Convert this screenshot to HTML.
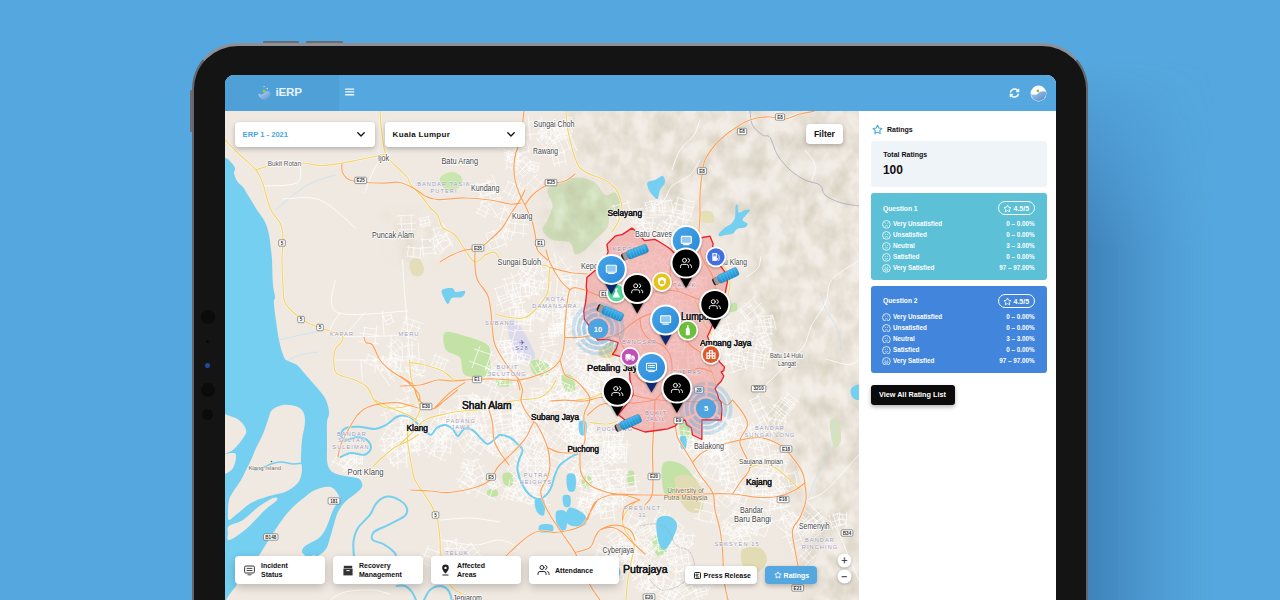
<!DOCTYPE html>
<html lang="en">
<head>
<meta charset="utf-8">
<title>iERP</title>
<style>
*{box-sizing:border-box;margin:0;padding:0}
html,body{width:1280px;height:600px;overflow:hidden}
body{background:#55a8df;font-family:"Liberation Sans",sans-serif;position:relative}
.abs{position:absolute}
#shadow{position:absolute;left:1040px;top:60px;width:240px;height:560px;
 background:linear-gradient(90deg,rgba(52,108,165,.62) 0,rgba(52,108,165,.62) 50px,rgba(52,108,165,.34) 95px,rgba(52,108,165,.1) 140px,rgba(52,108,165,0) 175px);
 -webkit-mask-image:linear-gradient(180deg,transparent 0,rgba(0,0,0,.35) 60px,#000 190px);mask-image:linear-gradient(180deg,transparent 0,rgba(0,0,0,.35) 60px,#000 190px)}
#tablet{position:absolute;left:192px;top:43px;width:896px;height:640px;border-radius:46px;background:#141414;border:2px solid #66676c;border-top:3px solid #8f9095}
.hwb{position:absolute;background:#6c6d72;border-radius:1px}
#screen{position:absolute;left:225px;top:75px;width:831px;height:525px;border-radius:9px 9px 0 0;overflow:hidden;background:#fff}
#hdr{position:absolute;left:0;top:0;width:831px;height:36px;background:#55a8df}
#logo{position:absolute;left:0;top:0;width:114px;height:36px;background:#50a0d8}
#map{position:absolute;left:0;top:36px;width:634px;height:489px;background:#efe9e1;overflow:hidden}
#panel{position:absolute;left:634px;top:36px;width:197px;height:489px;background:#fff}
.b{font-weight:700}
.card{position:absolute;background:#fff;border-radius:4px;box-shadow:0 2px 5px rgba(0,0,0,.22)}
.t{position:absolute;white-space:nowrap;font-weight:700;color:#111;line-height:1}
</style>
</head>
<body>
<div id="shadow"></div>
<div class="hwb" style="left:190px;top:89.500px;width:4px;height:42.500px"></div>
<div class="hwb" style="left:263px;top:40.800px;width:36px;height:4px"></div>
<div class="hwb" style="left:306px;top:40.800px;width:36.600px;height:4px"></div>
<div id="tablet"></div>
<!-- sensors -->
<div class="abs" style="left:200.700px;top:309.700px;width:14px;height:14px;border-radius:50%;background:#0b0b0b"></div>
<div class="abs" style="left:206.200px;top:339.500px;width:3px;height:3px;border-radius:50%;background:#090909"></div>
<div class="abs" style="left:205.200px;top:363.200px;width:5px;height:5px;border-radius:50%;background:#1d4c9a"></div>
<div class="abs" style="left:200.700px;top:383px;width:14px;height:14px;border-radius:50%;background:#0b0b0b"></div>
<div class="abs" style="left:202.200px;top:408.800px;width:11px;height:11px;border-radius:50%;background:#0b0b0b"></div>

<div id="screen">
 <div id="hdr">
  <div id="logo"></div>
  <svg class="abs" style="left:31px;top:9px" width="18" height="18" viewBox="0 0 18 18">
   <defs><linearGradient id="lg1" x1="0" y1="0" x2="1" y2="1"><stop offset="0" stop-color="#b9dcf3"/><stop offset="1" stop-color="#5d8fd0"/></linearGradient></defs>
   <path d="M2.2 9.6 C4.5 11.2 7.2 10.8 8.4 8.6 C9.6 7 12.6 6.6 14.4 8.3 C15 12.2 12.5 15.6 8.6 15.7 C5 15.7 2.6 13 2.2 9.6Z" fill="url(#lg1)"/>
   <circle cx="8" cy="7" r="1.5" fill="#9acb3c"/><circle cx="8.1" cy="2.6" r=".7" fill="#cfe6f7"/><circle cx="11.2" cy="4.6" r=".8" fill="#cfe6f7"/>
  </svg>
  <div class="t" style="left:50.5px;top:11.3px;font-size:11.6px;color:#e6f2fb;letter-spacing:-.2px">iERP</div>
  <svg class="abs" style="left:120px;top:13px" width="10" height="8" viewBox="0 0 10 8"><path d="M.2 1.1h9M.2 3.9h9M.2 6.7h9" stroke="#f4f9fd" stroke-width="1.4"/></svg>
  <svg class="abs" style="left:784px;top:12.5px" width="11" height="10" viewBox="0 0 512 512"><path fill="#f7fbfe" d="M370.7 133.3C339.5 104 298.9 88 255.800 88c-77.500.1-144.300 53.200-162.800 126.900-1.300 5.400-6.100 9.200-11.700 9.200H24.100c-7.500 0-13.200-6.800-11.800-14.200C33.900 94.900 134.800 8 256 8c66.400 0 126.800 26.100 171.300 68.700L463 41C478.100 25.900 504 36.600 504 57.900V192c0 13.300-10.700 24-24 24H345.900c-21.400 0-32.100-25.900-17-41l41.800-41.700zM32 296h134.100c21.400 0 32.100 25.900 17 41l-41.800 41.800c31.300 29.300 71.800 45.300 114.900 45.300 77.400-.1 144.300-53.100 162.800-126.800 1.300-5.400 6.100-9.200 11.700-9.200h57.300c7.500 0 13.200 6.800 11.800 14.200C478.100 417.100 377.200 504 256 504c-66.400 0-126.800-26.100-171.300-68.700L49 471c-15.100 15.100-41 4.400-41-16.900V320c0-13.300 10.700-24 24-24z"/></svg>
  <svg class="abs" style="left:804.500px;top:9.500px" width="17" height="17" viewBox="0 0 17 17">
   <defs><linearGradient id="lg2" x1="0" y1="0" x2="1" y2="1"><stop offset="0" stop-color="#a8d2ee"/><stop offset="1" stop-color="#4f7fc4"/></linearGradient><clipPath id="avc"><circle cx="8.500" cy="8.500" r="7.600"/></clipPath></defs>
   <circle cx="8.500" cy="8.500" r="7.900" fill="#fdfefe"/>
   <path clip-path="url(#avc)" d="M0 8.800 C3 10.300 6.500 10.200 8.300 8.200 C10 6.400 13.500 5.600 17 7.200 V17 H0Z" fill="url(#lg2)"/>
   <circle cx="7.900" cy="5.900" r="1.300" fill="#86c440"/>
  </svg>
 </div>
 <div id="map">
<svg style="position:absolute;left:0;top:0" width="634" height="489" viewBox="225 111 634 489">
<rect x="225" y="111" width="634" height="489" fill="#efe9e1"/>
<path d="M547.5 190C548.8 186.2 555 184.6 560 182.5C565 180.4 571.7 177.5 577.5 177.5C583.3 177.5 590.4 179.6 595 182.5C599.6 185.4 601.7 193.3 605 195C608.3 196.7 612.5 190.8 615 192.5C617.5 194.2 620.8 201.2 620 205C619.2 208.8 612.1 211.2 610 215C607.9 218.8 610 223.3 607.5 227.5C605 231.7 598.8 236.2 595 240C591.2 243.8 588.3 247.7 585 250C581.7 252.3 577.5 255.2 575 254C572.5 252.8 573.8 244.8 570 242.5C566.2 240.2 557.1 242.1 552.5 240C547.9 237.9 543.3 233.3 542.5 230C541.7 226.7 545.8 224.2 547.5 220C549.2 215.8 552.5 210 552.5 205C552.5 200 546.2 193.8 547.5 190Z" fill="#d0dfbb" />
<defs>
<filter id="hsh" x="0" y="0" width="100%" height="100%" color-interpolation-filters="sRGB"><feTurbulence type="fractalNoise" baseFrequency="0.06 0.045" numOctaves="3" seed="11"/><feColorMatrix type="matrix" values="0 0 0 0 .68  0 0 0 0 .65  0 0 0 0 .54  1 0 0 0 -.38"/></filter>
<filter id="hhl" x="0" y="0" width="100%" height="100%" color-interpolation-filters="sRGB"><feTurbulence type="fractalNoise" baseFrequency="0.06 0.045" numOctaves="3" seed="11"/><feColorMatrix type="matrix" values="0 0 0 0 1  0 0 0 0 1  0 0 0 0 1  -1.400 0 0 0 .62"/></filter>
<filter id="hbl"><feGaussianBlur stdDeviation="9"/></filter>
<mask id="hmask"><g filter="url(#hbl)"><path d="M566 100L870 100L870 610L806 610L794 520L772 430L742 385L738 305L748 262L735 232L700 226L660 222L640 208L622 180L596 172L578 160Z" fill="#fff"/><path d="M548 190L578 178L618 196L608 228L576 254L544 232Z" fill="#fff"/><path d="M385 215L440 225L450 255L400 262Z" fill="#999"/></g></mask>
</defs>
<g mask="url(#hmask)" opacity=".7"><rect x="225" y="111" width="634" height="489" filter="url(#hsh)"/><rect x="225" y="111" width="634" height="489" filter="url(#hhl)"/></g>
<path d="M445 332.5C448.2 330.2 457.9 333.9 465 336C472.1 338.1 483.3 341 487.5 345C491.7 349 489.8 355 490 360C490.2 365 493.2 372.5 489 375C484.8 377.5 469.8 377.9 465 375C460.2 372.1 463.2 361.7 460 357.5C456.8 353.3 448.5 354.2 446 350C443.5 345.8 441.8 334.8 445 332.5Z" fill="#c3e3a6" />
<path d="M530 362.5C530.8 360 536.7 359.6 540 360C543.3 360.4 548.3 362.5 550 365C551.7 367.5 552.5 373.3 550 375C547.5 376.7 538.3 377.1 535 375C531.7 372.9 529.2 365 530 362.5Z" fill="#c3e3a6" />
<path d="M497.5 379C499.5 377.8 507.9 377.8 510 379C512.1 380.2 512 384.8 510 386C508 387.2 500.1 387.2 498 386C495.9 384.8 495.5 380.2 497.5 379Z" fill="#c3e3a6" />
<path d="M562 375C563.2 372.7 569.8 373.5 572 376C574.2 378.5 576.2 387.7 575 390C573.8 392.3 567.2 392.5 565 390C562.8 387.5 560.8 377.3 562 375Z" fill="#c3e3a6" />
<path d="M662.5 465C664.6 459.6 672.5 460.8 677.5 462.5C682.5 464.2 687.9 468.8 692.5 475C697.1 481.2 707.1 495.8 705 500C702.9 504.2 686.7 500.8 680 500C673.3 499.2 667.9 500.8 665 495C662.1 489.2 660.4 470.4 662.5 465Z" fill="#c3e3a6" />
<path d="M680 422C681.3 420.7 686 421.3 688 424C690 426.7 692.7 435.3 692 438C691.3 440.7 686 441 684 440C682 439 680.7 435 680 432C679.3 429 678.7 423.3 680 422Z" fill="#bfe1a2" />
<path d="M440 178C441 175 448.3 172 452 172C455.7 172 461 175.3 462 178C463 180.7 460.7 186 458 188C455.3 190 449 191.7 446 190C443 188.3 439 181 440 178Z" fill="#c9e6ad" />
<path d="M582 478C583 476 588.3 474.7 590 476C591.7 477.3 593 484 592 486C591 488 585.7 489.3 584 488C582.3 486.7 581 480 582 478Z" fill="#c3e3a6" />
<path d="M503 474C504.3 472.3 510.5 472 512 474C513.5 476 513.3 484.3 512 486C510.7 487.7 505.5 486 504 484C502.5 482 501.7 475.7 503 474Z" fill="#c3e3a6" />
<path d="M488 490C489.5 489 495.5 489 497 490C498.5 491 498.5 495 497 496C495.5 497 489.5 497 488 496C486.5 495 486.5 491 488 490Z" fill="#c3e3a6" />
<path d="M652 540C652.7 536.5 659.3 533.7 662 535C664.7 536.3 668.7 544.5 668 548C667.3 551.5 660.7 557.3 658 556C655.3 554.7 651.3 543.5 652 540Z" fill="#c3e3a6" />
<path d="M628 472C629 470 633 470 634 472C635 474 635 482 634 484C633 486 629 486 628 484C627 482 627 474 628 472Z" fill="#c3e3a6" />
<path d="M728 305C729 303.5 734.5 302.2 736 303C737.5 303.8 738 308.5 737 310C736 311.5 731.5 312.8 730 312C728.5 311.2 727 306.5 728 305Z" fill="#c3e3a6" />
<path d="M675 478C676.7 474 685.5 474 690 476C694.5 478 700 484.3 702 490C704 495.7 704 506.3 702 510C700 513.7 693.7 513.7 690 512C686.3 510.3 682.5 505.7 680 500C677.5 494.3 673.3 482 675 478Z" fill="#e2dcb4" />
<path d="M410 262C411 259.3 415.7 257 418 258C420.3 259 423.7 265 424 268C424.3 271 422 275 420 276C418 277 413.7 276.3 412 274C410.3 271.7 409 264.7 410 262Z" fill="#e3ddba" />
<path d="M600 348C602 345.7 609 341.7 612 342C615 342.3 618.3 347.3 618 350C617.7 352.7 613 357 610 358C607 359 601.7 357.7 600 356C598.3 354.3 598 350.3 600 348Z" fill="#ddd3a0" />
<path d="M700 212C701.7 210.3 709.7 210.3 712 212C714.3 213.7 715.7 220.3 714 222C712.3 223.7 704.3 223.7 702 222C699.7 220.3 698.3 213.7 700 212Z" fill="#e6e0b8" />
<path d="M742 550C744.7 546.7 755.8 546.3 760 548C764.2 549.7 767.3 556 767 560C766.7 564 761.8 570.7 758 572C754.2 573.3 746.7 571.7 744 568C741.3 564.3 739.3 553.3 742 550Z" fill="#e2dcb4" />
<path d="M830 422C830.7 417.5 836.2 417 838 420C839.8 423 841.7 435.5 841 440C840.3 444.5 835.8 450 834 447C832.2 444 829.3 426.5 830 422Z" fill="#d5e2bd" />
<path d="M507.5 325C507.9 319.6 512.9 317.5 517.5 322.5C522.1 327.5 533.8 348.8 535 355C536.2 361.2 528.3 360 525 360C521.7 360 517.9 360.8 515 355C512.1 349.2 507.1 330.4 507.5 325Z" fill="#dcd9ea" />
<path d="M411 409Q409 412 407 416M408 408Q405 411 404 415M405 406Q402 410 401 413M402 403Q399 409 397 413M412 410Q406 406 401 404M407 415Q404 412 399 411M421 435Q424 444 427 450M412 437Q415 446 419 456M426 436Q417 439 410 443M428 447Q422 449 416 452M386 427Q393 431 399 434M384 433Q390 436 395 439M381 437Q387 442 392 444M388 427Q384 433 381 439M394 429Q390 435 385 443M398 432Q393 438 391 445M395 406Q399 416 402 425M384 411Q386 419 390 428M402 408Q390 411 380 416M402 420Q395 423 388 425M422 416Q421 428 417 440M415 417Q413 426 411 436M409 417Q408 425 405 434M404 413Q400 424 399 435M424 422Q412 419 399 417M417 434Q409 433 400 430M418 425Q422 427 429 429M413 430Q420 432 430 436M411 437Q418 440 426 442M417 424Q416 431 412 437M423 428Q421 433 419 439M430 429Q428 435 425 442M407 462Q399 462 390 463M405 451Q398 451 391 452M407 468Q406 457 406 445M398 469Q398 456 397 445M391 464Q390 457 390 450M421 446Q417 449 411 453M420 444Q415 448 410 451M417 441Q412 445 408 447M414 439Q410 441 407 444M420 449Q415 445 413 439M414 452Q410 448 407 444M452 437Q451 446 450 455M444 435Q443 445 443 456M436 432Q435 445 434 457M456 440Q444 440 432 438M452 453Q443 451 433 451M401 407Q412 407 422 407M401 419Q412 418 421 419M406 406Q405 413 406 420M417 404Q418 414 417 422M419 435Q419 444 419 451M414 433Q415 442 414 452M409 433Q410 442 409 453M405 435Q404 442 405 450M420 436Q412 437 404 436M420 443Q412 442 403 442M421 450Q411 451 402 450M418 439Q409 439 400 440M418 428Q408 429 400 429M417 442Q417 433 416 426M409 441Q409 434 408 428M401 441Q400 435 400 428M409 455Q401 461 392 466M405 451Q398 455 390 460M401 445Q393 449 387 455M400 440Q391 445 382 451M406 453Q404 448 400 443M401 461Q395 454 390 445M395 467Q388 457 382 448M447 437Q447 443 445 452M442 438Q443 444 441 450M437 438Q437 444 436 449M447 441Q442 441 436 440M445 448Q440 447 436 447M431 440Q442 444 451 449M425 451Q435 456 446 461M437 439Q433 448 428 458M447 446Q442 453 440 461M410 404Q405 406 401 408M410 397Q402 400 397 402M410 406Q408 400 406 395M402 408Q402 405 399 400M444 441Q436 448 430 454M439 435Q432 442 425 448M435 429Q428 436 419 444M440 442Q436 439 432 434M435 454Q428 445 420 438M396 449Q389 450 381 451M396 444Q388 445 379 446M394 438Q386 439 379 440M393 449Q392 444 392 439M385 453Q385 445 383 438M420 432Q415 439 411 445M416 427Q409 434 405 443M411 424Q406 433 400 441M406 421Q401 429 396 437M420 434Q411 429 402 423M409 442Q404 439 400 436M443 425Q446 430 449 433M436 428Q441 435 445 439M444 426Q442 429 437 432M448 431Q445 434 442 436M405 402Q408 408 411 413M401 405Q404 409 406 414M396 407Q400 411 402 418M408 403Q402 406 395 410M411 410Q405 412 399 416M444 418Q450 428 455 435M437 422Q442 431 449 439M431 426Q437 434 443 444M449 419Q439 425 431 431M452 431Q447 436 440 439M402 436Q406 443 410 447M397 440Q402 447 405 452M391 444Q395 449 399 455M402 439Q397 441 393 445M411 445Q404 450 396 455M411 427Q413 435 417 443M403 431Q405 438 409 446M413 429Q408 432 402 433M417 434Q409 436 403 440M419 439Q412 442 405 445M395 398Q403 402 411 406M394 402Q400 406 408 409M390 405Q399 409 408 414M391 410Q397 414 403 417M398 401Q395 405 393 410M407 405Q404 409 401 415M413 436Q403 437 395 439M409 426Q402 428 396 428M411 437Q409 431 409 426M404 440Q404 433 402 424M397 440Q395 433 395 426M359 460Q352 465 348 470M355 456Q350 462 344 466M352 453Q348 456 342 462M357 462Q353 458 349 454M351 467Q348 463 344 459M351 456Q348 465 343 472M344 455Q340 460 338 466M340 449Q336 458 331 466M351 460Q343 457 336 452M347 468Q339 465 332 461M360 463Q354 468 348 475M356 459Q349 465 344 472M353 457Q347 462 342 469M347 454Q344 459 339 463M357 464Q353 460 348 455M355 470Q347 465 342 458M351 473Q345 469 339 463M362 453Q363 459 362 465M360 455Q361 458 360 464M357 454Q356 458 357 465M354 454Q354 460 354 464M364 456Q358 455 352 456M363 459Q359 459 354 459M363 463Q358 463 354 463M363 474Q360 478 358 483M359 472Q356 476 354 480M354 470Q351 473 350 478M363 475Q359 471 354 470M360 478Q355 477 353 475M359 482Q354 481 350 478M488 436Q493 440 496 442M486 438Q491 441 495 445M485 442Q487 444 492 447M481 444Q485 446 491 450M489 437Q486 441 483 445M495 440Q492 444 488 449M451 409Q451 417 448 424M440 408Q440 415 438 421M450 411Q445 411 440 409M450 422Q443 422 436 420M472 394Q475 395 480 397M468 396Q474 399 481 401M468 400Q473 401 479 403M466 402Q471 405 479 407M473 392Q470 398 468 405M477 394Q475 399 472 406M480 397Q480 402 477 406M516 401Q511 404 508 407M514 397Q508 400 505 404M512 391Q505 396 500 401M514 401Q513 397 509 395M510 407Q506 402 503 398M479 419Q481 425 482 432M471 418Q474 428 475 436M464 421Q465 429 467 437M480 418Q471 421 462 422M479 425Q474 426 467 428M480 433Q475 435 469 436M487 434Q494 436 501 436M489 439Q495 440 498 439M489 441Q494 440 499 442M489 445Q494 445 498 446M491 434Q490 439 490 446M497 436Q496 440 497 445M491 438Q500 443 507 447M483 447Q492 454 503 458M495 438Q492 444 487 451M506 443Q501 451 497 458M483 400Q479 406 474 409M480 398Q476 401 472 406M478 396Q474 400 470 404M475 395Q472 397 468 402M482 401Q478 398 475 394M478 404Q474 401 472 398M476 408Q471 403 468 400M510 430Q509 435 511 439M503 431Q504 436 505 441M512 431Q506 432 501 432M512 434Q507 434 502 435M513 438Q507 439 502 440M461 422Q461 430 461 436M455 420Q455 429 455 438M451 418Q449 429 450 439M446 418Q445 429 445 440M463 423Q454 424 443 423M458 434Q453 434 447 434M502 452Q496 452 492 453M505 444Q497 444 488 445M501 454Q500 449 500 443M493 456Q493 450 492 442M489 441Q483 449 479 456M485 434Q477 443 471 454M478 429Q471 439 464 449M486 442Q481 439 476 435M482 455Q473 449 465 443M478 443Q470 447 464 452M474 430Q465 438 454 443M479 445Q474 437 470 431M471 449Q467 442 463 436M465 453Q461 447 457 440M475 416Q469 416 463 417M474 410Q468 411 462 411M475 403Q467 404 459 405M474 416Q473 409 472 404M464 416Q464 412 463 406M530 434Q524 435 516 436M531 430Q521 431 514 432M531 424Q522 425 513 427M528 420Q522 420 514 422M527 432Q526 427 526 422M518 436Q517 429 516 421M465 412Q464 421 464 429M460 409Q458 420 458 430M454 410Q452 419 452 429M448 411Q446 418 446 427M467 415Q456 413 446 413M463 426Q456 424 448 424M472 407Q465 408 458 408M474 395Q464 395 454 397M470 408Q469 401 469 396M460 410Q460 403 459 395M485 425Q487 430 486 435M481 424Q483 431 482 436M477 424Q478 431 479 438M475 426Q474 431 476 436M485 425Q480 425 474 426M486 430Q479 431 474 431M484 435Q481 435 477 435M504 447Q495 449 488 452M500 440Q494 442 486 445M502 451Q500 443 497 437M496 450Q495 446 493 442M492 454Q489 449 487 441M461 429Q453 430 446 433M463 424Q453 427 441 428M458 419Q450 420 444 422M461 412Q451 415 438 417M460 428Q460 420 457 415M453 429Q451 423 450 416M445 431Q444 425 443 418M516 424Q507 424 497 425M517 419Q508 419 496 419M517 414Q507 413 496 414M515 408Q506 408 498 408M513 427Q512 416 513 406M501 423Q501 416 501 410M524 415Q526 421 530 426M517 414Q521 423 527 432M514 419Q517 425 521 431M509 419Q514 427 517 436M525 416Q518 420 511 424M528 426Q521 429 517 431M492 391Q497 392 502 395M487 399Q494 403 501 404M492 387Q489 395 486 403M499 390Q495 397 493 405M503 395Q502 400 500 404M450 425Q446 432 439 442M443 420Q437 430 431 438M436 416Q431 425 425 433M449 428Q441 424 434 419M441 439Q435 434 427 430M490 398Q489 407 489 417M484 396Q484 406 483 419M477 395Q477 406 477 420M471 399Q470 408 471 415M491 399Q481 400 470 399M491 408Q481 408 470 407M491 416Q480 416 469 416M470 433Q478 435 484 438M468 440Q475 442 482 445M473 432Q471 437 470 442M479 432Q475 439 474 446M482 436Q481 440 479 444M511 412Q517 412 525 412M512 416Q517 415 524 416M512 421Q519 420 523 421M512 425Q516 426 523 426M513 411Q512 417 513 426M523 411Q523 419 522 426M451 429Q446 434 444 438M446 425Q442 431 439 435M444 420Q438 426 432 434M451 431Q445 427 440 422M447 439Q440 434 433 428M497 407Q500 414 502 421M488 409Q492 418 494 425M481 410Q484 419 488 429M497 407Q490 410 482 413M502 414Q491 416 482 421M502 421Q494 424 487 427M519 446Q513 449 507 451M519 438Q511 442 502 446M516 432Q507 435 499 439M520 447Q517 439 513 431M514 450Q511 441 507 433M508 453Q505 445 500 436M475 421Q480 425 485 428M472 428Q477 430 480 433M477 420Q474 424 470 430M481 424Q478 427 475 432M486 424Q482 430 477 436M494 408Q489 411 486 415M491 404Q487 408 482 411M489 396Q483 401 475 408M493 409Q489 405 485 399M487 415Q483 410 478 404M498 407Q500 413 500 422M491 411Q493 415 492 420M501 411Q495 412 489 413M500 417Q495 418 491 419M508 418Q509 426 511 434M501 418Q503 429 504 438M493 419Q496 428 497 440M507 420Q501 421 496 422M512 426Q503 429 493 430M509 434Q503 435 498 436M461 398Q466 401 471 402M459 403Q464 404 469 407M455 407Q462 411 469 412M461 399Q460 403 458 408M470 400Q468 407 465 412M524 426Q519 428 516 431M521 420Q516 424 512 426M524 427Q522 424 520 420M521 430Q518 426 516 421M516 432Q514 427 512 425M536 400Q542 404 550 409M532 404Q540 409 548 415M528 409Q538 415 546 421M528 415Q535 419 540 423M537 404Q534 409 530 414M550 406Q544 415 538 425M582 429Q576 433 569 435M580 422Q573 424 565 428M581 431Q579 427 577 422M576 435Q574 429 571 422M571 434Q570 430 567 426M512 402Q522 403 529 407M509 412Q517 416 527 418M517 401Q514 408 513 415M526 405Q524 410 523 416M549 435Q544 438 540 443M544 431Q540 435 536 438M550 437Q547 434 542 429M545 440Q543 436 540 434M543 443Q540 440 536 436M575 441Q570 441 564 441M576 434Q568 434 562 435M575 430Q568 430 563 430M574 441Q573 436 573 429M565 440Q566 436 565 431M562 457Q558 467 555 474M552 454Q549 461 546 469M565 463Q555 458 546 455M559 471Q551 467 544 465M521 407Q523 413 524 418M514 409Q516 414 517 420M523 409Q518 411 513 412M525 415Q520 417 515 418M584 424Q578 426 573 426M584 417Q576 417 571 420M583 426Q581 420 581 416M579 428Q577 421 576 416M574 429Q572 423 571 417M547 437Q543 447 539 458M541 435Q538 444 533 455M534 436Q532 443 529 450M531 429Q526 441 522 452M547 443Q537 439 526 435M541 453Q533 449 524 446M541 427Q543 433 545 438M537 428Q539 434 542 440M533 427Q536 434 539 443M529 429Q533 438 535 445M540 427Q536 428 530 431M542 433Q538 434 532 436M546 437Q539 440 533 442M516 439Q516 444 517 448M509 439Q511 445 511 451M517 440Q513 441 508 442M519 446Q513 447 508 448M557 403Q549 406 540 409M555 398Q546 401 539 404M554 394Q545 397 536 400M549 389Q542 391 537 393M556 406Q552 396 549 387M548 404Q546 399 545 393M542 411Q540 401 536 392M527 403Q527 408 524 412M524 401Q522 407 520 412M520 400Q517 405 516 411M517 400Q516 405 514 408M525 404Q520 403 517 402M523 410Q519 409 515 407M521 398Q529 403 538 408M516 407Q526 411 533 417M525 397Q521 405 517 412M531 400Q526 409 522 415M535 406Q532 410 529 416M575 415Q576 420 579 424M569 416Q571 421 574 427M565 419Q567 423 569 429M576 413Q568 416 563 419M576 420Q572 423 568 424M579 425Q574 428 570 429M534 453Q541 459 550 465M528 456Q539 464 549 472M526 462Q534 470 543 476M523 467Q531 473 539 480M537 456Q532 463 526 470M547 463Q540 470 536 477M577 412Q573 419 571 424M574 412Q572 417 569 421M571 409Q568 415 565 421M568 407Q566 412 562 419M577 415Q572 412 567 409M575 418Q570 416 565 412M573 423Q567 419 562 416M527 428Q534 432 540 439M522 433Q529 440 536 445M519 440Q524 444 530 449M531 429Q525 436 520 443M539 435Q533 443 527 449M585 435Q580 442 574 450M579 430Q574 440 568 447M574 428Q569 435 563 442M569 423Q563 431 557 439M584 439Q575 432 565 425M574 447Q568 443 561 438M563 416Q571 420 577 426M556 419Q566 426 577 434M554 425Q562 432 572 438M551 431Q560 436 568 443M562 419Q558 425 554 431M570 420Q564 428 558 438M576 428Q571 435 568 440M567 410Q558 410 549 411M566 402Q557 403 549 403M565 394Q556 394 549 395M564 409Q563 401 563 395M552 413Q550 403 550 392M573 426Q580 430 588 431M571 432Q580 436 586 438M570 438Q576 440 583 443M576 425Q573 432 570 441M582 427Q580 434 576 443M588 429Q585 437 582 445M525 448Q527 452 531 458M520 448Q526 455 529 462M518 452Q521 457 525 462M513 453Q517 459 521 466M524 448Q520 451 516 454M530 452Q523 456 517 461M530 458Q526 461 522 463M543 396Q546 398 551 398M540 398Q546 398 552 401M540 402Q546 403 551 405M540 405Q545 406 550 407M543 397Q542 401 541 404M547 396Q546 401 544 407M551 398Q550 402 549 407M565 404Q559 408 553 410M565 400Q557 405 550 407M561 396Q555 398 549 402M562 390Q552 395 544 399M564 407Q561 398 557 391M555 411Q551 403 548 395M562 443Q555 451 547 460M557 440Q551 449 543 455M554 434Q546 443 537 453M548 432Q542 439 534 447M557 446Q552 441 547 437M549 455Q543 451 539 446M572 421Q579 423 585 426M571 428Q576 431 580 432M575 422Q574 426 573 429M583 423Q580 428 578 434M524 436Q520 439 516 441M522 433Q517 434 514 438M520 430Q516 432 512 435M518 427Q513 430 510 433M523 437Q520 433 516 427M517 439Q514 436 512 432M564 448Q572 449 579 450M564 451Q571 452 579 453M566 455Q570 456 576 456M564 458Q571 459 578 460M567 446Q566 453 565 460M572 450Q571 455 571 458M577 449Q577 454 575 460M542 401Q537 402 532 401M545 397Q537 397 529 397M543 393Q538 394 531 393M544 388Q536 389 529 388M541 401Q541 395 541 389M533 401Q532 395 532 389M544 412Q548 415 551 419M539 415Q543 419 548 424M536 419Q540 423 545 427M546 411Q541 418 536 422M549 419Q546 422 544 425M570 426Q565 427 561 430M569 423Q565 424 560 427M567 419Q563 421 558 422M570 426Q568 424 566 419M566 428Q565 425 563 421M562 429Q560 426 559 423M608 367Q603 368 597 370M607 363Q600 365 596 366M606 358Q600 359 594 361M606 367Q606 363 604 359M598 369Q597 365 596 361M560 304Q565 307 569 309M556 310Q562 312 567 315M561 303Q560 308 557 311M565 305Q564 310 561 314M569 308Q567 312 565 315M584 365Q579 371 571 376M580 363Q574 368 570 372M578 359Q573 365 566 369M575 355Q570 360 562 366M581 368Q577 363 572 357M576 374Q571 368 565 362M545 373Q556 374 566 375M546 383Q555 384 563 385M551 369Q549 378 549 388M561 373Q560 379 560 386M581 331Q573 336 563 338M577 328Q570 329 564 333M575 323Q568 326 562 328M573 318Q566 321 561 323M577 334Q573 327 571 319M568 336Q565 330 563 323M581 369Q590 374 601 380M578 383Q585 387 592 390M586 366Q582 376 575 387M593 370Q588 379 583 390M599 378Q595 384 592 391M558 380Q564 383 570 385M551 389Q560 393 570 396M559 381Q558 386 555 390M565 383Q562 388 561 393M570 384Q568 389 565 396M566 296Q568 303 569 311M562 298Q564 304 564 310M557 299Q557 306 559 311M568 297Q563 298 556 299M568 303Q562 304 557 305M571 308Q564 310 556 310M545 358Q550 366 555 373M542 361Q546 368 550 375M536 362Q542 371 546 380M531 364Q537 374 543 383M545 361Q541 364 535 367M552 365Q543 371 536 375M553 372Q548 376 541 379M592 330Q596 332 600 336M587 333Q593 338 598 341M586 337Q591 340 595 343M594 329Q590 334 586 339M599 334Q596 339 593 343M563 324Q564 327 565 333M560 323Q562 329 562 334M556 323Q557 329 559 336M554 325Q555 329 556 335M565 324Q558 324 552 326M564 328Q559 328 554 330M566 332Q560 334 553 334M606 365Q608 369 610 375M602 368Q604 373 606 376M598 368Q599 373 602 379M606 367Q603 368 600 370M610 369Q605 372 599 374M610 373Q607 376 601 377M568 392Q572 395 578 399M566 396Q572 399 575 402M564 400Q568 402 573 406M570 393Q566 397 565 402M573 396Q571 400 569 403M576 398Q575 402 572 405M589 378Q595 379 600 383M584 385Q589 388 597 392M591 377Q588 383 586 388M599 381Q596 386 594 392M569 347Q573 351 576 357M564 352Q567 357 570 361M573 347Q567 349 563 354M576 351Q570 354 566 358M577 355Q573 359 570 360M591 338Q585 342 581 349M584 332Q580 337 575 343M590 342Q584 337 580 334M585 348Q581 344 575 339M560 377Q555 381 553 387M556 371Q551 377 545 384M552 366Q545 373 540 381M561 379Q555 375 548 369M554 387Q548 381 542 377M587 325Q578 326 571 328M587 314Q577 315 568 318M587 327Q586 319 585 313M580 330Q578 322 577 313M572 328Q571 322 570 317M602 392Q595 393 590 395M602 387Q596 389 588 391M598 382Q593 385 589 385M602 394Q600 387 598 381M596 394Q594 389 593 384M592 397Q590 389 589 384M589 304Q588 310 587 318M583 303Q582 310 581 317M578 299Q576 308 575 319M571 300Q571 309 569 317M587 303Q580 303 574 301M588 311Q579 308 571 308M585 318Q578 317 571 316M567 313Q568 318 571 325M561 316Q563 321 564 325M571 314Q564 315 558 318M574 321Q567 324 560 326M540 348Q550 353 559 355M539 360Q545 361 552 365M546 346Q542 354 539 364M556 350Q552 358 549 367M568 392Q563 395 560 399M564 388Q560 391 557 394M568 396Q565 392 560 387M563 399Q561 396 556 391M596 311Q592 324 587 334M589 309Q585 319 580 330M580 309Q576 317 574 325M596 319Q586 314 577 311M593 330Q582 326 572 321M588 362Q586 368 584 373M584 359Q582 364 579 372M579 359Q578 364 575 368M587 364Q584 362 579 361M585 371Q580 369 575 366M569 320Q574 327 579 335M561 327Q567 334 571 340M570 321Q565 325 561 328M577 325Q570 330 563 335M578 333Q575 336 570 339M578 325Q568 330 558 332M575 319Q565 323 556 326M570 314Q564 316 557 319M574 326Q571 319 569 314M569 331Q565 322 562 313M562 334Q559 324 555 316M593 349Q583 351 576 351M592 346Q583 347 576 348M589 341Q583 341 578 343M588 337Q583 338 577 339M590 350Q588 345 588 337M585 349Q585 344 583 339M578 350Q578 346 577 340M591 324Q587 327 582 331M589 321Q585 324 580 329M587 320Q584 324 579 327M584 318Q581 322 578 323M591 325Q587 321 584 317M587 327Q584 325 582 321M583 330Q580 328 578 324M557 326Q559 331 559 336M553 325Q554 333 555 339M548 327Q549 332 550 339M558 327Q553 328 548 329M558 332Q554 333 550 333M559 336Q555 336 550 337M599 342Q604 353 611 364M592 346Q598 358 603 368M587 353Q591 361 595 368M603 347Q596 351 587 355M609 359Q601 362 593 367M596 360Q603 364 612 368M591 366Q601 371 610 376M589 374Q597 379 606 382M599 359Q593 368 590 377M604 364Q602 372 597 379M612 365Q608 375 603 384M560 367Q554 375 549 382M553 364Q548 370 544 376M547 361Q542 366 539 371M561 372Q552 366 544 360M552 379Q546 376 540 370M575 352Q583 354 589 354M574 359Q581 360 588 360M571 365Q581 366 591 367M577 353Q577 359 576 365M587 351Q586 359 585 370M558 344Q548 346 540 347M555 341Q547 342 541 343M556 335Q547 336 539 338M554 332Q546 332 540 334M553 345Q552 338 551 332M544 345Q543 340 542 334M611 370Q608 375 603 380M605 367Q601 371 599 374M610 372Q606 369 604 367M609 376Q605 372 600 368M605 377Q601 376 599 373M584 403Q574 406 566 409M583 396Q574 398 563 402M582 389Q571 393 560 395M580 404Q579 397 576 391M570 407Q568 401 566 394M605 310Q602 323 600 334M597 312Q596 320 593 329M589 308Q586 318 585 329M606 315Q597 313 587 310M601 322Q595 319 588 319M601 330Q593 329 584 326M565 361Q559 367 556 374M556 357Q552 363 549 367M565 366Q560 361 553 357M562 374Q555 367 547 363M598 390Q596 396 592 404M591 382Q586 394 582 403M584 380Q579 390 576 399M600 393Q588 389 579 383M595 404Q584 399 574 394M577 374Q583 375 588 377M577 377Q583 377 587 379M575 380Q582 383 587 383M576 384Q580 385 584 386M578 375Q578 380 576 383M582 376Q581 379 580 384M587 376Q585 380 585 386M585 368Q592 374 597 378M581 372Q586 377 594 382M579 377Q585 381 589 386M589 369Q585 374 581 379M595 375Q591 378 587 384M584 395Q579 401 575 410M580 389Q575 399 568 411M573 386Q569 397 562 407M566 387Q563 393 559 401M582 395Q575 392 567 387M580 402Q571 398 563 393M575 410Q568 406 559 402M562 331Q555 332 550 334M560 327Q555 329 549 330M558 324Q553 326 550 326M560 331Q560 328 558 324M556 334Q555 329 553 324M552 333Q550 329 550 327M525 259Q533 261 539 264M523 262Q530 267 539 268M520 267Q529 270 538 274M521 271Q528 273 535 277M526 259Q523 266 522 271M532 263Q530 268 529 273M538 264Q536 269 534 276M534 310Q539 312 545 312M532 318Q538 318 544 320M536 308Q534 314 533 321M544 308Q543 315 541 323M517 306Q510 308 500 312M516 298Q505 301 496 306M510 293Q503 296 497 298M514 306Q512 299 510 294M504 312Q500 303 498 296M538 293Q531 296 524 296M536 283Q528 284 521 286M537 296Q535 288 534 281M527 298Q526 292 524 284M572 266Q563 272 555 277M564 258Q558 263 551 267M570 272Q565 265 559 256M562 277Q557 270 552 263M518 271Q522 279 525 289M511 273Q515 282 518 293M504 278Q507 285 509 293M522 273Q512 278 502 280M526 285Q515 289 506 292M529 282Q530 290 529 300M521 280Q520 292 520 301M513 280Q512 291 512 300M530 284Q520 284 512 283M531 297Q520 296 510 296M541 301Q545 303 550 306M536 307Q542 309 550 313M542 299Q539 304 537 310M548 301Q546 308 542 312M552 302Q549 308 546 315M577 278Q576 288 575 297M571 277Q570 287 569 297M564 278Q563 287 563 295M558 275Q557 287 556 296M578 281Q568 279 556 279M573 293Q566 294 559 292M549 277Q539 285 531 294M538 270Q531 277 525 282M547 281Q542 275 537 270M544 289Q535 281 528 273M536 293Q529 286 525 281M526 278Q534 281 544 282M524 285Q534 287 542 289M523 291Q531 293 540 295M528 279Q527 285 525 291M535 278Q533 286 531 296M541 281Q540 289 537 295M551 282Q550 286 550 291M544 280Q543 284 542 291M551 283Q547 282 544 282M550 289Q546 289 542 288M573 285Q569 285 564 287M573 279Q567 279 561 282M574 274Q567 276 558 277M572 285Q570 279 569 274M564 286Q563 281 562 277M518 304Q519 310 520 319M509 306Q511 313 511 319M521 307Q514 307 507 309M521 315Q515 316 510 317M521 299Q523 305 523 314M515 301Q516 308 517 313M525 302Q519 303 513 304M525 310Q520 310 515 311M525 273Q528 276 532 279M522 275Q527 279 530 283M520 279Q523 281 527 285M518 281Q522 283 525 288M526 274Q523 278 519 281M531 279Q529 283 524 286M554 253Q557 263 558 275M547 256Q548 264 550 274M540 256Q541 265 543 276M553 259Q549 259 542 261M558 269Q549 269 540 271M539 307Q545 310 551 314M536 310Q544 315 549 318M536 316Q539 319 544 321M541 308Q538 313 536 317M546 309Q543 316 539 321M550 311Q546 317 543 323M573 311Q564 312 553 313M569 305Q562 305 556 306M569 298Q561 297 555 299M568 311Q567 306 567 299M557 312Q557 305 556 299M515 314Q524 315 534 315M517 319Q524 319 532 319M516 324Q524 324 533 325M514 330Q523 331 534 331M519 315Q519 323 518 329M531 312Q530 323 530 332M574 323Q561 323 549 324M569 315Q561 314 553 316M569 306Q560 306 552 307M570 322Q569 315 569 307M562 328Q560 316 560 303M553 325Q553 316 552 307M533 313Q532 319 530 324M530 313Q528 319 527 323M526 313Q526 316 524 321M523 311Q522 316 520 321M532 315Q528 314 522 312M530 321Q526 321 522 320M526 323Q519 323 514 324M526 318Q520 318 514 318M526 312Q521 313 514 312M524 326Q524 319 524 310M515 326Q516 318 515 310M517 294Q507 298 497 301M513 283Q504 285 494 289M516 298Q514 289 511 281M508 298Q506 292 504 286M500 302Q497 295 495 288M525 302Q519 303 512 306M524 298Q516 301 510 303M521 296Q515 298 512 299M520 292Q515 294 510 295M521 303Q520 298 518 293M515 304Q513 300 512 296M524 263Q528 267 532 269M519 268Q523 271 528 275M526 262Q522 266 519 270M528 265Q525 268 523 272M532 267Q529 272 525 276M705 345Q707 356 708 367M699 346Q701 357 701 367M694 347Q695 356 696 368M687 347Q689 358 689 368M706 350Q696 351 687 352M707 361Q698 362 689 363M722 353Q718 357 713 360M722 346Q713 351 706 357M717 342Q711 345 704 351M721 352Q719 348 716 344M719 358Q714 351 710 344M712 360Q708 355 705 350M685 254Q690 260 693 267M681 258Q686 264 688 269M676 260Q679 266 685 273M686 257Q682 260 677 263M688 261Q684 263 681 266M690 266Q687 268 684 270M608 316Q615 318 623 321M609 321Q615 324 619 325M607 326Q611 327 617 330M612 316Q609 322 608 328M619 321Q617 325 616 328M673 325Q666 328 661 330M672 318Q665 320 657 324M670 312Q663 315 654 318M674 328Q670 319 667 310M667 328Q665 321 662 314M661 331Q659 323 655 316M667 344Q676 344 684 345M667 351Q676 352 684 351M667 358Q676 357 684 358M669 346Q668 351 668 356M675 343Q674 351 675 360M682 344Q682 351 682 358M654 401Q650 404 645 407M651 398Q647 401 643 403M650 392Q644 397 639 400M654 403Q650 399 647 393M651 406Q647 400 643 395M645 406Q643 402 641 400M722 337Q719 341 716 344M720 336Q718 340 714 342M719 332Q715 336 710 341M717 329Q712 335 707 339M723 338Q719 335 714 330M719 340Q717 337 713 335M715 344Q712 340 709 338M611 301Q606 310 603 321M599 296Q595 306 591 317M611 305Q603 301 596 299M610 319Q599 315 587 310M657 404Q656 412 655 417M652 405Q651 411 650 414M648 403Q647 408 646 414M656 406Q652 405 648 404M658 411Q652 410 645 409M656 416Q650 415 645 414M684 300Q681 305 679 313M681 299Q679 306 676 312M676 299Q674 303 673 309M673 296Q671 302 668 309M681 302Q677 302 673 300M680 310Q674 309 669 306M668 265Q666 273 664 281M655 258Q652 271 650 281M671 267Q661 264 651 262M669 281Q658 278 646 275M648 326Q651 333 655 342M644 330Q647 336 648 341M639 331Q641 338 644 344M651 329Q643 331 638 334M652 338Q648 339 643 342M689 274Q696 277 705 279M688 281Q695 284 702 285M687 287Q692 288 699 290M690 276Q689 280 688 285M697 276Q696 282 693 289M702 278Q700 285 699 290M677 311Q681 313 687 318M675 317Q680 318 684 322M680 312Q677 315 676 319M685 315Q683 319 681 322M679 248Q682 254 683 261M673 248Q675 256 678 265M667 250Q671 259 672 266M680 248Q673 249 666 252M682 255Q676 256 668 259M686 261Q677 263 669 266M665 257Q658 266 654 274M660 257Q657 262 651 269M657 251Q651 261 645 269M651 250Q646 256 642 264M662 261Q655 258 649 253M656 270Q649 267 644 262M599 270Q608 275 615 278M592 280Q603 285 611 289M602 267Q597 275 593 284M608 271Q604 279 601 286M615 276Q611 282 608 289M664 312Q661 319 657 324M660 311Q658 316 654 320M657 310Q654 315 651 319M653 307Q651 311 647 317M662 313Q658 310 654 308M661 318Q655 315 650 312M658 323Q653 320 648 317M673 283Q680 286 687 286M672 292Q678 292 684 294M675 280Q674 287 672 294M680 282Q679 289 678 294M686 282Q685 289 683 297M616 256Q620 263 626 269M604 262Q611 270 619 280M618 254Q611 261 603 266M623 262Q615 268 609 273M627 269Q621 273 616 278M624 338Q621 345 620 353M616 336Q614 344 613 351M626 343Q619 341 613 339M623 349Q619 349 613 347M642 309Q640 315 637 319M638 304Q634 313 630 319M633 303Q629 309 626 315M643 312Q636 308 629 304M636 318Q631 316 628 313M640 413Q648 415 658 418M639 423Q647 425 653 427M645 412Q642 419 641 427M653 416Q652 421 650 428M650 388Q648 397 644 404M644 384Q642 393 638 404M637 386Q634 391 633 398M649 390Q642 389 637 386M648 396Q641 393 634 391M647 403Q638 401 631 397M639 392Q643 398 648 406M633 398Q637 403 640 409M643 392Q637 397 630 401M645 397Q640 402 634 405M647 403Q642 405 638 409M676 366Q681 373 684 378M673 369Q676 375 680 380M669 372Q671 378 675 383M679 367Q674 370 668 374M681 372Q677 375 672 378M684 375Q678 379 673 382M629 243Q635 246 643 246M623 253Q635 256 643 258M632 243Q631 250 629 256M641 245Q639 252 639 258M670 353Q665 357 658 358M667 350Q663 353 658 355M666 347Q660 349 656 352M665 343Q659 346 653 349M668 354Q666 349 663 344M663 355Q661 351 659 346M660 359Q656 353 654 347M653 275Q645 275 639 277M651 268Q645 268 639 269M650 277Q649 272 649 266M643 279Q642 272 642 265M678 260Q673 265 668 268M672 255Q668 258 664 262M678 261Q676 257 672 254M674 264Q671 260 668 257M671 269Q666 265 663 260M662 327Q668 331 674 336M654 330Q663 337 673 345M650 336Q660 342 668 350M666 325Q659 333 652 342M675 332Q667 340 661 349M630 284Q622 287 615 290M625 277Q619 279 613 281M628 288Q625 280 622 274M619 291Q617 285 614 278M685 335Q685 346 683 358M678 338Q679 347 677 354M670 336Q668 345 668 354M685 341Q676 340 669 340M683 352Q676 352 670 351M712 310Q706 320 702 331M700 305Q696 314 691 325M712 314Q705 310 697 307M712 323Q701 318 691 313M709 330Q697 325 687 320M643 262Q645 269 648 276M636 262Q639 270 642 280M630 265Q632 273 636 281M645 264Q637 267 629 269M649 272Q639 275 632 278M673 301Q672 305 670 310M668 298Q667 303 664 309M676 302Q669 301 664 298M673 306Q669 303 664 303M671 310Q667 308 663 308M606 274Q612 275 619 277M605 280Q610 282 617 283M610 272Q608 278 606 284M616 276Q614 280 614 283M665 361Q670 367 675 373M657 368Q661 374 667 380M667 362Q661 366 657 370M670 366Q665 371 661 374M676 371Q670 375 664 380M658 327Q648 329 637 331M658 316Q645 318 634 320M654 330Q653 323 651 316M643 334Q641 324 640 315M669 359Q675 360 679 361M668 364Q674 365 679 366M667 368Q672 369 679 370M669 358Q668 363 668 369M674 361Q674 364 673 368M679 359Q679 365 677 372M643 355Q635 354 626 356M642 342Q633 343 626 343M641 360Q640 349 640 337M629 357Q628 348 628 341M635 299Q647 299 660 300M637 308Q647 308 657 308M637 315Q646 314 656 316M641 301Q642 308 641 314M654 298Q653 309 653 318M659 254Q660 263 664 270M649 255Q652 265 656 276M643 259Q646 266 649 276M659 254Q650 257 642 260M665 261Q653 265 642 269M665 270Q656 273 647 276M670 404Q667 408 662 415M664 400Q660 405 657 411M670 407Q664 405 661 402M664 413Q661 410 658 408M681 326Q686 327 691 329M678 333Q684 334 691 336M684 322Q681 329 680 337M689 328Q687 331 687 336M705 374Q697 375 691 376M704 368Q697 369 690 370M706 362Q695 364 687 364M706 356Q695 357 685 358M705 377Q705 365 703 354M697 376Q696 367 695 357M690 378Q688 367 687 356M652 290Q645 298 637 305M648 285Q639 292 632 300M642 281Q636 288 628 294M651 294Q645 288 639 282M643 297Q639 294 636 289M642 304Q634 297 629 290M696 275Q698 281 699 284M692 275Q695 282 697 287M689 277Q692 283 693 288M685 278Q687 285 689 289M694 275Q691 276 686 278M698 280Q693 282 686 285M699 284Q695 286 689 288M706 321Q701 327 697 330M703 313Q695 321 689 326M707 324Q702 320 698 314M702 333Q694 326 688 320M675 300Q683 304 692 308M674 307Q681 309 687 313M671 314Q677 316 684 320M678 299Q675 307 670 315M685 303Q681 310 677 318M690 308Q686 314 684 319M647 256Q647 261 648 265M642 256Q643 261 644 266M637 256Q637 262 639 268M646 256Q642 257 639 257M649 260Q643 260 637 262M647 265Q643 265 640 266M652 311Q651 318 653 323M643 308Q643 317 643 326M656 312Q647 312 640 312M654 321Q647 320 642 321M709 295Q699 298 690 303M703 291Q698 294 691 296M704 285Q695 289 686 292M701 279Q691 284 684 286M707 297Q703 287 699 279M700 301Q695 290 691 281M693 303Q689 294 685 285M643 301Q650 307 656 312M640 309Q644 313 648 317M647 302Q643 307 640 311M650 307Q647 310 644 313M656 308Q650 313 646 319M662 295Q655 296 650 299M661 287Q654 289 646 291M661 297Q659 291 658 286M653 300Q652 294 649 289M691 312Q684 313 676 312M688 306Q684 307 678 306M688 301Q682 300 678 301M688 311Q688 306 687 301M680 313Q679 306 679 300M686 314Q683 320 681 325M681 311Q678 318 676 324M675 310Q674 315 671 320M687 316Q681 314 674 311M683 324Q677 322 671 319M673 281Q667 282 662 281M675 271Q667 272 659 272M673 282Q673 276 673 271M667 282Q667 276 667 271M662 283Q662 277 661 271M607 363Q616 367 626 371M602 374Q613 378 623 382M612 364Q610 372 607 378M622 368Q619 375 617 381M695 274Q701 281 704 290M690 276Q694 285 699 294M686 281Q691 288 693 294M680 282Q685 289 689 298M696 276Q688 279 680 284M701 281Q691 286 683 291M702 290Q695 293 689 296M613 325Q619 329 628 331M609 330Q618 333 626 338M608 338Q614 341 621 343M615 322Q612 332 607 341M620 329Q617 334 615 340M627 331Q623 337 621 344M697 276Q694 279 689 283M695 272Q691 276 686 280M693 269Q687 274 683 278M696 277Q694 273 691 271M692 279Q691 276 688 274M690 282Q688 279 684 276M665 236Q664 243 666 249M660 236Q659 242 661 249M656 237Q657 243 656 248M667 238Q660 238 654 238M665 243Q661 242 656 243M665 247Q660 248 657 248M681 282Q682 286 681 293M672 279Q672 287 672 296M683 282Q676 281 670 282M684 287Q676 288 669 288M682 293Q676 293 671 293M682 347Q674 349 669 351M680 343Q674 344 668 347M680 337Q673 341 665 343M679 333Q670 336 662 339M681 348Q678 342 676 334M671 350Q670 345 667 338M632 255Q625 263 619 270M628 251Q621 259 614 267M623 249Q617 256 611 263M618 246Q613 252 607 259M627 258Q621 254 618 250M622 267Q616 262 609 257M628 317Q632 323 635 327M624 322Q625 326 628 329M631 319Q627 322 623 323M635 324Q631 327 625 330M657 275Q651 281 645 289M651 275Q647 279 644 283M650 269Q644 276 638 283M647 267Q640 274 635 280M655 278Q649 274 643 268M649 281Q646 277 642 275M649 288Q641 282 635 276M698 313Q701 318 705 323M694 314Q697 320 702 326M689 317Q693 322 697 329M699 314Q695 317 692 319M704 321Q700 324 695 327M694 392Q697 402 699 413M687 396Q690 404 691 412M678 396Q681 405 683 416M696 396Q688 398 679 400M701 407Q690 409 680 412M637 277Q629 282 620 287M630 273Q626 277 620 280M629 267Q621 271 614 276M632 279Q629 275 626 270M625 286Q621 280 617 273M649 382Q655 390 660 399M639 390Q645 399 650 405M653 381Q644 387 636 393M660 386Q648 394 639 401M660 397Q654 402 648 405M636 262Q630 271 627 281M630 261Q626 270 623 278M625 257Q621 266 617 277M619 259Q616 264 614 271M635 266Q626 261 618 258M632 272Q623 269 615 265M628 278Q620 275 614 272M628 255Q635 258 641 262M625 264Q630 268 635 270M632 253Q628 260 624 267M636 257Q632 262 629 269M641 258Q637 265 633 272M673 253Q666 261 660 270M666 248Q661 257 654 265M658 246Q653 252 649 258M671 255Q664 250 659 245M667 262Q659 257 652 251M662 268Q654 262 648 258M713 349Q706 359 701 367M707 345Q701 353 695 363M701 342Q696 350 690 358M712 355Q703 349 696 344M705 363Q698 359 690 352M633 387Q642 393 654 398M633 393Q641 398 649 401M632 400Q638 402 645 406M629 405Q636 408 643 412M637 387Q633 397 628 405M644 392Q640 399 636 408M652 394Q647 404 642 413M604 332Q598 332 591 335M604 321Q595 324 586 326M605 334Q602 328 601 320M598 337Q597 328 594 321M593 336Q590 330 589 324M633 243Q633 249 632 255M629 242Q629 248 628 255M626 242Q626 248 625 255M621 240Q621 249 620 256M632 243Q627 243 623 243M631 249Q626 249 622 249M633 254Q626 254 620 253M634 396Q637 403 642 410M627 400Q632 406 636 415M640 397Q633 402 626 406M640 406Q638 408 633 411M673 295Q670 305 667 318M665 297Q662 303 661 312M657 292Q654 303 652 313M674 298Q664 295 655 294M673 308Q663 306 652 302M668 314Q660 313 653 311M642 378Q643 387 643 398M634 379Q635 388 635 399M626 378Q627 389 628 401M642 381Q634 382 627 382M644 388Q634 389 626 390M645 396Q636 397 626 397M693 293Q698 294 704 295M692 299Q697 301 703 301M695 291Q694 295 693 301M703 291Q701 298 700 304M677 325Q671 326 667 327M676 321Q671 323 666 324M675 318Q670 319 665 321M676 315Q671 317 663 318M675 324Q674 321 673 316M669 328Q669 322 666 317M721 310Q714 321 709 332M709 306Q704 317 699 326M717 316Q711 312 707 310M712 326Q707 324 701 321M624 384Q627 392 629 402M616 386Q619 395 621 405M608 389Q611 398 613 407M627 386Q616 389 605 392M629 399Q621 402 611 404M713 370Q710 375 706 380M708 366Q704 370 700 377M713 373Q708 371 705 368M710 380Q703 376 699 373M617 373Q611 378 604 381M610 362Q604 366 597 371M617 372Q614 367 610 362M612 380Q607 373 601 363M606 385Q601 375 594 367M687 273Q691 277 693 282M679 276Q683 282 686 288M689 271Q683 276 677 279M693 275Q686 280 679 283M695 281Q688 283 683 288M623 251Q634 252 643 254M623 256Q632 257 641 259M620 261Q632 264 642 265M623 267Q630 267 638 270M627 251Q626 261 625 268M639 253Q637 262 636 270M618 353Q622 354 626 357M617 357Q620 358 625 360M615 361Q619 362 623 365M620 353Q618 357 616 363M625 355Q623 360 621 366M614 325Q613 331 611 337M609 326Q607 331 607 334M605 322Q602 330 602 336M613 327Q608 327 604 326M614 335Q607 335 601 333M634 340Q629 346 626 353M629 338Q626 344 622 350M624 335Q620 341 617 347M632 341Q627 338 624 336M632 347Q626 343 619 340M628 351Q623 347 618 345M610 338Q609 343 607 348M606 337Q605 343 603 347M602 337Q601 342 599 345M612 341Q605 339 600 337M607 346Q604 346 600 344M653 323Q651 328 645 332M649 321Q647 324 643 328M646 317Q642 320 639 325M653 324Q649 320 646 318M649 327Q646 324 644 322M647 331Q644 327 640 324M662 408Q667 412 671 418M659 412Q662 416 666 421M653 413Q658 420 664 427M665 408Q659 413 654 417M666 414Q663 416 659 419M669 418Q666 421 663 424M680 294Q674 297 668 298M679 289Q674 290 667 292M679 283Q672 285 663 287M679 297Q677 290 675 281M671 299Q669 291 667 283M607 326Q612 326 617 327M606 332Q612 333 616 333M608 323Q608 330 606 334M612 326Q613 329 611 333M617 326Q616 330 615 334M644 312Q655 318 663 321M645 320Q651 322 657 325M640 322Q650 326 658 331M636 327Q647 332 657 337M646 314Q643 322 640 328M653 318Q651 323 647 331M659 322Q657 328 654 333M697 276Q701 278 708 278M697 283Q701 283 706 284M699 273Q697 279 697 285M702 275Q701 279 701 284M707 275Q705 280 706 286M647 354Q640 359 634 363M643 342Q632 347 624 355M647 355Q642 350 638 343M643 362Q638 353 631 344M634 363Q631 358 627 353M686 326Q690 328 695 329M684 329Q690 332 695 333M682 332Q689 334 694 337M681 336Q688 339 693 341M687 326Q684 332 683 337M694 331Q692 334 691 338M674 380Q675 388 675 397M666 380Q667 388 668 398M659 379Q661 389 661 400M675 382Q666 384 658 384M675 394Q668 395 661 395M625 306Q619 311 611 317M621 302Q614 308 608 313M616 299Q611 302 606 307M617 292Q608 299 600 306M620 307Q616 302 613 298M613 314Q608 308 605 303M633 300Q640 302 649 306M629 310Q637 313 647 316M637 297Q635 307 631 315M648 300Q644 311 642 320M639 350Q649 357 657 362M635 356Q644 362 653 368M632 362Q641 368 649 373M645 352Q640 359 635 367M653 357Q648 364 643 372M645 406Q639 412 631 417M641 402Q635 408 628 412M637 398Q631 403 625 408M634 393Q629 398 621 403M642 407Q636 401 632 395M634 417Q627 409 621 400M677 323Q674 330 671 335M670 317Q666 324 662 331M679 326Q671 322 666 319M676 335Q669 331 660 326M612 381Q619 391 626 398M608 385Q616 393 622 402M605 390Q609 398 616 404M600 394Q606 402 612 408M615 385Q609 391 602 395M622 395Q616 400 611 404M749 367Q739 370 730 373M748 357Q737 360 725 364M742 350Q735 353 727 355M747 371Q744 359 740 347M734 373Q731 364 728 353M757 316Q766 316 773 316M758 322Q765 322 772 323M755 327Q765 326 774 327M756 333Q766 333 773 334M759 318Q759 325 759 331M771 315Q771 326 771 335M732 333Q728 338 723 342M729 329Q723 333 718 340M725 325Q720 331 715 336M730 335Q726 332 722 327M725 340Q720 336 717 332M734 335Q725 338 715 341M732 330Q724 332 714 336M732 323Q720 326 710 330M730 317Q720 320 709 324M730 335Q729 327 726 320M719 342Q715 331 713 320M746 335Q749 339 753 346M744 338Q746 341 749 346M740 339Q744 344 746 349M737 341Q739 346 743 350M746 336Q743 339 738 341M750 340Q745 343 739 346M751 344Q748 347 742 350M765 310Q757 316 750 323M761 303Q752 312 744 318M755 296Q747 305 737 312M763 310Q759 305 754 300M758 318Q752 310 745 303M752 322Q746 315 740 308M771 344Q767 345 761 348M769 339Q763 342 759 343M769 335Q762 337 756 340M766 332Q761 333 757 336M772 345Q769 337 765 330M766 344Q764 340 761 335M762 348Q759 341 756 335M749 348Q757 349 764 350M744 352Q757 354 768 356M743 359Q754 362 767 362M744 365Q754 366 765 368M749 345Q748 357 745 368M757 345Q754 357 753 370M766 349Q764 358 763 369M747 324Q747 328 747 332M742 323Q742 328 743 334M739 324Q738 329 739 333M747 323Q743 324 738 324M747 329Q743 330 739 329M747 333Q744 332 739 333M748 330Q753 333 757 334M747 334Q750 336 754 337M745 336Q749 337 754 340M743 339Q748 342 754 344M749 331Q747 336 745 340M755 333Q754 338 751 343M736 325Q742 328 746 333M733 329Q738 332 744 337M730 333Q735 337 741 341M739 326Q736 331 732 336M745 330Q740 334 737 340M734 355Q740 355 744 357M732 358Q739 359 744 361M733 361Q737 363 741 364M731 364Q737 365 742 367M735 354Q733 359 732 364M739 357Q738 360 737 365M745 356Q743 363 741 368M712 326Q722 329 733 331M714 336Q722 338 728 339M708 342Q720 345 731 347M714 329Q713 334 712 341M722 329Q721 336 719 344M730 330Q728 338 727 347M730 346Q729 351 729 357M726 347Q725 352 726 356M722 346Q722 352 721 358M732 348Q726 348 720 348M731 355Q725 355 720 355M748 302Q754 310 759 318M739 309Q745 316 750 324M752 305Q746 308 740 313M758 314Q753 317 747 322M761 338Q767 347 774 354M755 346Q760 352 766 359M765 342Q760 345 757 349M771 349Q768 352 763 356M718 328Q725 333 731 337M717 334Q721 338 727 341M711 338Q718 343 725 347M722 329Q717 335 714 341M729 336Q726 339 723 345M722 345Q733 346 745 348M723 354Q733 354 742 356M724 361Q731 362 740 362M728 343Q727 353 726 365M740 347Q739 354 738 363M771 346Q770 354 767 362M764 345Q762 351 760 360M757 342Q754 351 753 359M772 349Q764 346 754 344M771 360Q761 357 750 355M772 314Q775 322 776 330M768 318Q770 324 771 328M764 317Q764 324 767 331M760 318Q762 325 764 332M773 318Q768 319 760 321M773 326Q768 328 764 329M605 509Q593 515 582 519M602 501Q590 507 579 511M596 494Q588 497 577 503M603 514Q599 503 593 492M594 515Q590 507 586 498M587 518Q583 509 579 502M604 437Q596 443 587 449M599 434Q593 438 585 443M597 428Q589 433 581 439M594 424Q587 429 578 435M600 441Q595 433 590 426M592 447Q586 439 581 431M608 489Q615 493 622 496M604 492Q613 496 621 501M604 497Q610 501 617 504M599 500Q609 505 617 510M612 488Q607 497 603 505M619 495Q617 502 613 507M598 438Q592 444 584 448M592 434Q587 437 582 441M590 430Q583 433 579 437M597 440Q592 434 588 428M591 443Q586 439 584 433M587 448Q582 441 577 435M622 446Q614 448 607 447M623 440Q613 442 605 442M624 434Q614 434 603 436M619 430Q613 430 606 431M620 444Q620 438 619 431M610 449Q608 438 608 428M586 487Q593 489 602 492M583 492Q593 494 602 498M583 498Q592 500 599 502M579 502Q588 505 599 509M587 485Q585 495 581 505M593 492Q592 498 590 503M602 490Q599 499 595 510M612 489Q602 491 595 493M610 484Q602 486 594 488M610 479Q602 481 591 484M606 474Q599 476 593 477M610 489Q607 483 606 475M603 492Q601 483 599 475M596 492Q595 486 593 478M624 476Q621 480 617 482M619 470Q615 474 612 477M625 479Q619 475 616 469M620 482Q616 477 612 474M602 487Q596 490 591 492M599 484Q596 485 591 488M600 481Q593 484 588 487M598 478Q591 479 587 483M600 489Q597 485 595 478M593 490Q591 487 590 483M570 434Q580 434 589 437M570 439Q578 440 587 441M570 444Q579 444 586 446M569 448Q578 449 586 450M573 436Q572 442 571 447M579 437Q579 443 577 448M586 436Q584 442 584 450M613 437Q618 444 627 449M606 444Q614 451 621 457M618 436Q611 444 605 450M622 440Q616 447 610 453M624 447Q621 451 617 455M624 430Q621 443 618 456M615 431Q612 440 611 451M607 431Q606 439 603 448M624 437Q615 436 605 433M621 450Q611 448 603 446M579 491Q589 494 597 494M576 498Q588 499 598 501M579 506Q587 507 593 508M582 489Q580 499 579 509M588 494Q587 499 586 505M595 490Q593 500 592 511M601 424Q598 432 596 439M594 423Q592 428 590 435M602 429Q596 428 591 425M601 436Q595 434 588 431M605 471Q601 473 597 475M603 464Q597 467 593 469M605 473Q603 469 600 463M599 475Q596 471 594 468M622 486Q626 491 629 497M616 488Q621 494 625 502M609 491Q614 498 620 507M624 487Q618 491 611 495M628 496Q623 500 618 502M589 461Q583 470 576 479M582 456Q577 464 569 475M574 453Q569 460 564 467M589 465Q581 459 572 452M586 473Q576 465 565 458M581 479Q570 473 561 465M639 491Q631 493 624 493M637 486Q631 487 624 488M640 481Q630 483 620 484M637 475Q629 476 621 478M637 493Q636 483 634 475M626 492Q624 486 624 479M627 462Q621 462 612 462M627 454Q619 454 612 455M629 447Q620 446 610 447M625 463Q624 455 624 447M614 462Q613 456 614 448M603 460Q603 469 604 477M592 459Q593 470 593 480M607 461Q598 462 589 462M608 469Q599 469 588 470M608 475Q598 476 589 476M607 478Q613 486 616 494M603 481Q608 488 611 496M599 484Q603 490 607 498M593 486Q598 493 602 501M607 480Q601 482 595 486M612 486Q605 489 598 494M614 492Q608 495 602 499M609 442Q606 451 605 460M604 440Q603 450 600 460M597 441Q596 448 594 456M592 439Q591 448 589 456M607 445Q600 444 594 443M605 456Q599 454 591 453M590 465Q593 475 597 483M581 467Q587 477 590 487M574 471Q578 479 582 489M591 467Q583 471 574 475M598 478Q589 482 578 487M579 498Q587 501 596 506M573 509Q581 513 590 518M583 497Q579 504 575 512M595 503Q591 510 587 519M621 470Q621 478 622 485M608 470Q609 480 610 488M626 469Q615 471 603 471M623 477Q615 478 607 479M622 485Q616 485 610 486M607 489Q615 489 622 489M607 496Q614 496 622 497M604 504Q615 504 625 504M607 489Q607 497 607 503M614 486Q614 495 614 506M623 486Q623 497 622 507M627 440Q627 452 626 463M622 443Q622 452 621 459M615 442Q615 450 614 459M609 440Q609 451 608 460M631 445Q619 444 606 444M626 458Q618 457 609 457M625 451Q623 455 619 460M621 445Q618 452 612 459M615 443Q612 450 608 454M624 452Q619 448 614 445M621 460Q614 457 608 451M627 470Q624 476 620 484M620 468Q617 474 614 480M629 474Q623 471 616 468M624 477Q621 475 617 473M625 484Q617 481 611 477M570 467Q581 470 592 473M568 476Q579 477 589 481M569 483Q577 486 585 487M574 466Q571 475 569 486M580 472Q578 478 577 483M588 473Q586 479 585 486M616 453Q612 458 609 464M609 451Q608 455 604 459M617 455Q612 452 608 450M616 460Q611 457 604 453M612 464Q607 461 603 458M608 463Q602 465 597 469M607 457Q599 461 593 465M603 453Q598 455 591 460M607 462Q605 458 602 454M603 465Q600 460 598 456M598 470Q595 463 591 457M602 430Q604 442 605 454M590 435Q591 444 592 453M605 434Q597 435 587 436M608 441Q598 444 586 444M610 450Q599 452 586 453M615 517Q608 518 600 519M614 510Q608 512 600 512M616 503Q606 504 596 506M615 521Q613 510 612 500M607 518Q606 512 605 506M601 519Q600 513 599 506M619 458Q614 462 611 466M614 454Q610 456 608 460M619 459Q616 456 614 453M617 464Q612 459 608 455M612 466Q610 463 607 460M593 497Q601 501 609 505M589 506Q595 509 603 514M597 492Q591 501 587 511M603 497Q599 505 595 514M608 502Q606 508 602 515M668 532Q660 537 652 541M664 528Q656 532 651 536M660 523Q654 525 649 529M665 533Q663 529 660 525M661 539Q657 532 653 525M656 541Q653 536 649 529M674 558Q669 568 663 579M663 554Q658 564 654 573M674 562Q667 559 659 555M673 570Q664 566 653 561M669 578Q660 573 650 568M670 513Q667 520 663 528M666 510Q663 518 658 526M661 508Q656 515 654 523M668 516Q664 515 659 512M668 525Q661 522 653 518M656 581Q648 583 642 584M656 570Q647 571 638 573M657 583Q656 575 654 568M649 584Q648 577 647 571M643 588Q641 578 639 569M689 564Q683 570 675 574M684 557Q677 561 670 566M688 567Q685 562 681 557M684 571Q679 565 675 559M680 575Q675 568 670 561M649 569Q640 574 632 581M643 565Q637 570 631 575M641 562Q634 567 628 571M638 557Q630 562 624 568M644 570Q640 565 637 560M638 573Q636 569 632 565M636 580Q630 573 625 565M644 567Q638 575 633 581M636 563Q633 568 628 573M643 573Q639 569 632 564M637 579Q632 575 628 571M681 546Q675 548 671 549M681 542Q675 545 669 546M681 539Q674 542 667 543M679 535Q672 536 666 539M680 546Q678 542 677 537M673 550Q671 544 669 538M665 539Q656 548 646 556M659 536Q651 543 644 549M656 530Q648 536 638 545M653 524Q642 534 633 542M661 540Q655 534 650 528M653 545Q648 539 644 535M649 554Q642 545 635 537M644 559Q649 563 652 568M640 559Q644 567 651 573M638 565Q641 569 645 573M635 566Q638 572 642 576M645 561Q642 564 637 568M652 566Q646 570 640 576M645 540Q644 549 642 556M635 535Q632 546 630 556M649 541Q639 539 630 538M647 549Q638 548 629 545M642 555Q637 554 631 553M669 544Q671 549 671 554M663 543Q663 549 665 556M670 545Q668 545 664 547M672 552Q668 552 664 553M641 519Q636 524 634 531M633 512Q630 519 625 527M643 522Q635 518 628 514M639 532Q631 527 622 522M626 539Q620 543 612 548M623 533Q615 538 608 543M619 529Q612 533 606 537M623 542Q620 536 615 529M615 546Q612 540 608 535M670 518Q670 525 669 529M665 515Q664 523 663 530M661 515Q660 523 659 530M672 520Q665 518 658 518M671 528Q664 528 657 526M676 548Q667 549 658 551M677 542Q666 543 655 545M678 535Q665 538 653 539M675 530Q664 530 653 533M676 548Q674 539 673 530M668 552Q666 540 664 528M659 551Q658 541 656 532M651 562Q655 567 659 574M647 565Q650 572 655 576M644 569Q648 574 650 578M653 564Q650 567 644 570M657 571Q652 573 650 576M678 561Q674 562 668 564M678 556Q672 558 666 560M676 553Q670 555 665 556M677 563Q674 558 673 552M670 565Q668 560 667 553M650 564Q644 571 640 577M646 560Q640 566 635 574M639 558Q635 563 632 568M649 568Q643 563 636 559M644 574Q637 570 632 566M664 590Q659 594 653 597M663 584Q655 589 648 593M658 580Q654 585 647 588M659 573Q649 578 640 585M662 590Q658 584 654 577M655 598Q649 589 644 580M684 527Q681 532 677 535M679 523Q675 527 673 531M676 519Q673 525 668 529M683 527Q679 523 676 521M682 532Q676 527 671 523M679 537Q673 531 667 527M654 528Q649 532 642 536M651 523Q644 528 638 532M648 518Q641 523 634 527M652 531Q648 524 644 519M644 535Q640 530 638 525M657 546Q654 550 651 554M653 543Q650 546 647 551M658 549Q654 545 650 542M654 553Q650 552 647 548M640 553Q631 555 619 556M639 548Q630 549 619 551M639 542Q627 543 617 545M636 536Q628 537 619 539M636 554Q634 546 633 537M624 553Q622 548 622 541M668 517Q669 523 671 528M664 517Q665 523 667 529M659 517Q660 525 662 532M670 518Q665 520 658 521M670 526Q665 527 662 528M646 543Q653 546 660 552M643 549Q649 553 655 557M641 554Q646 558 651 561M649 545Q646 550 642 556M657 548Q653 554 648 562M643 579Q646 582 650 585M638 582Q643 587 649 590M635 587Q642 589 646 594M642 580Q639 583 636 588M647 580Q643 585 639 592M651 584Q646 590 644 595M648 529Q640 533 632 537M641 521Q635 525 629 528M645 532Q641 527 639 521M637 539Q633 531 629 523M638 540Q636 549 637 561M626 541Q627 550 625 558M641 545Q631 545 622 544M639 556Q631 555 623 555M630 554Q625 563 620 574M624 552Q619 561 615 570M619 548Q614 558 608 568M611 547Q608 556 604 562M629 559Q619 554 609 548M622 569Q614 565 605 560M689 554Q683 556 676 557M688 546Q681 547 673 549M688 556Q687 551 686 545M682 558Q681 551 680 546M677 558Q675 553 675 547M678 538Q672 543 666 548M677 533Q669 539 661 546M673 530Q667 534 660 541M668 526Q662 531 657 535M679 539Q673 532 668 525M673 543Q668 537 663 531M665 546Q663 541 658 537M688 555Q689 563 691 572M681 555Q684 565 684 575M675 559Q677 566 677 573M688 557Q682 558 675 559M692 563Q682 564 674 566M691 570Q684 571 677 572M664 575Q663 582 663 589M657 573Q656 581 656 591M649 573Q648 580 648 590M662 575Q657 574 651 574M665 582Q657 581 648 581M667 590Q657 590 645 589M693 533Q693 539 691 546M684 532Q684 539 682 545M696 536Q688 536 680 534M694 544Q687 542 680 542M694 543Q689 547 684 551M690 540Q686 542 682 546M688 535Q682 538 678 542M693 545Q690 540 686 535M690 549Q686 543 681 537M684 550Q681 545 679 542M728 480Q738 484 745 487M725 487Q734 491 743 493M724 495Q731 499 739 500M729 481Q728 487 724 494M737 483Q734 491 731 498M744 486Q741 493 739 500M750 520Q754 521 760 524M749 524Q754 527 758 528M747 527Q752 529 758 531M744 531Q751 533 758 536M750 521Q749 526 746 532M755 522Q753 528 751 534M760 523Q759 529 756 535M752 539Q745 543 739 547M748 533Q742 536 735 542M745 526Q737 531 730 536M751 539Q748 533 743 527M746 544Q740 536 737 530M741 549Q736 541 731 533M731 435Q728 444 723 450M725 429Q720 438 715 450M718 426Q714 435 708 446M730 436Q723 431 716 429M727 444Q719 439 712 436M726 451Q717 447 707 441M771 494Q777 495 784 496M771 498Q777 500 782 500M771 502Q777 503 781 504M769 506Q776 506 781 508M772 492Q771 501 769 508M778 495Q776 501 775 507M783 498Q782 503 781 507M751 536Q744 537 735 536M750 528Q743 528 736 528M747 536Q746 532 747 528M739 538Q739 532 739 526M789 518Q778 520 767 523M785 507Q774 509 766 511M784 523Q782 514 780 504M772 523Q770 516 769 508M782 473Q772 482 764 489M777 469Q770 476 761 484M771 467Q766 472 759 477M768 462Q762 468 755 474M780 477Q773 470 766 461M774 482Q767 476 760 467M767 486Q761 480 755 473M736 460Q727 467 718 472M729 454Q722 458 715 465M725 447Q717 452 710 458M735 464Q728 455 722 446M728 468Q722 459 716 452M721 472Q717 464 710 457M737 526Q736 532 733 537M732 524Q730 529 728 535M729 521Q726 528 724 535M725 521Q724 526 721 532M736 526Q731 524 726 521M734 531Q730 529 723 527M732 536Q726 534 721 532M735 492Q741 493 747 496M731 500Q739 502 745 505M736 489Q734 496 731 503M742 491Q739 499 737 506M748 494Q746 500 744 507M739 416Q743 425 745 432M730 418Q734 427 736 436M742 417Q734 418 728 421M742 424Q737 425 732 427M746 429Q739 431 732 434M734 472Q726 474 719 475M731 467Q726 468 720 469M733 460Q725 462 716 464M731 473Q729 467 728 461M723 474Q721 468 721 463M786 460Q785 469 783 479M781 461Q780 467 778 476M775 460Q774 468 772 475M770 459Q768 466 767 474M788 464Q777 462 767 460M785 476Q776 474 766 472M746 423Q745 431 742 441M739 419Q736 430 733 441M730 417Q728 429 725 438M746 426Q738 424 728 422M742 438Q733 436 726 434M775 481Q779 486 785 491M772 482Q777 488 783 494M770 486Q774 491 778 496M765 488Q772 494 776 500M776 482Q771 486 768 490M779 488Q776 490 773 493M783 491Q779 494 775 497M718 473Q724 473 731 473M719 479Q725 480 730 480M721 472Q722 477 721 480M728 470Q728 476 728 482M717 450Q713 453 711 456M715 445Q711 449 705 453M718 452Q716 448 712 445M713 457Q710 453 706 449M766 437Q765 444 762 452M758 436Q758 444 755 450M752 434Q751 442 748 449M769 439Q759 436 748 435M764 451Q755 449 748 447M767 442Q770 450 771 459M760 444Q763 453 764 461M753 444Q755 453 758 463M769 445Q762 448 753 448M773 455Q764 457 753 460M785 461Q780 462 773 462M784 457Q779 457 774 458M786 454Q778 455 772 454M785 450Q779 451 772 451M782 460Q782 455 782 451M775 461Q775 455 775 451M747 541Q738 544 729 547M744 534Q736 537 728 541M742 528Q734 530 725 534M744 543Q741 536 739 529M733 545Q731 539 729 534M763 489Q762 493 763 498M756 490Q756 495 756 498M765 489Q759 490 754 489M763 494Q760 493 756 494M763 498Q759 499 756 498M756 455Q766 457 772 457M755 461Q763 461 772 464M755 467Q763 469 770 469M758 455Q758 460 756 466M764 456Q763 462 762 467M771 456Q769 464 768 470M769 525Q767 532 764 537M759 521Q756 528 754 534M768 527Q762 524 757 523M765 537Q760 534 753 532M708 462Q717 466 725 470M703 474Q710 479 719 482M710 460Q705 469 702 477M717 467Q715 473 712 478M724 469Q722 475 718 482M770 473Q771 480 770 488M762 472Q763 480 762 488M773 476Q766 476 759 476M774 484Q767 483 758 484M732 453Q726 456 720 459M728 449Q724 451 719 454M728 444Q722 447 715 451M729 454Q727 450 725 446M723 459Q720 454 717 448M734 513Q739 520 745 527M723 520Q729 529 736 536M737 511Q729 517 721 524M743 517Q733 524 725 531M750 523Q740 532 730 539M732 467Q734 475 736 485M727 470Q728 478 731 485M723 471Q724 478 727 486M719 475Q720 479 722 485M731 471Q726 472 721 474M736 476Q728 478 719 480M736 481Q729 484 721 485M727 487Q733 492 737 497M720 490Q727 497 733 504M716 497Q722 503 726 507M728 486Q723 492 716 498M733 491Q726 496 721 502M738 496Q733 503 726 508M698 501Q709 503 720 506M694 509Q707 511 720 515M694 518Q704 522 716 523M702 501Q700 511 698 519M716 504Q714 513 711 523M762 494Q765 493 770 495M760 499Q766 499 770 501M763 493Q762 496 761 500M766 493Q765 497 764 501M771 494Q771 498 769 502M752 528Q748 532 745 535M749 524Q745 529 741 532M745 523Q741 525 739 529M753 529Q748 526 744 521M749 532Q745 529 742 525M746 535Q743 532 739 529M794 471Q797 477 797 485M786 472Q788 479 790 488M778 474Q779 481 781 490M794 473Q785 474 779 476M799 484Q790 486 779 488M731 445Q723 448 716 453M727 440Q721 443 714 446M723 433Q718 436 711 440M728 446Q724 440 722 435M719 452Q715 446 712 439M723 432Q723 438 722 447M717 431Q717 438 716 447M712 430Q712 439 711 448M725 433Q717 433 709 433M724 439Q716 438 709 438M721 445Q717 445 712 445M787 483Q784 490 779 494M784 483Q782 488 777 491M781 480Q777 485 774 489M778 479Q774 482 772 486M785 486Q781 482 778 480M781 491Q776 488 773 485M791 505Q780 508 770 509M789 498Q780 499 770 502M788 490Q777 492 768 493M787 508Q786 499 784 490M775 511Q774 500 771 490M735 507Q740 509 743 510M731 510Q738 513 745 514M732 513Q738 515 743 516M730 516Q737 519 743 520M735 508Q734 513 733 517M743 508Q740 515 739 521M769 495Q761 494 751 495M768 489Q760 489 751 489M769 483Q759 483 750 483M769 476Q759 476 750 476M766 497Q766 486 766 474M753 495Q753 485 753 476M747 460Q751 470 754 479M735 465Q737 474 741 483M750 462Q742 465 733 468M756 474Q746 477 736 481M696 468Q702 472 708 476M692 475Q699 479 704 482M699 470Q696 474 695 476M707 471Q704 477 699 483M721 464Q713 464 704 464M724 455Q713 454 701 455M724 447Q713 447 701 447M721 464Q721 455 721 447M712 464Q712 456 712 447M704 466Q704 455 704 445M771 524Q763 527 756 529M771 517Q762 519 752 523M766 510Q759 512 752 514M771 525Q769 517 766 510M764 528Q761 520 758 511M756 528Q755 521 752 515M747 487Q742 493 735 498M741 481Q736 488 729 492M746 491Q742 487 736 481M740 498Q736 492 729 487M725 441Q730 451 738 459M715 448Q721 458 729 467M731 443Q724 449 715 455M738 453Q731 458 723 464M752 511Q755 515 760 518M748 517Q752 519 755 523M754 511Q750 515 747 518M758 513Q754 518 749 522M761 517Q756 520 753 525M685 208Q684 220 681 232M673 207Q672 217 669 228M685 214Q677 214 670 212M685 226Q676 225 666 223M653 217Q653 222 652 229M644 216Q643 223 643 229M657 217Q649 218 640 217M656 223Q648 224 641 222M653 229Q648 228 643 228M643 212Q641 218 642 226M637 214Q636 219 636 223M645 214Q640 215 634 213M644 219Q639 220 635 219M645 223Q638 224 633 223M627 200Q629 208 632 216M621 203Q624 211 625 217M613 204Q615 211 618 220M631 202Q621 204 611 207M632 213Q624 215 616 217M655 232Q646 235 639 237M651 228Q645 229 639 232M650 222Q643 224 637 227M652 232Q650 227 649 222M647 234Q645 230 643 225M643 237Q641 232 638 225M672 223Q667 231 664 236M667 222Q665 226 661 233M662 221Q658 226 657 229M671 225Q666 223 662 220M670 231Q663 227 658 224M667 234Q662 231 656 228M663 210Q657 210 650 212M660 204Q656 205 651 205M660 213Q660 207 658 202M653 213Q653 208 652 205M671 215Q661 215 649 215M666 208Q661 208 653 208M670 201Q660 201 649 201M665 213Q665 208 665 202M655 214Q654 208 655 202M677 197Q685 201 695 202M674 203Q685 206 694 208M673 209Q683 212 692 214M669 215Q680 219 693 221M678 198Q676 207 673 216M685 202Q684 209 681 216M694 203Q692 212 690 219M677 220Q672 225 666 230M672 215Q667 221 662 224M676 224Q672 219 668 215M670 229Q666 224 663 221M647 220Q637 221 630 223M647 214Q637 216 627 217M644 208Q637 209 628 211M643 222Q642 214 641 208M634 223Q632 217 631 210M656 209Q651 210 645 212M655 206Q650 207 645 209M655 203Q650 204 644 206M654 201Q648 203 643 203M654 211Q652 206 651 201M647 211Q647 207 645 203M689 218Q683 227 678 236M679 216Q676 222 671 229M688 223Q682 220 677 216M684 228Q678 225 675 223M682 233Q676 231 671 227M674 210Q667 212 662 212M673 200Q666 201 659 203M673 213Q673 206 670 198M664 216Q662 207 661 199M533 175Q537 180 542 184M527 182Q530 185 536 190M538 174Q531 180 526 186M544 179Q538 185 532 192M524 135Q518 147 514 158M514 136Q512 144 508 151M507 129Q503 139 498 150M525 140Q514 136 503 130M519 147Q510 143 503 140M514 153Q507 151 501 148M570 132Q564 136 555 140M568 129Q562 133 554 136M564 126Q560 129 554 131M563 121Q558 123 550 128M567 135Q563 128 560 122M559 139Q555 132 553 126M551 126Q550 134 551 140M546 126Q546 134 546 140M541 126Q541 132 541 140M551 130Q546 129 541 130M550 137Q546 137 541 137M520 160Q515 162 509 163M520 156Q513 157 507 160M519 153Q513 156 506 157M518 148Q511 151 504 153M519 162Q517 155 515 148M511 163Q510 157 507 152M513 149Q517 152 522 156M508 151Q515 156 520 161M505 155Q512 159 517 165M515 150Q512 154 507 159M519 156Q517 158 514 162M571 135Q565 136 560 139M569 131Q564 132 558 136M569 127Q561 130 556 132M568 123Q560 127 553 129M569 134Q566 129 565 125M561 138Q560 132 557 127M529 161Q536 162 540 164M529 165Q534 166 539 167M528 168Q534 169 538 170M528 170Q532 170 537 173M531 161Q531 167 529 171M535 163Q534 167 533 172M539 165Q539 167 537 172M563 128Q558 137 551 147M559 124Q551 134 546 144M554 121Q547 131 541 141M546 120Q542 128 537 135M558 131Q554 128 547 124M556 143Q547 138 538 132M567 130Q573 140 577 151M564 134Q567 144 571 151M557 137Q562 146 565 154M553 139Q558 148 560 156M572 135Q561 140 552 144M574 146Q566 150 560 153M573 131Q563 134 555 137M572 117Q561 121 548 125M572 132Q570 125 568 119M564 135Q562 127 559 122M556 138Q554 131 551 123M526 140Q529 146 529 153M521 142Q522 148 524 153M516 144Q517 148 519 153M525 142Q522 142 518 144M527 147Q522 148 518 149M530 151Q523 153 517 154M541 116Q543 127 543 137M528 116Q529 129 531 140M542 120Q534 122 528 122M548 132Q536 134 525 135M519 153Q518 161 517 170M509 151Q507 160 506 170M522 155Q515 155 506 154M522 162Q512 162 504 160M518 168Q512 167 507 167M533 168Q527 173 522 178M531 161Q524 169 516 175M525 156Q518 163 511 169M531 169Q528 165 523 160M523 176Q518 172 515 167M566 161Q559 163 553 164M566 152Q558 153 549 156M566 165Q565 157 563 149M560 167Q557 158 556 149M555 167Q553 159 551 151M547 128Q552 133 557 138M542 129Q549 138 556 144M540 135Q544 140 550 146M536 138Q541 143 547 150M549 129Q543 134 537 141M555 138Q550 143 546 147M526 157Q529 160 533 165M521 160Q526 164 530 170M518 164Q521 168 525 172M527 156Q521 161 517 166M530 161Q525 165 522 169M534 164Q529 168 523 173M488 209Q487 212 484 217M482 205Q479 209 477 214M490 210Q485 206 480 204M489 214Q482 211 477 208M486 218Q481 214 475 212M508 215Q517 215 527 217M504 222Q516 224 529 225M503 231Q515 232 527 234M509 212Q507 223 506 234M517 213Q515 225 514 235M526 213Q523 225 523 237M525 185Q519 193 516 202M521 182Q515 192 512 200M516 181Q511 189 508 197M509 181Q507 187 504 192M525 190Q515 184 507 181M519 199Q512 195 503 191M500 225Q503 236 507 247M493 230Q495 240 499 248M486 233Q487 240 491 249M500 229Q494 232 487 233M505 236Q496 239 487 242M506 244Q498 247 492 249M513 231Q511 236 511 241M509 228Q508 234 506 240M506 227Q504 233 502 240M502 226Q500 231 498 238M511 231Q506 229 503 229M509 239Q506 237 500 236M492 175Q496 185 500 194M487 179Q490 186 494 195M482 183Q485 190 488 196M476 183Q481 191 484 200M491 180Q486 184 481 185M498 190Q491 194 484 196M509 208Q502 212 494 217M503 197Q495 201 486 207M506 209Q504 205 500 199M498 218Q494 210 488 203M501 197Q491 199 480 203M500 191Q489 194 478 197M495 187Q487 189 480 191M493 181Q486 183 479 185M498 196Q496 190 495 183M491 199Q489 192 487 184M483 204Q480 194 478 183M513 209Q511 216 508 224M505 206Q503 212 500 222M515 213Q507 211 500 208M511 222Q505 220 499 218M451 239Q442 241 436 244M449 232Q442 236 434 237M446 226Q438 228 432 230M450 242Q446 233 443 223M439 245Q435 236 433 227M438 232Q444 239 450 244M429 240Q436 246 442 253M440 231Q435 237 429 242M447 234Q440 243 432 250M453 240Q446 248 439 255M416 229Q406 229 398 230M416 223Q407 224 397 224M415 215Q405 215 397 216M412 232Q411 223 411 214M402 230Q401 223 401 217M430 225Q425 226 422 227M431 222Q425 224 419 225M429 219Q424 221 420 221M430 216Q424 218 418 219M430 226Q430 221 428 216M426 225Q425 222 424 219M421 227Q421 222 420 219M453 243Q448 246 441 250M448 234Q441 238 435 241M453 247Q449 240 444 233M444 251Q439 244 437 239M406 247Q416 248 423 249M408 256Q414 257 419 258M409 245Q408 250 407 257M414 247Q414 252 413 257M421 247Q420 254 420 259M433 238Q435 246 435 255M422 238Q422 247 424 257M434 239Q427 239 421 240M438 246Q429 248 419 248M437 253Q429 253 422 254M401 357Q401 363 400 372M396 354Q395 363 395 374M390 352Q389 364 389 376M383 355Q382 363 382 372M399 358Q393 359 386 358M403 371Q393 371 381 370M404 317Q414 321 424 324M403 322Q413 326 421 329M403 329Q409 331 416 334M399 333Q408 337 417 340M407 315Q404 325 400 335M414 319Q411 329 407 338M420 325Q417 332 416 337M396 337Q400 342 405 348M392 339Q397 344 403 351M389 342Q394 348 399 354M387 345Q392 350 397 356M397 340Q393 342 389 347M402 346Q398 350 394 353M418 342Q419 351 419 359M412 341Q412 352 413 361M407 342Q409 351 408 360M402 341Q402 351 403 362M415 345Q409 345 404 346M416 356Q411 356 404 357M412 357Q419 360 425 360M407 361Q417 364 428 366M407 367Q417 370 426 371M405 371Q416 375 425 376M412 356Q411 365 408 373M419 360Q417 366 416 372M425 362Q425 367 423 373M377 325Q376 337 374 347M365 327Q363 334 363 341M377 329Q371 329 363 327M380 336Q370 334 359 333M379 344Q369 343 358 341M413 362Q417 370 422 378M405 367Q408 373 413 382M416 366Q410 368 406 371M423 372Q416 376 407 381M390 352Q396 356 403 357M390 356Q394 357 400 360M388 359Q394 362 398 364M385 363Q391 364 398 368M392 354Q391 359 389 362M400 356Q397 360 395 366M367 354Q372 356 377 360M363 360Q367 364 374 366M369 354Q368 358 364 363M376 358Q372 362 370 366M411 380Q411 385 413 390M407 382Q408 387 410 391M403 384Q403 388 405 391M413 381Q407 383 402 384M413 384Q408 386 403 387M414 389Q410 392 405 392M448 359Q445 365 443 372M444 358Q440 365 439 370M440 356Q438 362 435 369M436 353Q434 360 430 368M449 361Q442 358 434 355M444 364Q439 363 435 361M443 370Q437 368 432 366M392 358Q396 366 403 373M386 359Q393 369 399 378M382 363Q387 373 394 381M376 366Q382 374 390 386M395 361Q387 365 380 371M399 372Q394 376 389 379M382 357Q385 361 385 365M375 357Q376 364 379 369M385 357Q379 359 373 361M385 363Q381 365 377 366M395 321Q390 324 385 325M392 318Q388 320 385 321M392 314Q388 315 382 317M393 322Q392 318 391 315M387 325Q385 321 383 316M796 530Q794 532 790 536M792 525Q788 529 785 533M798 532Q793 528 790 525M794 534Q791 530 788 528M791 537Q788 535 785 532M842 513Q843 518 846 524M837 513Q839 521 841 526M833 513Q835 522 838 529M829 515Q831 524 833 530M840 513Q836 514 832 516M843 518Q838 520 832 522M847 523Q840 525 831 528M793 512Q796 517 798 521M788 511Q793 520 796 527M784 515Q788 520 791 528M781 517Q783 523 787 529M794 512Q788 515 780 519M796 522Q792 523 788 526M847 512Q846 521 846 528M840 512Q839 520 839 527M847 515Q844 514 839 515M848 520Q843 520 838 519M849 525Q842 525 836 524M797 529Q802 540 805 549M786 534Q790 544 794 553M802 530Q792 534 782 538M801 539Q795 542 789 543M805 546Q798 548 791 551M826 524Q822 527 817 532M824 521Q819 525 814 529M822 517Q816 522 811 526M820 513Q813 518 807 523M826 526Q821 520 816 513M817 529Q814 525 811 522M805 549Q810 555 814 559M800 555Q805 559 809 563M808 549Q802 554 799 558M811 551Q806 557 802 561M816 555Q810 559 805 566M831 525Q823 530 814 538M827 521Q819 527 812 533M822 518Q815 523 811 527M822 511Q813 517 804 524M829 528Q823 520 818 512M823 531Q818 525 813 518M815 534Q812 530 808 524M782 508Q794 515 805 521M780 517Q789 523 797 528M776 525Q783 531 792 535M785 512Q782 519 778 524M793 516Q788 523 785 529M800 521Q796 528 792 533M804 509Q812 516 817 521M799 513Q806 519 813 526M793 515Q801 524 810 533M790 521Q798 529 804 536M803 512Q799 517 794 521M809 516Q804 522 798 527M818 520Q809 527 801 536M517 366Q522 373 530 377M512 371Q518 378 526 382M509 376Q515 382 521 386M519 367Q515 372 509 378M523 372Q519 376 515 381M530 373Q525 381 518 388M516 329Q513 338 511 348M504 325Q502 335 499 346M515 332Q508 330 503 329M513 344Q506 342 500 341M521 353Q525 354 531 356M520 356Q524 356 530 359M517 359Q525 361 531 363M518 363Q522 363 528 366M521 352Q520 357 518 364M526 354Q524 359 523 364M531 356Q530 361 528 365M509 348Q514 353 520 356M501 356Q509 362 516 366M510 347Q505 353 502 359M518 349Q512 357 506 365M521 356Q517 361 514 365M492 351Q489 360 485 371M480 346Q476 356 472 368M495 356Q484 352 474 349M490 369Q480 365 469 361M522 354Q523 359 521 363M518 353Q517 357 517 363M512 350Q512 357 511 365M522 355Q517 354 512 354M522 362Q515 362 511 361M515 372Q515 379 515 388M510 374Q510 379 510 387M505 374Q505 379 505 386M500 375Q501 380 500 386M514 376Q507 376 501 376M516 384Q508 384 499 385M504 337Q508 342 513 347M500 343Q503 347 507 350M507 340Q504 343 501 345M511 344Q507 346 504 350M485 368Q496 371 504 376M486 374Q493 376 500 379M484 378Q492 382 498 384M480 382Q489 385 498 390M489 368Q487 375 482 385M495 371Q491 379 488 387M501 375Q498 381 495 388M522 350Q523 356 524 362M516 350Q518 356 518 364M512 353Q513 357 513 363M522 353Q516 354 512 354M524 360Q518 361 513 362M515 370Q507 378 499 383M512 365Q504 372 494 379M507 360Q499 367 491 372M505 354Q495 361 485 369M514 372Q508 364 501 356M506 375Q502 368 497 363M501 382Q495 374 489 366M520 355Q511 358 505 359M517 351Q511 353 505 354M519 345Q509 347 501 350M517 341Q509 344 501 345M516 354Q515 350 513 344M508 358Q505 351 504 345M513 353Q505 354 497 355M511 346Q504 348 498 348M513 340Q503 341 494 342M512 355Q510 346 510 339M506 354Q505 347 504 340M499 353Q498 348 498 343M500 356Q507 363 515 371M496 360Q504 367 511 375M491 365Q498 373 507 380M488 369Q496 375 503 383M504 359Q496 366 490 373M511 368Q506 374 500 380M691 446Q694 450 698 454M687 448Q690 453 695 458M683 451Q686 457 691 461M691 448Q688 451 686 453M697 452Q692 456 688 459M693 430Q692 435 692 441M684 428Q684 435 683 441M697 432Q689 432 680 430M695 440Q688 438 680 439M727 412Q720 418 714 424M720 405Q714 411 708 417M726 414Q721 409 717 406M722 420Q716 413 712 409M717 424Q711 420 707 414M732 450Q723 450 714 452M729 441Q723 441 716 443M728 454Q728 447 727 438M720 457Q718 448 717 437M734 430Q730 433 726 437M733 426Q728 430 722 435M728 423Q724 427 720 430M727 417Q720 424 714 429M736 430Q730 425 725 418M730 435Q724 429 720 423M726 437Q721 432 717 427M681 436Q688 439 697 441M680 444Q687 446 693 448M685 436Q683 441 682 446M690 436Q688 442 686 449M694 439Q693 444 691 449M713 418Q704 424 697 432M703 409Q696 415 690 421M713 424Q706 416 699 407M704 434Q695 424 687 415M701 412Q710 415 720 421M701 419Q708 421 715 426M696 425Q705 430 713 433M706 413Q703 420 699 428M715 419Q713 425 710 430M737 418Q734 427 730 437M729 416Q727 424 723 434M722 414Q720 422 716 431M738 421Q729 419 720 415M737 428Q726 425 716 422M733 435Q724 431 716 429M700 433Q704 435 709 436M700 436Q703 437 708 439M698 441Q702 443 706 444M703 432Q701 438 699 442M708 435Q707 440 705 444M691 427Q697 427 704 427M687 437Q697 437 707 437M691 425Q690 431 690 437M697 425Q698 431 697 438M705 427Q704 431 704 437M713 437Q713 446 712 457M706 440Q706 447 705 453M699 436Q698 445 698 456M713 439Q706 440 699 439M712 446Q706 445 699 446M714 454Q705 453 696 453M694 449Q686 450 679 450M694 444Q686 444 679 445M695 440Q687 440 678 441M694 435Q685 436 678 436M694 450Q693 442 693 434M687 452Q686 443 686 433M680 450Q680 444 679 436M711 435Q710 442 709 448M703 435Q703 441 702 445M712 436Q706 435 702 434M711 442Q707 440 701 440M711 447Q705 446 699 445M724 449Q718 454 714 460M722 442Q716 451 707 460M717 440Q710 447 704 454M713 436Q707 442 700 451M725 451Q716 444 708 436M717 453Q712 450 707 445M712 458Q708 455 703 450M726 426Q726 431 727 437M721 426Q721 432 723 439M717 426Q717 434 719 440M714 426Q715 433 716 441M725 426Q720 426 714 428M728 431Q720 432 713 433M728 438Q721 438 715 439M530 491Q523 496 516 502M527 484Q519 489 510 497M523 477Q514 485 504 492M530 495Q523 485 516 477M519 501Q512 493 508 487M544 488Q539 498 538 506M536 489Q534 494 533 500M532 484Q529 494 525 502M542 490Q536 489 532 487M540 497Q534 496 530 494M539 504Q533 501 526 499M542 449Q545 453 548 456M539 451Q544 455 547 459M536 453Q541 458 545 462M533 456Q537 460 541 464M542 450Q538 453 535 456M546 452Q541 457 537 461M549 457Q546 461 542 464M523 458Q537 459 548 458M524 466Q535 465 548 466M526 474Q537 474 546 474M527 459Q528 467 527 473M536 456Q535 467 536 476M544 459Q544 466 544 473M524 482Q534 489 543 495M522 490Q529 495 537 500M518 498Q525 502 532 506M530 484Q526 492 520 501M538 492Q534 498 530 504M525 481Q523 492 521 502M518 479Q515 490 513 500M510 479Q509 488 506 497M523 484Q518 483 511 482M524 491Q516 490 507 488M522 498Q513 497 507 495M533 473Q536 477 539 484M527 475Q532 481 535 488M523 478Q527 484 531 490M517 479Q523 487 527 496M532 472Q525 477 517 481M535 479Q528 483 522 487M539 486Q533 490 527 493M541 461Q548 469 556 477M537 467Q542 475 549 481M530 470Q537 479 545 487M543 464Q538 469 534 472M550 467Q543 473 536 479M554 474Q549 479 542 484M547 482Q540 483 533 483M547 473Q540 473 532 475M546 483Q545 478 545 472M541 485Q541 477 540 471M534 483Q534 478 534 474M514 463Q518 468 522 471M510 465Q516 470 519 475M507 468Q510 473 516 478M515 463Q511 466 508 470M518 467Q515 470 511 473M523 468Q517 473 512 478M529 486Q540 488 553 488M531 492Q539 491 549 493M532 498Q540 498 547 499M527 503Q539 504 551 505M534 487Q534 495 533 504M547 485Q545 497 545 508M503 488Q510 490 517 494M500 495Q507 497 514 501M507 486Q504 492 501 500M511 489Q508 494 506 501M514 492Q513 497 511 500M521 452Q525 457 531 463M519 456Q522 460 527 465M515 457Q519 463 525 468M513 461Q516 465 521 470M521 454Q519 457 514 460M525 459Q521 461 518 465M530 461Q524 465 519 470M523 481Q527 487 531 492M521 484Q524 489 528 493M517 486Q520 492 524 497M511 486Q517 493 522 502M525 481Q519 485 513 490M528 485Q522 489 515 494M532 490Q526 495 519 500M443 562Q444 569 444 577M441 562Q440 570 441 576M436 562Q435 569 437 577M433 564Q432 571 433 576M444 565Q437 566 432 566M443 573Q438 573 434 574M461 548Q452 549 444 549M458 540Q451 541 446 541M457 551Q456 545 456 538M448 551Q447 545 447 540M426 548Q432 550 440 553M422 554Q430 557 438 561M419 561Q427 565 436 568M429 545Q425 554 421 565M439 549Q436 560 432 568M462 544Q459 551 455 559M452 541Q450 548 446 552M464 548Q456 544 448 540M456 556Q451 553 446 552M463 557Q470 562 477 568M461 562Q467 567 472 571M456 564Q463 570 470 576M455 570Q460 573 464 578M465 559Q460 565 455 571M473 567Q469 572 464 577M481 555Q475 559 469 565M480 550Q471 557 464 563M475 547Q468 552 462 558M471 543Q466 548 459 553M481 556Q475 550 470 542M476 562Q470 555 463 547M470 566Q465 560 458 552M311 510Q313 518 317 524M300 513Q305 521 307 530M313 508Q306 512 298 515M318 515Q309 518 299 523M322 521Q311 527 301 530M293 511Q297 522 301 533M288 517Q291 525 293 531M283 518Q285 526 288 534M276 517Q279 529 284 539M295 517Q286 520 278 523M296 528Q291 530 285 533M297 511Q304 517 310 522M289 518Q297 523 304 530M299 511Q294 517 291 520M306 514Q300 520 295 526M311 519Q305 524 300 531M304 507Q314 511 322 518M302 512Q310 518 318 523M298 518Q305 523 314 529M309 508Q304 515 300 521M319 512Q314 522 309 529M697 590Q692 592 686 596M694 584Q688 587 683 590M695 592Q693 589 691 585M690 595Q688 591 686 587M706 594Q701 595 697 597M707 591Q700 591 695 594M706 587Q700 589 694 590M705 583Q699 584 694 585M707 595Q707 588 705 583M702 598Q701 590 698 582M697 595Q696 590 695 587M665 577Q673 581 682 585M664 584Q670 586 678 590M659 588Q669 592 679 596M659 595Q666 598 674 602M665 580Q662 587 660 593M675 578Q670 589 666 601M681 584Q677 593 673 601M666 588Q672 592 677 594M665 593Q669 596 673 598M661 595Q668 600 673 602M659 598Q666 601 672 605M667 589Q665 595 661 600M671 591Q668 597 665 602M676 593Q673 598 669 605M688 588Q684 595 678 602M682 587Q678 593 675 597M680 581Q675 590 669 597M674 581Q670 587 667 591M686 588Q681 584 676 581M681 594Q678 591 672 588M680 601Q673 596 666 592M705 600Q695 605 684 611M700 595Q692 600 684 604M698 589Q689 594 679 599M693 585Q686 588 679 593M700 604Q696 594 691 585M688 605Q685 600 682 594M707 575Q711 580 716 583M703 577Q709 581 714 587M702 580Q706 583 711 589M700 583Q705 587 709 591M709 575Q704 581 700 585M713 583Q711 585 708 589M693 583Q685 584 675 586M690 577Q684 578 677 579M692 569Q682 571 673 572M691 584Q689 576 689 569M685 587Q683 578 682 568M677 587Q676 578 675 570M762 415Q767 425 774 436M759 422Q764 429 767 436M752 422Q757 430 763 442M747 426Q752 434 757 444M766 420Q758 424 748 430M768 432Q764 435 757 439M757 429Q767 430 777 432M755 440Q764 441 775 444M763 426Q760 435 759 446M772 429Q772 437 770 446M787 415Q781 422 774 430M781 413Q777 418 772 425M777 411Q774 416 769 421M776 405Q769 413 763 420M785 420Q777 413 770 407M777 427Q772 421 765 416M761 436Q756 441 749 444M756 429Q751 433 745 436M761 438Q757 433 754 428M756 440Q753 436 750 431M752 444Q748 440 745 434M758 426Q758 431 758 435M751 424Q751 431 751 437M761 427Q755 427 748 427M760 434Q755 434 748 434M786 417Q785 426 782 436M780 418Q778 426 777 432M776 416Q775 423 772 433M770 416Q768 423 767 429M787 422Q778 420 767 418M783 432Q775 429 767 428M796 404Q789 413 781 420M791 399Q783 406 775 416M782 397Q778 403 773 407M792 408Q787 402 781 398M787 418Q779 411 772 404M761 406Q765 411 768 417M753 409Q757 415 761 423M765 407Q759 410 754 413M768 413Q762 417 758 420M786 392Q792 397 799 402M784 397Q789 400 795 405M780 401Q786 405 792 410M774 404Q783 410 790 416M789 393Q783 400 778 407M797 399Q791 406 786 413M757 395Q761 402 764 410M750 400Q752 405 755 412M760 396Q754 399 749 401M761 402Q757 404 752 406M766 406Q759 409 752 412M501 485Q498 487 493 490M500 481Q495 486 490 488M498 479Q493 481 489 485M495 476Q490 478 487 481M501 486Q498 481 495 476M497 488Q494 483 492 479M493 490Q490 487 487 482M476 481Q472 487 467 494M468 475Q463 483 459 488M477 483Q472 480 467 476M474 489Q467 485 462 481M470 494Q464 489 459 486M481 480Q488 485 498 487M473 489Q485 494 496 500M486 475Q482 486 476 497M495 484Q492 490 489 499M467 469Q472 474 478 478M464 475Q469 477 473 482M456 478Q465 483 473 490M468 468Q463 474 458 482M473 473Q468 478 464 485M477 477Q474 482 469 488M463 459Q470 461 475 461M461 463Q467 465 476 466M460 467Q468 468 475 470M460 471Q467 473 473 474M463 461Q463 466 462 469M469 460Q468 466 466 472M475 459Q472 467 472 475M488 473Q478 477 468 482M485 465Q476 469 465 475M480 459Q471 463 463 466M485 478Q481 469 476 458M474 484Q469 473 464 462M598 544Q607 548 619 551M596 550Q607 553 617 557M595 556Q604 558 614 562M595 562Q604 565 610 568M600 547Q597 554 595 560M608 549Q606 557 603 564M617 548Q614 560 610 570M611 545Q620 551 627 555M606 551Q616 558 624 562M603 557Q612 562 621 568M615 545Q610 553 605 561M620 548Q616 557 610 565M625 555Q623 561 619 565M632 543Q632 552 630 559M620 538Q618 551 617 562M636 544Q625 542 615 541M636 552Q625 551 613 549M634 560Q623 558 614 558M626 553Q630 558 633 565M621 555Q625 561 629 568M617 560Q620 566 624 570M628 555Q624 558 617 562M631 563Q627 566 623 568M635 553Q632 564 631 572M627 549Q625 562 622 573M618 550Q617 559 615 570M634 557Q625 555 618 554M632 569Q625 567 616 566M623 579Q618 581 612 582M623 574Q617 576 610 577M622 569Q616 570 609 572M624 580Q622 574 620 567M618 582Q615 575 614 569M613 581Q613 577 611 572" fill="none" stroke="#fff" stroke-width=".75" stroke-opacity=".92"/>
<path d="M215 157C216.7 81.7 222.7 157.5 225 158C227.3 158.5 227.3 158.3 229 160C230.7 161.7 234.2 165.8 235 168C235.8 170.2 233.7 170.8 234 173C234.3 175.2 235.5 178.7 237 181C238.5 183.3 241.5 185.2 243 187C244.5 188.8 244.7 189.8 246 192C247.3 194.2 249.2 197 251 200C252.8 203 254.7 206.3 257 210C259.3 213.7 263 217.8 265 222C267 226.2 268 230.3 269 235C270 239.7 270.5 245.8 271 250C271.5 254.2 271.7 254.2 272 260C272.3 265.8 272.5 278.8 273 285C273.5 291.2 274.8 293.7 275 297C275.2 300.3 273.3 297.8 274 305C274.7 312.2 277.3 331.3 279 340C280.7 348.7 282.5 353.5 284 357C285.5 360.5 285.8 359.7 288 361C290.2 362.3 294.2 362.8 297 365C299.8 367.2 302.5 371.2 305 374C307.5 376.8 309.7 379.3 312 382C314.3 384.7 316.8 387.3 319 390C321.2 392.7 323.5 395.3 325 398C326.5 400.7 327.3 403.3 328 406C328.7 408.7 329.2 411.2 329 414C328.8 416.8 327.3 417.7 327 423C326.7 428.3 327 439.8 327 446C327 452.2 326.7 456.3 327 460C327.3 463.7 327.8 465.8 329 468C330.2 470.2 331.3 471.7 334 473C336.7 474.3 341.2 475.2 345 476C348.8 476.8 354.3 477.2 357 478C359.7 478.8 360.2 479.5 361 481C361.8 482.5 363 484.8 362 487C361 489.2 357.8 491.5 355 494C352.2 496.5 347.8 499 345 502C342.2 505 339.8 508.3 338 512C336.2 515.7 335.3 519.7 334 524C332.7 528.3 331.3 533.8 330 538C328.7 542.2 328 546 326 549C324 552 320.7 554.2 318 556C315.3 557.8 313 551 310 560C307 569 315.8 601.7 300 610C284.2 618.3 229.2 685.5 215 610C200.8 534.5 213.3 232.3 215 157Z" fill="#75cff0" />
<path d="M272 410C274.5 407.5 279.5 405.7 283 405C286.5 404.3 290 404.9 293 405.6C296 406.3 299.1 407.3 301 409C302.9 410.7 304 413.2 304.6 416C305.2 418.8 305 422 304.6 426C304.2 430 302.6 434.3 302 440C301.4 445.7 301 455.3 301 460C301 464.7 302 465.3 302 468C302 470.7 301.8 473.3 301 476C300.2 478.7 299.7 481.3 297 484C294.3 486.7 289.7 490 285 492C280.3 494 274.7 494.2 269 496C263.3 497.8 256.3 500 251 503C245.7 506 240.7 511.2 237 514C233.3 516.8 230.5 520.3 229 520C227.5 519.7 228 515.3 228 512C228 508.7 228.2 503.3 229 500C229.8 496.7 231 495.3 233 492C235 488.7 238.7 484 241 480C243.3 476 245.3 471.3 247 468C248.7 464.7 249.3 463.7 251 460C252.7 456.3 255 450.3 257 446C259 441.7 261.2 438.3 263 434C264.8 429.7 266.5 424 268 420C269.5 416 269.5 412.5 272 410Z" fill="#efe9e1" />
<path d="M273 498C269.7 499.3 262 504.3 257 508C252 511.7 247.7 517 243 520C238.3 523 231.5 523.8 229 526C226.5 528.2 228 530.7 228 533C228 535.3 226.2 540.5 229 540C231.8 539.5 239 535 245 530C251 525 259.7 515 265 510C270.3 505 275.7 502 277 500C278.3 498 276.3 496.7 273 498Z" fill="#efe9e1" />
<path d="M215 416C218 410 228.5 415.8 233 417C237.5 418.2 239.8 420.8 242 423C244.2 425.2 245.5 428 246 430C246.5 432 246.5 432.3 245 435C243.5 437.7 239.7 443.2 237 446C234.3 448.8 232.7 450.8 229 452C225.3 453.2 217.3 459 215 453C212.7 447 212 422 215 416Z" fill="#efe9e1" />
<path d="M215 458C218 454.2 229.5 453.2 233 453C236.5 452.8 236 454.5 236 457C236 459.5 234.8 465.2 233 468C231.2 470.8 228 472.7 225 474C222 475.3 216.7 478.7 215 476C213.3 473.3 212 461.8 215 458Z" fill="#efe9e1" />
<path d="M305 497C308.5 494.2 309.7 492.7 313 491C316.3 489.3 321.7 487.5 325 487C328.3 486.5 330.7 486.5 333 488C335.3 489.5 338 494 339 496C340 498 340 497.7 339 500C338 502.3 335 505.7 333 510C331 514.3 329.3 521.3 327 526C324.7 530.7 322.7 534.7 319 538C315.3 541.3 307.8 543.7 305 546C302.2 548.3 302 550.2 302 552C302 553.8 305.3 554 305 557C304.7 560 309.2 567 300 570C290.8 573 258.7 575.7 250 575C241.3 574.3 247.2 568.5 248 566C248.8 563.5 253 562 255 560C257 558 257.5 557.7 260 554C262.5 550.3 266.3 543.7 270 538C273.7 532.3 278.3 525 282 520C285.7 515 288.2 511.8 292 508C295.8 504.2 301.5 499.8 305 497Z" fill="#efe9e1" />
<path d="M236 586C239 581.3 234.3 583 250 582C265.7 581 316.7 575.3 330 580C343.3 584.7 346.3 605 330 610C313.7 615 247.7 614 232 610C216.3 606 233 590.7 236 586Z" fill="#efe9e1" />
<path d="M251 468C252 468.3 253.7 470.7 257 470C260.3 469.3 267 465.3 271 464C275 462.7 277.3 462 281 462C284.7 462 289.5 463.8 293 464C296.5 464.2 300.5 463.2 302 463" fill="none" stroke="#75cff0" stroke-width="1.6" stroke-linecap="round" stroke-linejoin="round" />
<path d="M647.5 182.5C648.5 180.8 652.5 181.1 655 180C657.5 178.9 660.8 175.6 662.5 176C664.2 176.4 665.4 180.2 665 182.5C664.6 184.8 661.2 187.2 660 190C658.8 192.8 658.8 198.2 657.5 199C656.2 199.8 653.9 196.5 652.5 195C651.1 193.5 649.8 192.1 649 190C648.2 187.9 646.5 184.2 647.5 182.5Z" fill="#75cff0" />
<path d="M718.8 233.8C719.6 232.3 722.9 229.2 725 227.5C727.1 225.8 729.6 225.4 731.2 223.8C732.9 222.1 734.3 220.4 735 217.5C735.7 214.6 735.1 208.3 735.5 206.2C735.9 204.2 737 204 737.5 205C738 206 737.5 211.7 738.8 212.5C740 213.3 743.1 210.4 745 210C746.9 209.6 749.8 209.2 750 210C750.2 210.8 747.5 213.3 746.2 215C745 216.7 742.3 218.5 742.5 220C742.7 221.5 747.1 222.5 747.5 223.8C747.9 225 746.7 226.7 745 227.5C743.3 228.3 739.6 227.7 737.5 228.8C735.4 229.8 734.6 232.7 732.5 233.8C730.4 234.8 727.1 234.6 725 235C722.9 235.4 721 236.5 720 236.2C719 236 717.9 235.2 718.8 233.8Z" fill="#75cff0" />
<path d="M570 507.5C573.3 506.7 582.5 512.1 585 515C587.5 517.9 587.1 523.2 585 525C582.9 526.8 575.8 526.8 572.5 526C569.2 525.2 565.4 523.1 565 520C564.6 516.9 566.7 508.3 570 507.5Z" fill="#75cff0" />
<path d="M556 512C557.3 509.2 564.3 509.2 566 512C567.7 514.8 567.3 526.2 566 529C564.7 531.8 559.7 531.8 558 529C556.3 526.2 554.7 514.8 556 512Z" fill="#75cff0" />
<path d="M535 500C536.2 498 542.5 497.5 544 500C545.5 502.5 545.2 513 544 515C542.8 517 538.5 514.5 537 512C535.5 509.5 533.8 502 535 500Z" fill="#75cff0" />
<path d="M540 525C542 523.8 550 523.8 552 525C554 526.2 554 530.8 552 532C550 533.2 542 533.2 540 532C538 530.8 538 526.2 540 525Z" fill="#75cff0" />
<path d="M567 475C568.2 472.5 573.7 472.5 575 475C576.3 477.5 576.2 487.5 575 490C573.8 492.5 569.3 492.5 568 490C566.7 487.5 565.8 477.5 567 475Z" fill="#75cff0" />
<path d="M579 422C580 420 584.8 420 586 422C587.2 424 587 432 586 434C585 436 581.2 436 580 434C578.8 432 578 424 579 422Z" fill="#75cff0" />
<path d="M563 496C564 494.3 568.8 494.3 570 496C571.2 497.7 571 504.3 570 506C569 507.7 565.2 507.7 564 506C562.8 504.3 562 497.7 563 496Z" fill="#75cff0" />
<path d="M442 290C443.3 288.3 449.7 287.7 452 288C454.3 288.3 453.8 291.5 456 292C458.2 292.5 464 290.2 465 291C466 291.8 464.2 295.8 462 297C459.8 298.2 454.3 296.8 452 298C449.7 299.2 449.3 304 448 304C446.7 304 445 300.3 444 298C443 295.7 440.7 291.7 442 290Z" fill="#75cff0" />
<path d="M657 520C658.7 516 664.7 515.3 668 516C671.3 516.7 676.3 520 677 524C677.7 528 674.2 535.7 672 540C669.8 544.3 666.3 550 664 550C661.7 550 659.2 545 658 540C656.8 535 655.3 524 657 520Z" fill="#75cff0" />
<path d="M680 437C680.8 435.2 685 435.2 686 437C687 438.8 686.8 446.2 686 448C685.2 449.8 682 449.8 681 448C680 446.2 679.2 438.8 680 437Z" fill="#75cff0" />
<path d="M609 568C610.2 566.3 616.2 564.8 618 566C619.8 567.2 621.2 573.3 620 575C618.8 576.7 612.8 577.2 611 576C609.2 574.8 607.8 569.7 609 568Z" fill="#75cff0" />
<path d="M851 389C852.2 386.8 858.3 383.3 860 385C861.7 386.7 862.2 396.8 861 399C859.8 401.2 854.7 399.7 853 398C851.3 396.3 849.8 391.2 851 389Z" fill="#75cff0" />
<path d="M340.7 457C342.4 456.3 347 453.4 351 453C355 452.6 361.4 455.5 364.7 454.7C368 453.9 370.6 450.4 371 448C371.4 445.6 369.4 441.8 367 440C364.6 438.2 360.2 437 356.7 437C353.2 437 348.7 440.4 346 440C343.3 439.6 340.7 436.7 340.7 434.7C340.7 432.7 342.9 429.3 346 428C349.1 426.7 354.2 426.5 359 426.7C363.8 426.9 370.5 429.3 375 429C379.5 428.7 382.4 427 386 425C389.6 423 393.2 418.5 396.7 417C400.2 415.5 403.9 415.3 407 416C410.1 416.7 412.5 418.8 415 421C417.5 423.2 419.3 426.7 422 429C424.7 431.3 428.6 434.9 431 434.7C433.4 434.5 434.4 429.6 436.7 428C439 426.4 442 424.8 444.7 425C447.4 425.2 450.5 427.2 452.7 429C454.9 430.8 456.1 436 458 436C459.9 436 461.6 430 464 429C466.4 428 469.8 428.6 472.5 430C475.2 431.4 477.5 435.2 480 437.5C482.5 439.8 485 443.8 487.5 444C490 444.2 492.9 440.5 495 439C497.1 437.5 497.5 435.2 500 435C502.5 434.8 507.1 436 510 437.5C512.9 439 515.4 441.9 517.5 444C519.6 446.1 522.2 447.3 522.5 450C522.8 452.7 519.8 456.7 519 460C518.2 463.3 516.9 465.8 517.5 470C518.1 474.2 520.4 480.8 522.5 485C524.6 489.2 527.1 492.7 530 495C532.9 497.3 536.7 499.8 540 499C543.3 498.2 547.5 494 550 490C552.5 486 553.3 479.2 555 475C556.7 470.8 557.1 468.2 560 465C562.9 461.8 569.6 457.8 572.5 456C575.4 454.2 576.7 454.3 577.5 454M354 557.3C353.9 554.6 352.8 546.2 353.5 541.3C354.2 536.4 355.2 532.4 358 528C360.8 523.6 366.9 518.9 370 514.7C373.1 510.5 373.8 505.7 376.7 502.7C379.6 499.7 383.5 496.9 387.3 496.5C391.1 496.1 396.1 498.1 399.3 500C402.6 501.9 405.9 505.3 406.8 508C407.7 510.7 407.9 513.1 404.7 516C401.4 518.9 392.4 522.6 387.3 525.3C382.2 528 376.4 529.5 374 532C371.6 534.5 371.1 538 372.7 540C374.2 542 379.8 542 383.3 544C386.9 546 391.8 549.8 394 552C396.2 554.2 396.2 556.4 396.7 557.3M396.7 586C398.1 586 402.4 585 405 586C407.6 587 410.2 589.7 412 592C413.8 594.3 415.3 598.7 416 600M424 600C425 598.3 427.3 592.3 430 590C432.7 587.7 437 586 440 586C443 586 446 587.7 448 590C450 592.3 451.3 598.3 452 600" fill="none" stroke="#75cff0" stroke-width="2" stroke-linecap="round" stroke-linejoin="round" />
<path d="M335 175C330.4 176.7 317.5 179.2 307.5 185C297.5 190.8 280.4 205.8 275 210M279 340C282.5 339.2 292.3 336.7 300 335C307.7 333.3 320.8 330.8 325 330M287 361C289.2 360 294.8 356.5 300 355C305.2 353.5 315 352.5 318 352M820 290C821 293.3 823 303.3 826 310C829 316.7 835.3 322.3 838 330C840.7 337.7 841.3 351.7 842 356M835 420C833.8 425 831.3 440 828 450C824.7 460 818.3 471.7 815 480C811.7 488.3 809.2 496.7 808 500" fill="none" stroke="#bfe3f3" stroke-width="0.7" stroke-linecap="round" stroke-linejoin="round" />
<path d="M860 259.8C855.3 263.1 837.4 272.7 831.7 279.7C826 286.7 829.3 294.4 826 302C822.7 309.6 815.6 317.4 811.8 325C808 332.6 807.3 342 803 347.7C798.7 353.4 788.8 357.1 786 359M760.8 257C760.3 258.8 760.4 264.7 758 268C755.6 271.3 748.6 275.3 746.7 276.8M786 364.7C784.2 366.6 778.2 372.7 775 376C771.8 379.3 769.8 380.7 766.5 384.5C763.2 388.3 756.9 396.3 755 398.7M826 359C829.8 359.9 843 364.7 848.7 364.7C854.4 364.7 858.1 359.9 860 359M265 186C270.4 185.4 291.7 186.4 297.5 182.5C303.3 178.6 299.6 165.8 300 162.5M282.5 199C288.8 199.2 307.9 195.2 320 200C332.1 204.8 349.2 222.9 355 227.5M365 192.5C366.7 188.3 371.7 173.3 375 167.5C378.3 161.7 383.3 159.2 385 157.5M335 280C335.4 285.4 325.4 307.3 337.5 312.5C349.6 317.7 395.8 311.2 407.5 311M340 312.5C339.2 316.2 322.9 331.2 335 335C347.1 338.8 399.6 335 412.5 335M365 312.5 L347.5 332.5M382.5 311 L384 335M391 335 L391 360M335 360 L407.5 360M361 360 L362.5 380M375 360 L375 372.5M402.5 260C402.8 264.2 403.4 276.7 404 285C404.6 293.3 405 297.5 406 310C407 322.5 409.3 351.7 410 360M700 160C698.3 162.5 694.7 170.7 690 175C685.3 179.3 676.3 181.8 672 186C667.7 190.2 667.7 196 664 200C660.3 204 652.3 208.3 650 210M700 120C699 122.5 697.3 130 694 135C690.7 140 683.7 144.2 680 150C676.3 155.8 673.3 166.7 672 170M805 150C806.7 152.5 813.8 160 815 165C816.2 170 812.5 177.5 812 180M806 500C808.3 502.5 815 510.3 820 515C825 519.7 831 520.5 836 528C841 535.5 846.2 551.3 850 560C853.8 568.7 857.5 576.7 859 580M806 500C809 498.7 817.5 497 824 492C830.5 487 839.2 476.2 845 470C850.8 463.8 856.7 457.5 859 455M441 520C445.8 519.7 460.2 517.7 470 518C479.8 518.3 495 521.3 500 522M441 540C446.7 540.8 465.2 545 475 545C484.8 545 492.5 539.5 500 540C507.5 540.5 516.7 546.7 520 548M330 600C332.5 598.7 338 593.7 345 592C352 590.3 364.5 589.7 372 590C379.5 590.3 387 593.3 390 594" fill="none" stroke="#fff" stroke-width="0.85" stroke-linecap="round" stroke-linejoin="round" stroke-opacity=".95"/>
<path d="M750 110C750.4 112.5 750.4 120.8 752.5 125C754.6 129.2 759.6 132.9 762.5 135C765.4 137.1 767.5 134.2 770 137.5C772.5 140.8 774.2 149.6 777.5 155C780.8 160.4 785.4 165.8 790 170C794.6 174.2 800 177.5 805 180C810 182.5 816.7 182.5 820 185C823.3 187.5 821.7 192.1 825 195C828.3 197.9 834.3 200.7 840 202.5C845.7 204.3 855.8 205.4 859 206" fill="none" stroke="#9aa0bb" stroke-width="0.7" stroke-linecap="round" stroke-linejoin="round" />
<path d="M640 526C642.5 525.7 650.3 523.3 655 524C659.7 524.7 664.5 526.5 668 530C671.5 533.5 672.3 541.3 676 545C679.7 548.7 687 547.8 690 552C693 556.2 695.7 564.5 694 570C692.3 575.5 685.3 581.7 680 585C674.7 588.3 667 590.8 662 590C657 589.2 652 581.7 650 580" fill="none" stroke="#a9a9b8" stroke-width="0.6" stroke-linecap="round" stroke-linejoin="round" stroke-dasharray="2 1.5"/>
<path d="M225 140C227.5 142.5 234.8 150 240 155C245.2 160 252.2 165.4 256 170C259.8 174.6 260.8 178.3 262.5 182.5C264.2 186.7 264.6 190.4 266 195C267.4 199.6 268.5 205 271 210C273.5 215 279 220 281 225C283 230 282.8 234.2 283 240C283.2 245.8 282 252.5 282 260C282 267.5 282.5 277.9 283 285C283.5 292.1 282.6 297.3 285 302.5C287.4 307.7 293.3 312.4 297.5 316C301.7 319.6 304.6 321.5 310 324C315.4 326.5 324.6 329 330 331C335.4 333 340.7 334.1 342.5 336C344.3 337.9 342.2 340.2 341 342.5C339.8 344.8 336.2 346.2 335 350C333.8 353.8 333.6 361 334 365C334.4 369 334 371.5 337.5 374C341 376.5 350 377.8 355 380C360 382.2 364.3 384.2 367.5 387.5C370.7 390.8 371.1 396.7 374 400C376.9 403.3 380.7 406.2 385 407.5C389.3 408.8 395 408.1 400 407.5C405 406.9 412.5 404.6 415 404M256 170C258.8 169.2 265.2 166.2 272.5 165C279.8 163.8 291.7 162.9 300 163C308.3 163.1 315.4 165.5 322.5 165.5C329.6 165.5 333.3 164.6 342.5 163C351.7 161.4 370.4 157.5 377.5 156C384.6 154.5 383.8 154.3 385 154M380 111C380.2 113.3 380.3 118.9 381 125C381.7 131.1 382.9 142.1 384 147.5C385.1 152.9 384.8 153.8 387.5 157.5C390.2 161.2 396.7 166.7 400 170C403.3 173.3 405.7 175 407.5 177.5C409.3 180 408.5 181.7 411 185C413.5 188.3 419.3 193.8 422.5 197.5C425.7 201.2 427.5 204.6 430 207.5C432.5 210.4 435.4 211.7 437.5 215C439.6 218.3 439.6 224.2 442.5 227.5C445.4 230.8 451.2 231.2 455 235C458.8 238.8 461.7 245.5 465 250C468.3 254.5 471.7 261.2 475 262C478.3 262.8 483.3 256.2 485 255M409.5 360C409.8 362.9 410.1 372.5 411 377.5C411.9 382.5 413.7 385.8 415 390C416.3 394.2 418.2 399.2 419 402.5C419.8 405.8 420.7 407.1 420 410C419.3 412.9 416.8 417.1 415 420C413.2 422.9 410.2 424.2 409 427.5C407.8 430.8 407.2 434.2 407.5 440C407.8 445.8 409.8 455.8 411 462.5C412.2 469.2 412.7 474.6 415 480C417.3 485.4 422.1 490.4 425 495C427.9 499.6 430.4 503.3 432.5 507.5C434.6 511.7 436.2 514.6 437.5 520C438.8 525.4 439.4 534.2 440 540C440.6 545.8 439.3 547.5 441 555C442.7 562.5 446 578.3 450 585C454 591.7 462.5 593.3 465 595M410 362.5C412.5 362.9 419.6 363.6 425 365C430.4 366.4 438.2 368.9 442.5 371C446.8 373.1 449.1 376 451 377.5C452.9 379 451.7 379.6 454 380C456.3 380.4 463.2 380 465 380M485 255C486.7 254.6 491.7 250.8 495 252.5C498.3 254.2 500 263.1 505 265C510 266.9 517.9 263.8 525 264C532.1 264.2 543.5 264.2 547.5 266C551.5 267.8 549 270.6 549 275C549 279.4 549.4 287.1 547.5 292.5C545.6 297.9 541.2 303.3 537.5 307.5C533.8 311.7 529.6 315.8 525 317.5C520.4 319.2 515 318.1 510 317.5C505 316.9 497.5 314.6 495 314M400 444C402.1 442.1 408.3 436.5 412.5 432.5C416.7 428.5 419.6 423.1 425 420C430.4 416.9 438.8 415.5 445 414C451.2 412.5 455.8 411.8 462.5 411C469.2 410.2 477.9 410.4 485 409C492.1 407.6 499.2 404 505 402.5C510.8 401 514.2 400.8 520 400C525.8 399.2 535 399.2 540 397.5C545 395.8 547.3 392.9 550 390C552.7 387.1 555 381.7 556 380M590 422.5C592.9 422.8 602.9 424.2 607.5 424C612.1 423.8 615.8 421.5 617.5 421M626 600C626.2 597.1 626.7 588.8 627.5 582.5C628.3 576.2 629.9 568.8 631 562.5C632.1 556.2 635 550.4 634 545C633 539.6 626.9 534.2 625 530C623.1 525.8 622.1 523.3 622.5 520C622.9 516.7 625.4 512.9 627.5 510C629.6 507.1 633.8 503.8 635 502.5M750 467.5C752.1 466.9 758.3 464 762.5 464C766.7 464 770.4 464.8 775 467.5C779.6 470.2 785.8 476.2 790 480C794.2 483.8 798.3 488.3 800 490M566 111C566.2 113.3 566.3 120.2 567 125C567.7 129.8 568.8 135 570 140C571.2 145 572.3 150.3 574 155C575.7 159.7 577 164.7 580 168C583 171.3 587.8 173 592 175C596.2 177 601.2 177.8 605 180C608.8 182.2 612.5 185 615 188C617.5 191 618.8 194.3 620 198C621.2 201.7 622.3 206 622 210C621.7 214 619.7 218.3 618 222C616.3 225.7 613 230.3 612 232M576 400C578.3 399.7 585.2 399.3 590 398C594.8 396.7 600.3 394.2 605 392C609.7 389.8 615.8 386.2 618 385M695 300C695.8 302 698.3 307.8 700 312C701.7 316.2 703 321.2 705 325C707 328.8 710.8 333.3 712 335M700 352C701 353.7 704 358.7 706 362C708 365.3 710.3 368.2 712 372C713.7 375.8 715.3 382.8 716 385M720 262C721 263.3 724.3 266.7 726 270C727.7 273.3 729.7 277.8 730 282C730.3 286.2 729.3 291.2 728 295C726.7 298.8 723 303.3 722 305M375 400C377.7 401.3 385.2 405.3 391 408C396.8 410.7 405.5 413.8 410 416C414.5 418.2 416.7 420.2 418 421M418 434.7C416.7 435.6 414 437.8 410 440C406 442.2 398.5 445.2 394 448C389.5 450.8 386.6 453.9 383 457C379.4 460.1 374.4 465.1 372.7 466.7" fill="none" stroke="#fff" stroke-width="2.2" stroke-linecap="round" stroke-linejoin="round" stroke-opacity=".7"/>
<path d="M342 164C342.1 165.4 341.2 169.8 342.5 172.5C343.8 175.2 345.8 178.3 350 180C354.2 181.7 361.7 182 367.5 182.5C373.3 183 379.6 183 385 183C390.4 183 395 181.5 400 182.5C405 183.5 410.8 186.8 415 189C419.2 191.2 421.2 194.2 425 196C428.8 197.8 430.8 199.2 437.5 199.5C444.2 199.8 456.2 197.9 465 198C473.8 198.1 482.5 199 490 200C497.5 201 504.8 203.5 510 204C515.2 204.5 519.2 203.2 521 203M364 337.5C364.3 338.3 364.6 341.2 366 342.5C367.4 343.8 370.2 342.1 372.5 345C374.8 347.9 377.1 355.8 380 360C382.9 364.2 385.8 366.7 390 370C394.2 373.3 401.3 377.3 405 380C408.7 382.7 409.7 383.7 412 386C414.3 388.3 417.7 391.7 419 394C420.3 396.3 419.8 399 420 400M465 382.5C462.5 384.2 455 388.3 450 392.5C445 396.7 437.5 405 435 407.5M475 250C475 252.5 474.6 260 475 265C475.4 270 475.4 275 477.5 280C479.6 285 485.2 289.6 487.5 295C489.8 300.4 490.2 306.7 491 312.5C491.8 318.3 491.8 324.6 492.5 330C493.2 335.4 492.9 339.6 495 345C497.1 350.4 501.7 357.5 505 362.5C508.3 367.5 512.7 372.1 515 375C517.3 377.9 517.8 377.5 519 380C520.2 382.5 522.2 386.7 522.5 390C522.8 393.3 520.6 396.7 521 400C521.4 403.3 522.8 406.2 525 410C527.2 413.8 532.5 420.4 534 422.5M400 386C403.3 385.8 413.8 386 420 385C426.2 384 432.1 380.7 437.5 380C442.9 379.3 446.7 381.1 452.5 381C458.3 380.9 465.4 379.8 472.5 379.5C479.6 379.2 487.5 378.9 495 379C502.5 379.1 510.8 380.5 517.5 380C524.2 379.5 529.6 377.7 535 376C540.4 374.3 545.8 372.7 550 370C554.2 367.3 557.7 364.2 560 360C562.3 355.8 563.2 350.8 564 345C564.8 339.2 564.4 332.5 565 325C565.6 317.5 566.7 305.8 567.5 300C568.3 294.2 568.8 292.1 570 290C571.2 287.9 572.5 287.5 575 287.5C577.5 287.5 580.8 288.6 585 290C589.2 291.4 595 294.3 600 296C605 297.7 612.5 299.3 615 300M546 250C546.7 252.1 547.7 257.5 550 262.5C552.3 267.5 556.7 275.4 560 280C563.3 284.6 568.3 288.3 570 290M550 267.5C553.3 268.3 563.8 271.4 570 272.5C576.2 273.6 584.6 273.8 587.5 274M400 376 L412.5 384M565 337.5C567.5 337.5 575.8 337.8 580 337.5C584.2 337.2 585.8 335.9 590 336C594.2 336.1 600.3 338.3 605 338C609.7 337.7 613.8 336.2 618 334C622.2 331.8 626.3 327.7 630 325C633.7 322.3 635.8 320.2 640 318C644.2 315.8 650.3 314 655 312C659.7 310 665.8 307 668 306M560 360C560.8 362.5 562.5 371.7 565 375C567.5 378.3 571.7 377.5 575 380C578.3 382.5 582.5 386.7 585 390C587.5 393.3 590.2 395.8 590 400C589.8 404.2 584.8 408.3 584 415C583.2 421.7 585.7 433.8 585 440C584.3 446.2 580.8 450.4 580 452.5M517.5 380 L520 390M411 490C414.2 490.2 423.5 490.6 430 491C436.5 491.4 442.5 493.1 450 492.5C457.5 491.9 468.3 489.6 475 487.5C481.7 485.4 486.2 483.3 490 480C493.8 476.7 494.6 471.2 497.5 467.5C500.4 463.8 503.8 461.2 507.5 457.5C511.2 453.8 516.7 448.8 520 445C523.3 441.2 525.2 438.8 527.5 435C529.8 431.2 531.9 423.3 534 422.5C536.1 421.7 537.8 425.8 540 430C542.2 434.2 545.8 441.7 547.5 447.5C549.2 453.3 550 460 550 465C550 470 549 473.3 547.5 477.5C546 481.7 541.8 486.2 541 490C540.2 493.8 541 495.8 542.5 500C544 504.2 547.1 510 550 515C552.9 520 557.5 526.2 560 530C562.5 533.8 562.5 533.8 565 537.5C567.5 541.2 570.8 544.6 575 552.5C579.2 560.4 585.8 577.1 590 585C594.2 592.9 598.3 597.5 600 600M489 410C489.6 412.1 491.7 417.5 492.5 422.5C493.3 427.5 492.8 435 494 440C495.2 445 497.5 448.3 500 452.5C502.5 456.7 507.5 462.9 509 465M415 390C415.7 391.7 416.1 396.8 419 400C421.9 403.2 428.2 409 432.5 409C436.8 409 440.8 403.2 445 400C449.2 396.8 455.4 391.7 457.5 390M547.5 447.5C549.6 448.3 554.6 451.7 560 452.5C565.4 453.3 576.7 452.5 580 452.5M580 452.5C580.2 455.8 579.3 467.1 581 472.5C582.7 477.9 585.6 481.7 590 485C594.4 488.3 601.7 490.8 607.5 492.5C613.3 494.2 619.6 493.8 625 495C630.4 496.2 637.5 499.2 640 500M550 401C552.5 400.8 559.2 400 565 400C570.8 400 579.2 401.4 585 401C590.8 400.6 595 397.8 600 397.5C605 397.2 609.7 398.1 615 399C620.3 399.9 625.3 402.8 632 403C638.7 403.2 651.2 400.5 655 400M587.5 415C589.6 413.3 595.8 407.1 600 405C604.2 402.9 610.4 402.9 612.5 402.5M595 537.5C595.8 536.2 596.7 532.1 600 530C603.3 527.9 610 525 615 525C620 525 626.7 527.5 630 530C633.3 532.5 634.2 538.3 635 540M587.5 520C588.8 517.1 591.2 506.7 595 502.5C598.8 498.3 605 496.2 610 495C615 493.8 622.5 495 625 495M622.5 520C622.9 517.9 622.1 510.8 625 507.5C627.9 504.2 637.5 501.2 640 500M506 556C507.9 554.2 513.5 548.5 517.5 545C521.5 541.5 526.2 537.3 530 535C533.8 532.7 535.8 531.4 540 531C544.2 530.6 550 532.7 555 532.5C560 532.3 565.4 531.2 570 530C574.6 528.8 579.2 527.9 582.5 525C585.8 522.1 587.5 516.7 590 512.5C592.5 508.3 596.2 502.1 597.5 500M575 552.5C577.5 551.7 586.7 550 590 547.5C593.3 545 593.3 540.4 595 537.5C596.7 534.6 597.1 531.7 600 530C602.9 528.3 608.8 527.1 612.5 527.5C616.2 527.9 619.2 530 622.5 532.5C625.8 535 628.8 538.9 632.5 542.5C636.2 546.1 642.9 552.1 645 554M655 400C654.8 404.2 654.4 416.7 654 425C653.6 433.3 652.7 441.7 652.5 450C652.3 458.3 653.1 467.5 653 475C652.9 482.5 653.3 490 652 495C650.7 500 646.2 503.3 645 505M675 422.5C675.4 425 675.8 432.9 677.5 437.5C679.2 442.1 682.5 445.8 685 450C687.5 454.2 690 458.3 692.5 462.5C695 466.7 696.7 470 700 475C703.3 480 710 486.7 712.5 492.5C715 498.3 713.8 503.8 715 510C716.2 516.2 718.8 523.3 720 530C721.2 536.7 721.8 541.7 722.5 550C723.2 558.3 723.1 571.7 724 580C724.9 588.3 727.3 596.7 728 600M620 494C624.2 494.2 636.7 494.8 645 495C653.3 495.2 660.4 495.2 670 495C679.6 494.8 692.1 494.2 702.5 494C712.9 493.8 722.9 493.4 732.5 494C742.1 494.6 752.1 497.2 760 497.5C767.9 497.8 774.2 497.2 780 496C785.8 494.8 790.8 492.2 795 490C799.2 487.8 803.3 483.8 805 482.5M732.5 400C734.2 402.1 740 408.3 742.5 412.5C745 416.7 747.9 420.4 747.5 425C747.1 429.6 740.8 435.8 740 440C739.2 444.2 740.8 445.4 742.5 450C744.2 454.6 750.4 462.1 750 467.5C749.6 472.9 742.9 478.1 740 482.5C737.1 486.9 733.8 492.1 732.5 494M740 440C743.3 439.6 753.3 436.7 760 437.5C766.7 438.3 774.6 441.7 780 445C785.4 448.3 788.8 452.9 792.5 457.5C796.2 462.1 800.4 467.9 802.5 472.5C804.6 477.1 804.4 480.4 805 485C805.6 489.6 806.8 494.6 806 500C805.2 505.4 802.2 512.5 800 517.5C797.8 522.5 793.3 524.6 792.5 530C791.7 535.4 793.8 542.5 795 550C796.2 557.5 799.2 570.8 800 575M692.5 462.5C694.2 460.8 697.9 455.4 702.5 452.5C707.1 449.6 713.8 447.1 720 445C726.2 442.9 736.7 440.8 740 440M720 400C721.2 400.8 724.9 405 727 405C729.1 405 731.6 400.8 732.5 400M705 264C704.2 261.7 701 255.3 700 250C699 244.7 699 237.8 699 232C699 226.2 699.8 221.2 700 215C700.2 208.8 699.7 201.7 700 195C700.3 188.3 701.2 180.8 702 175C702.8 169.2 702.8 165 705 160C707.2 155 711.2 149.5 715 145C718.8 140.5 724.3 136 728 133C731.7 130 734.2 128.8 737 127C739.8 125.2 741.7 123.5 745 122C748.3 120.5 752.8 118.8 757 118C761.2 117.2 765.3 116.8 770 117C774.7 117.2 780 119.5 785 119C790 118.5 795 115.3 800 114C805 112.7 812.5 111.5 815 111M705 264C706.2 265.8 710.2 270.7 712 275C713.8 279.3 715.3 287.5 716 290M600 296C602 296.2 607.8 296.3 612 297C616.2 297.7 620.3 300.2 625 300C629.7 299.8 635 297.3 640 296C645 294.7 650.3 293 655 292C659.7 291 663.8 290 668 290C672.2 290 676.3 291 680 292C683.7 293 688.3 295.3 690 296M668 306C669.2 308 673 314 675 318C677 322 677.5 325.5 680 330C682.5 334.5 686.7 341.3 690 345C693.3 348.7 698.3 350.8 700 352M640 318C640.3 320 640.3 326.3 642 330C643.7 333.7 646.7 337.5 650 340C653.3 342.5 658.7 342.5 662 345C665.3 347.5 668.3 350.8 670 355C671.7 359.2 672.3 365 672 370C671.7 375 670 380.8 668 385C666 389.2 662.2 392.5 660 395C657.8 397.5 655.8 399.2 655 400M690 296C692 296.7 697.8 300 702 300C706.2 300 711.7 297.7 715 296C718.3 294.3 720.8 291 722 290M672 370C674.2 370.3 680.3 372.3 685 372C689.7 371.7 695.5 368 700 368C704.5 368 710 371.3 712 372M618 334C618.7 335.8 620.3 341.5 622 345C623.7 348.5 626.3 350.8 628 355C629.7 359.2 630 365.8 632 370C634 374.2 636.7 377.3 640 380C643.3 382.7 650 385 652 386M633 395C635 395.5 640.5 397.2 645 398C649.5 398.8 654.2 399.5 660 400C665.8 400.5 673.3 400.7 680 401C686.7 401.3 693.3 402.2 700 402C706.7 401.8 716.7 400.3 720 400M676 255C675.3 256.2 673 259.2 672 262C671 264.8 670 268.7 670 272C670 275.3 670.7 279 672 282C673.3 285 677 288.7 678 290M524 110C523.8 112.5 523 120 522.5 125C522 130 522.1 135.4 521 140C519.9 144.6 517.2 148.3 516 152.5C514.8 156.7 514.2 160.4 514 165C513.8 169.6 514 175 515 180C516 185 518.3 190.8 520 195C521.7 199.2 522.9 200.4 525 205C527.1 209.6 530.7 216.7 532.5 222.5C534.3 228.3 535.2 235.4 536 240C536.8 244.6 535.6 246.7 537.5 250C539.4 253.3 545.8 258.3 547.5 260M525 205C526.2 203.3 529.6 197.9 532.5 195C535.4 192.1 539.6 189.3 542.5 187.5C545.4 185.7 546.2 185.1 550 184C553.8 182.9 560.8 182.7 565 181C569.2 179.3 573.3 175.2 575 174M525 190C524.2 191.7 522.5 195.8 520 200C517.5 204.2 512.9 210.4 510 215C507.1 219.6 505.4 223.8 502.5 227.5C499.6 231.2 496.2 234.2 492.5 237.5C488.8 240.8 484.6 245.4 480 247.5C475.4 249.6 470 248.6 465 250C460 251.4 454.2 254 450 256C445.8 258 441.7 261 440 262M338 457C338.4 455 338.9 449.7 340.7 445C342.5 440.3 346 433.8 348.7 429C351.4 424.2 354.5 419.1 356.7 416C358.9 412.9 359.3 412.5 362 410.7C364.7 408.9 366.9 406.6 372.7 405.3C378.5 404 389.1 402.2 396.7 402.7C404.2 403.1 414.4 407.1 418 408" fill="none" stroke="#fff" stroke-width="2.2" stroke-linecap="round" stroke-linejoin="round" stroke-opacity=".7"/>
<path d="M225 140C227.5 142.5 234.8 150 240 155C245.2 160 252.2 165.4 256 170C259.8 174.6 260.8 178.3 262.5 182.5C264.2 186.7 264.6 190.4 266 195C267.4 199.6 268.5 205 271 210C273.5 215 279 220 281 225C283 230 282.8 234.2 283 240C283.2 245.8 282 252.5 282 260C282 267.5 282.5 277.9 283 285C283.5 292.1 282.6 297.3 285 302.5C287.4 307.7 293.3 312.4 297.5 316C301.7 319.6 304.6 321.5 310 324C315.4 326.5 324.6 329 330 331C335.4 333 340.7 334.1 342.5 336C344.3 337.9 342.2 340.2 341 342.5C339.8 344.8 336.2 346.2 335 350C333.8 353.8 333.6 361 334 365C334.4 369 334 371.5 337.5 374C341 376.5 350 377.8 355 380C360 382.2 364.3 384.2 367.5 387.5C370.7 390.8 371.1 396.7 374 400C376.9 403.3 380.7 406.2 385 407.5C389.3 408.8 395 408.1 400 407.5C405 406.9 412.5 404.6 415 404M256 170C258.8 169.2 265.2 166.2 272.5 165C279.8 163.8 291.7 162.9 300 163C308.3 163.1 315.4 165.5 322.5 165.5C329.6 165.5 333.3 164.6 342.5 163C351.7 161.4 370.4 157.5 377.5 156C384.6 154.5 383.8 154.3 385 154M380 111C380.2 113.3 380.3 118.9 381 125C381.7 131.1 382.9 142.1 384 147.5C385.1 152.9 384.8 153.8 387.5 157.5C390.2 161.2 396.7 166.7 400 170C403.3 173.3 405.7 175 407.5 177.5C409.3 180 408.5 181.7 411 185C413.5 188.3 419.3 193.8 422.5 197.5C425.7 201.2 427.5 204.6 430 207.5C432.5 210.4 435.4 211.7 437.5 215C439.6 218.3 439.6 224.2 442.5 227.5C445.4 230.8 451.2 231.2 455 235C458.8 238.8 461.7 245.5 465 250C468.3 254.5 471.7 261.2 475 262C478.3 262.8 483.3 256.2 485 255M409.5 360C409.8 362.9 410.1 372.5 411 377.5C411.9 382.5 413.7 385.8 415 390C416.3 394.2 418.2 399.2 419 402.5C419.8 405.8 420.7 407.1 420 410C419.3 412.9 416.8 417.1 415 420C413.2 422.9 410.2 424.2 409 427.5C407.8 430.8 407.2 434.2 407.5 440C407.8 445.8 409.8 455.8 411 462.5C412.2 469.2 412.7 474.6 415 480C417.3 485.4 422.1 490.4 425 495C427.9 499.6 430.4 503.3 432.5 507.5C434.6 511.7 436.2 514.6 437.5 520C438.8 525.4 439.4 534.2 440 540C440.6 545.8 439.3 547.5 441 555C442.7 562.5 446 578.3 450 585C454 591.7 462.5 593.3 465 595M410 362.5C412.5 362.9 419.6 363.6 425 365C430.4 366.4 438.2 368.9 442.5 371C446.8 373.1 449.1 376 451 377.5C452.9 379 451.7 379.6 454 380C456.3 380.4 463.2 380 465 380M485 255C486.7 254.6 491.7 250.8 495 252.5C498.3 254.2 500 263.1 505 265C510 266.9 517.9 263.8 525 264C532.1 264.2 543.5 264.2 547.5 266C551.5 267.8 549 270.6 549 275C549 279.4 549.4 287.1 547.5 292.5C545.6 297.9 541.2 303.3 537.5 307.5C533.8 311.7 529.6 315.8 525 317.5C520.4 319.2 515 318.1 510 317.5C505 316.9 497.5 314.6 495 314M400 444C402.1 442.1 408.3 436.5 412.5 432.5C416.7 428.5 419.6 423.1 425 420C430.4 416.9 438.8 415.5 445 414C451.2 412.5 455.8 411.8 462.5 411C469.2 410.2 477.9 410.4 485 409C492.1 407.6 499.2 404 505 402.5C510.8 401 514.2 400.8 520 400C525.8 399.2 535 399.2 540 397.5C545 395.8 547.3 392.9 550 390C552.7 387.1 555 381.7 556 380M590 422.5C592.9 422.8 602.9 424.2 607.5 424C612.1 423.8 615.8 421.5 617.5 421M626 600C626.2 597.1 626.7 588.8 627.5 582.5C628.3 576.2 629.9 568.8 631 562.5C632.1 556.2 635 550.4 634 545C633 539.6 626.9 534.2 625 530C623.1 525.8 622.1 523.3 622.5 520C622.9 516.7 625.4 512.9 627.5 510C629.6 507.1 633.8 503.8 635 502.5M750 467.5C752.1 466.9 758.3 464 762.5 464C766.7 464 770.4 464.8 775 467.5C779.6 470.2 785.8 476.2 790 480C794.2 483.8 798.3 488.3 800 490M566 111C566.2 113.3 566.3 120.2 567 125C567.7 129.8 568.8 135 570 140C571.2 145 572.3 150.3 574 155C575.7 159.7 577 164.7 580 168C583 171.3 587.8 173 592 175C596.2 177 601.2 177.8 605 180C608.8 182.2 612.5 185 615 188C617.5 191 618.8 194.3 620 198C621.2 201.7 622.3 206 622 210C621.7 214 619.7 218.3 618 222C616.3 225.7 613 230.3 612 232M576 400C578.3 399.7 585.2 399.3 590 398C594.8 396.7 600.3 394.2 605 392C609.7 389.8 615.8 386.2 618 385M695 300C695.8 302 698.3 307.8 700 312C701.7 316.2 703 321.2 705 325C707 328.8 710.8 333.3 712 335M700 352C701 353.7 704 358.7 706 362C708 365.3 710.3 368.2 712 372C713.7 375.8 715.3 382.8 716 385M720 262C721 263.3 724.3 266.7 726 270C727.7 273.3 729.7 277.8 730 282C730.3 286.2 729.3 291.2 728 295C726.7 298.8 723 303.3 722 305M375 400C377.7 401.3 385.2 405.3 391 408C396.8 410.7 405.5 413.8 410 416C414.5 418.2 416.7 420.2 418 421M418 434.7C416.7 435.6 414 437.8 410 440C406 442.2 398.5 445.2 394 448C389.5 450.8 386.6 453.9 383 457C379.4 460.1 374.4 465.1 372.7 466.7" fill="none" stroke="#f3d36c" stroke-width="1.2" stroke-linecap="round" stroke-linejoin="round" />
<path d="M342 164C342.1 165.4 341.2 169.8 342.5 172.5C343.8 175.2 345.8 178.3 350 180C354.2 181.7 361.7 182 367.5 182.5C373.3 183 379.6 183 385 183C390.4 183 395 181.5 400 182.5C405 183.5 410.8 186.8 415 189C419.2 191.2 421.2 194.2 425 196C428.8 197.8 430.8 199.2 437.5 199.5C444.2 199.8 456.2 197.9 465 198C473.8 198.1 482.5 199 490 200C497.5 201 504.8 203.5 510 204C515.2 204.5 519.2 203.2 521 203M364 337.5C364.3 338.3 364.6 341.2 366 342.5C367.4 343.8 370.2 342.1 372.5 345C374.8 347.9 377.1 355.8 380 360C382.9 364.2 385.8 366.7 390 370C394.2 373.3 401.3 377.3 405 380C408.7 382.7 409.7 383.7 412 386C414.3 388.3 417.7 391.7 419 394C420.3 396.3 419.8 399 420 400M465 382.5C462.5 384.2 455 388.3 450 392.5C445 396.7 437.5 405 435 407.5M475 250C475 252.5 474.6 260 475 265C475.4 270 475.4 275 477.5 280C479.6 285 485.2 289.6 487.5 295C489.8 300.4 490.2 306.7 491 312.5C491.8 318.3 491.8 324.6 492.5 330C493.2 335.4 492.9 339.6 495 345C497.1 350.4 501.7 357.5 505 362.5C508.3 367.5 512.7 372.1 515 375C517.3 377.9 517.8 377.5 519 380C520.2 382.5 522.2 386.7 522.5 390C522.8 393.3 520.6 396.7 521 400C521.4 403.3 522.8 406.2 525 410C527.2 413.8 532.5 420.4 534 422.5M400 386C403.3 385.8 413.8 386 420 385C426.2 384 432.1 380.7 437.5 380C442.9 379.3 446.7 381.1 452.5 381C458.3 380.9 465.4 379.8 472.5 379.5C479.6 379.2 487.5 378.9 495 379C502.5 379.1 510.8 380.5 517.5 380C524.2 379.5 529.6 377.7 535 376C540.4 374.3 545.8 372.7 550 370C554.2 367.3 557.7 364.2 560 360C562.3 355.8 563.2 350.8 564 345C564.8 339.2 564.4 332.5 565 325C565.6 317.5 566.7 305.8 567.5 300C568.3 294.2 568.8 292.1 570 290C571.2 287.9 572.5 287.5 575 287.5C577.5 287.5 580.8 288.6 585 290C589.2 291.4 595 294.3 600 296C605 297.7 612.5 299.3 615 300M546 250C546.7 252.1 547.7 257.5 550 262.5C552.3 267.5 556.7 275.4 560 280C563.3 284.6 568.3 288.3 570 290M550 267.5C553.3 268.3 563.8 271.4 570 272.5C576.2 273.6 584.6 273.8 587.5 274M400 376 L412.5 384M565 337.5C567.5 337.5 575.8 337.8 580 337.5C584.2 337.2 585.8 335.9 590 336C594.2 336.1 600.3 338.3 605 338C609.7 337.7 613.8 336.2 618 334C622.2 331.8 626.3 327.7 630 325C633.7 322.3 635.8 320.2 640 318C644.2 315.8 650.3 314 655 312C659.7 310 665.8 307 668 306M560 360C560.8 362.5 562.5 371.7 565 375C567.5 378.3 571.7 377.5 575 380C578.3 382.5 582.5 386.7 585 390C587.5 393.3 590.2 395.8 590 400C589.8 404.2 584.8 408.3 584 415C583.2 421.7 585.7 433.8 585 440C584.3 446.2 580.8 450.4 580 452.5M517.5 380 L520 390M411 490C414.2 490.2 423.5 490.6 430 491C436.5 491.4 442.5 493.1 450 492.5C457.5 491.9 468.3 489.6 475 487.5C481.7 485.4 486.2 483.3 490 480C493.8 476.7 494.6 471.2 497.5 467.5C500.4 463.8 503.8 461.2 507.5 457.5C511.2 453.8 516.7 448.8 520 445C523.3 441.2 525.2 438.8 527.5 435C529.8 431.2 531.9 423.3 534 422.5C536.1 421.7 537.8 425.8 540 430C542.2 434.2 545.8 441.7 547.5 447.5C549.2 453.3 550 460 550 465C550 470 549 473.3 547.5 477.5C546 481.7 541.8 486.2 541 490C540.2 493.8 541 495.8 542.5 500C544 504.2 547.1 510 550 515C552.9 520 557.5 526.2 560 530C562.5 533.8 562.5 533.8 565 537.5C567.5 541.2 570.8 544.6 575 552.5C579.2 560.4 585.8 577.1 590 585C594.2 592.9 598.3 597.5 600 600M489 410C489.6 412.1 491.7 417.5 492.5 422.5C493.3 427.5 492.8 435 494 440C495.2 445 497.5 448.3 500 452.5C502.5 456.7 507.5 462.9 509 465M415 390C415.7 391.7 416.1 396.8 419 400C421.9 403.2 428.2 409 432.5 409C436.8 409 440.8 403.2 445 400C449.2 396.8 455.4 391.7 457.5 390M547.5 447.5C549.6 448.3 554.6 451.7 560 452.5C565.4 453.3 576.7 452.5 580 452.5M580 452.5C580.2 455.8 579.3 467.1 581 472.5C582.7 477.9 585.6 481.7 590 485C594.4 488.3 601.7 490.8 607.5 492.5C613.3 494.2 619.6 493.8 625 495C630.4 496.2 637.5 499.2 640 500M550 401C552.5 400.8 559.2 400 565 400C570.8 400 579.2 401.4 585 401C590.8 400.6 595 397.8 600 397.5C605 397.2 609.7 398.1 615 399C620.3 399.9 625.3 402.8 632 403C638.7 403.2 651.2 400.5 655 400M587.5 415C589.6 413.3 595.8 407.1 600 405C604.2 402.9 610.4 402.9 612.5 402.5M595 537.5C595.8 536.2 596.7 532.1 600 530C603.3 527.9 610 525 615 525C620 525 626.7 527.5 630 530C633.3 532.5 634.2 538.3 635 540M587.5 520C588.8 517.1 591.2 506.7 595 502.5C598.8 498.3 605 496.2 610 495C615 493.8 622.5 495 625 495M622.5 520C622.9 517.9 622.1 510.8 625 507.5C627.9 504.2 637.5 501.2 640 500M506 556C507.9 554.2 513.5 548.5 517.5 545C521.5 541.5 526.2 537.3 530 535C533.8 532.7 535.8 531.4 540 531C544.2 530.6 550 532.7 555 532.5C560 532.3 565.4 531.2 570 530C574.6 528.8 579.2 527.9 582.5 525C585.8 522.1 587.5 516.7 590 512.5C592.5 508.3 596.2 502.1 597.5 500M575 552.5C577.5 551.7 586.7 550 590 547.5C593.3 545 593.3 540.4 595 537.5C596.7 534.6 597.1 531.7 600 530C602.9 528.3 608.8 527.1 612.5 527.5C616.2 527.9 619.2 530 622.5 532.5C625.8 535 628.8 538.9 632.5 542.5C636.2 546.1 642.9 552.1 645 554M655 400C654.8 404.2 654.4 416.7 654 425C653.6 433.3 652.7 441.7 652.5 450C652.3 458.3 653.1 467.5 653 475C652.9 482.5 653.3 490 652 495C650.7 500 646.2 503.3 645 505M675 422.5C675.4 425 675.8 432.9 677.5 437.5C679.2 442.1 682.5 445.8 685 450C687.5 454.2 690 458.3 692.5 462.5C695 466.7 696.7 470 700 475C703.3 480 710 486.7 712.5 492.5C715 498.3 713.8 503.8 715 510C716.2 516.2 718.8 523.3 720 530C721.2 536.7 721.8 541.7 722.5 550C723.2 558.3 723.1 571.7 724 580C724.9 588.3 727.3 596.7 728 600M620 494C624.2 494.2 636.7 494.8 645 495C653.3 495.2 660.4 495.2 670 495C679.6 494.8 692.1 494.2 702.5 494C712.9 493.8 722.9 493.4 732.5 494C742.1 494.6 752.1 497.2 760 497.5C767.9 497.8 774.2 497.2 780 496C785.8 494.8 790.8 492.2 795 490C799.2 487.8 803.3 483.8 805 482.5M732.5 400C734.2 402.1 740 408.3 742.5 412.5C745 416.7 747.9 420.4 747.5 425C747.1 429.6 740.8 435.8 740 440C739.2 444.2 740.8 445.4 742.5 450C744.2 454.6 750.4 462.1 750 467.5C749.6 472.9 742.9 478.1 740 482.5C737.1 486.9 733.8 492.1 732.5 494M740 440C743.3 439.6 753.3 436.7 760 437.5C766.7 438.3 774.6 441.7 780 445C785.4 448.3 788.8 452.9 792.5 457.5C796.2 462.1 800.4 467.9 802.5 472.5C804.6 477.1 804.4 480.4 805 485C805.6 489.6 806.8 494.6 806 500C805.2 505.4 802.2 512.5 800 517.5C797.8 522.5 793.3 524.6 792.5 530C791.7 535.4 793.8 542.5 795 550C796.2 557.5 799.2 570.8 800 575M692.5 462.5C694.2 460.8 697.9 455.4 702.5 452.5C707.1 449.6 713.8 447.1 720 445C726.2 442.9 736.7 440.8 740 440M720 400C721.2 400.8 724.9 405 727 405C729.1 405 731.6 400.8 732.5 400M705 264C704.2 261.7 701 255.3 700 250C699 244.7 699 237.8 699 232C699 226.2 699.8 221.2 700 215C700.2 208.8 699.7 201.7 700 195C700.3 188.3 701.2 180.8 702 175C702.8 169.2 702.8 165 705 160C707.2 155 711.2 149.5 715 145C718.8 140.5 724.3 136 728 133C731.7 130 734.2 128.8 737 127C739.8 125.2 741.7 123.5 745 122C748.3 120.5 752.8 118.8 757 118C761.2 117.2 765.3 116.8 770 117C774.7 117.2 780 119.5 785 119C790 118.5 795 115.3 800 114C805 112.7 812.5 111.5 815 111M705 264C706.2 265.8 710.2 270.7 712 275C713.8 279.3 715.3 287.5 716 290M600 296C602 296.2 607.8 296.3 612 297C616.2 297.7 620.3 300.2 625 300C629.7 299.8 635 297.3 640 296C645 294.7 650.3 293 655 292C659.7 291 663.8 290 668 290C672.2 290 676.3 291 680 292C683.7 293 688.3 295.3 690 296M668 306C669.2 308 673 314 675 318C677 322 677.5 325.5 680 330C682.5 334.5 686.7 341.3 690 345C693.3 348.7 698.3 350.8 700 352M640 318C640.3 320 640.3 326.3 642 330C643.7 333.7 646.7 337.5 650 340C653.3 342.5 658.7 342.5 662 345C665.3 347.5 668.3 350.8 670 355C671.7 359.2 672.3 365 672 370C671.7 375 670 380.8 668 385C666 389.2 662.2 392.5 660 395C657.8 397.5 655.8 399.2 655 400M690 296C692 296.7 697.8 300 702 300C706.2 300 711.7 297.7 715 296C718.3 294.3 720.8 291 722 290M672 370C674.2 370.3 680.3 372.3 685 372C689.7 371.7 695.5 368 700 368C704.5 368 710 371.3 712 372M618 334C618.7 335.8 620.3 341.5 622 345C623.7 348.5 626.3 350.8 628 355C629.7 359.2 630 365.8 632 370C634 374.2 636.7 377.3 640 380C643.3 382.7 650 385 652 386M633 395C635 395.5 640.5 397.2 645 398C649.5 398.8 654.2 399.5 660 400C665.8 400.5 673.3 400.7 680 401C686.7 401.3 693.3 402.2 700 402C706.7 401.8 716.7 400.3 720 400M676 255C675.3 256.2 673 259.2 672 262C671 264.8 670 268.7 670 272C670 275.3 670.7 279 672 282C673.3 285 677 288.7 678 290M524 110C523.8 112.5 523 120 522.5 125C522 130 522.1 135.4 521 140C519.9 144.6 517.2 148.3 516 152.5C514.8 156.7 514.2 160.4 514 165C513.8 169.6 514 175 515 180C516 185 518.3 190.8 520 195C521.7 199.2 522.9 200.4 525 205C527.1 209.6 530.7 216.7 532.5 222.5C534.3 228.3 535.2 235.4 536 240C536.8 244.6 535.6 246.7 537.5 250C539.4 253.3 545.8 258.3 547.5 260M525 205C526.2 203.3 529.6 197.9 532.5 195C535.4 192.1 539.6 189.3 542.5 187.5C545.4 185.7 546.2 185.1 550 184C553.8 182.9 560.8 182.7 565 181C569.2 179.3 573.3 175.2 575 174M525 190C524.2 191.7 522.5 195.8 520 200C517.5 204.2 512.9 210.4 510 215C507.1 219.6 505.4 223.8 502.5 227.5C499.6 231.2 496.2 234.2 492.5 237.5C488.8 240.8 484.6 245.4 480 247.5C475.4 249.6 470 248.6 465 250C460 251.4 454.2 254 450 256C445.8 258 441.7 261 440 262M338 457C338.4 455 338.9 449.7 340.7 445C342.5 440.3 346 433.8 348.7 429C351.4 424.2 354.5 419.1 356.7 416C358.9 412.9 359.3 412.5 362 410.7C364.7 408.9 366.9 406.6 372.7 405.3C378.5 404 389.1 402.2 396.7 402.7C404.2 403.1 414.4 407.1 418 408" fill="none" stroke="#fba25e" stroke-width="1.25" stroke-linecap="round" stroke-linejoin="round" />
<path d="M631.9 228.1 L636.2 231.2 L644.4 240.6 L655 239.4 L662.5 243.8 L670 248.8 L675 253.8 L686 246 L698 238 L702.5 237.5 L710 236.2 L713.1 243.8 L712.5 248 L716 257 L721.2 266.9 L726.2 273.8 L727.5 281.2 L725.6 291.2 L725 296 L721 308 L716 318 L711.9 326.2 L710 331.2 L707.5 336.2 L708.8 340 L712 348 L716 356 L720 362.5 L724.4 366.9 L723.8 370.6 L721.2 371.9 L723.8 376.2 L721.2 381.2 L717.5 385 L715 388.8 L717.5 393.8 L718.8 398.8 L721.2 402.5 L721.9 410 L721.2 420 L701.9 420 L701.9 439.5 L692.5 435 L691.2 427.5 L686.9 425 L685 420 L680 420.6 L675 426.2 L667.5 428.8 L660 430 L645 432 L632.5 427.5 L625 420 L618 414.5 L626 405 L633 395 L632.5 390 L630 380 L629.4 367.5 L629 358 L618.8 356.2 L612.5 354.4 L616.2 348.8 L618.1 342.5 L607.5 339.4 L597.5 340 L592 332 L588.1 324.4 L584.4 319.4 L583.8 311.2 L585.6 302.5 L586.9 290 L586.2 287.5 L586.9 277.5 L595 270.6 L601 263 L607 255 L608.1 251.9 L606.9 244.4 L615 236.2 L622.5 234.4Z" fill="#f08a8a" fill-opacity=".5" stroke="#ee1c25" stroke-width="1.3" stroke-linejoin="round"/>
<g font-family="'Liberation Sans',sans-serif" stroke="#fff" stroke-width="1.6" stroke-linejoin="round" paint-order="stroke" style="paint-order:stroke">
<text x="267.7" y="166" font-size="8" fill="#555" textLength="33.3" lengthAdjust="spacingAndGlyphs">Bukit Rotan</text>
<text x="378" y="160.5" font-size="8.5" fill="#444" textLength="11" lengthAdjust="spacingAndGlyphs">Ijok</text>
<text x="441.4" y="163.5" font-size="8.5" fill="#444" textLength="36.6" lengthAdjust="spacingAndGlyphs">Batu Arang</text>
<text x="533.6" y="127" font-size="8.5" fill="#444" textLength="40.9" lengthAdjust="spacingAndGlyphs">Sungai Choh</text>
<text x="533" y="153.7" font-size="8.5" fill="#444" textLength="25" lengthAdjust="spacingAndGlyphs">Rawang</text>
<text x="471" y="191.3" font-size="8.5" fill="#444" textLength="28.5" lengthAdjust="spacingAndGlyphs">Kundang</text>
<text x="512" y="219.2" font-size="8.5" fill="#444" textLength="20.5" lengthAdjust="spacingAndGlyphs">Kuang</text>
<text x="372" y="238.3" font-size="8.5" fill="#444" textLength="42" lengthAdjust="spacingAndGlyphs">Puncak Alam</text>
<text x="607.5" y="216.3" font-size="9.5" fill="#1a1a1a" textLength="34.5" lengthAdjust="spacingAndGlyphs">Selayang</text>
<text x="607.5" y="216.3" font-size="9.5" fill="#1a1a1a" stroke="#1a1a1a" stroke-width=".45" textLength="34.5" lengthAdjust="spacingAndGlyphs">Selayang</text>
<text x="635" y="236.5" font-size="8.5" fill="#444" textLength="37" lengthAdjust="spacingAndGlyphs">Batu Caves</text>
<text x="497.5" y="265" font-size="8.5" fill="#444" textLength="43.5" lengthAdjust="spacingAndGlyphs">Sungai Buloh</text>
<text x="581" y="269" font-size="8.5" fill="#444" textLength="25" lengthAdjust="spacingAndGlyphs">Kepong</text>
<text x="587" y="370.8" font-size="9.5" fill="#1a1a1a" textLength="55.5" lengthAdjust="spacingAndGlyphs">Petaling Jaya</text>
<text x="587" y="370.8" font-size="9.5" fill="#1a1a1a" stroke="#1a1a1a" stroke-width=".45" textLength="55.5" lengthAdjust="spacingAndGlyphs">Petaling Jaya</text>
<text x="700" y="346" font-size="9.5" fill="#1a1a1a" textLength="51.5" lengthAdjust="spacingAndGlyphs">Ampang Jaya</text>
<text x="700" y="346" font-size="9.5" fill="#1a1a1a" stroke="#1a1a1a" stroke-width=".45" textLength="51.5" lengthAdjust="spacingAndGlyphs">Ampang Jaya</text>
<text x="655" y="320" font-size="10.5" fill="#1a1a1a" textLength="57" lengthAdjust="spacingAndGlyphs">Kuala Lumpur</text>
<text x="655" y="320" font-size="10.5" fill="#1a1a1a" stroke="#1a1a1a" stroke-width=".45" textLength="57" lengthAdjust="spacingAndGlyphs">Kuala Lumpur</text>
<text x="714" y="265" font-size="8.5" fill="#444" textLength="33" lengthAdjust="spacingAndGlyphs">Hulu Klang</text>
<text x="462" y="409" font-size="11" fill="#1a1a1a" textLength="49.5" lengthAdjust="spacingAndGlyphs">Shah Alam</text>
<text x="462" y="409" font-size="11" fill="#1a1a1a" stroke="#1a1a1a" stroke-width=".45" textLength="49.5" lengthAdjust="spacingAndGlyphs">Shah Alam</text>
<text x="406.5" y="430.6" font-size="9.5" fill="#1a1a1a" textLength="21.5" lengthAdjust="spacingAndGlyphs">Klang</text>
<text x="406.5" y="430.6" font-size="9.5" fill="#1a1a1a" stroke="#1a1a1a" stroke-width=".45" textLength="21.5" lengthAdjust="spacingAndGlyphs">Klang</text>
<text x="531" y="420" font-size="9.5" fill="#1a1a1a" textLength="48" lengthAdjust="spacingAndGlyphs">Subang Jaya</text>
<text x="531" y="420" font-size="9.5" fill="#1a1a1a" stroke="#1a1a1a" stroke-width=".45" textLength="48" lengthAdjust="spacingAndGlyphs">Subang Jaya</text>
<text x="567.5" y="451.5" font-size="9.5" fill="#1a1a1a" textLength="31.5" lengthAdjust="spacingAndGlyphs">Puchong</text>
<text x="567.5" y="451.5" font-size="9.5" fill="#1a1a1a" stroke="#1a1a1a" stroke-width=".45" textLength="31.5" lengthAdjust="spacingAndGlyphs">Puchong</text>
<text x="347.5" y="474.5" font-size="8.5" fill="#444" textLength="36" lengthAdjust="spacingAndGlyphs">Port Klang</text>
<text x="694" y="448.5" font-size="8.5" fill="#444" textLength="30" lengthAdjust="spacingAndGlyphs">Balakong</text>
<text x="746" y="484.5" font-size="9.5" fill="#1a1a1a" textLength="26" lengthAdjust="spacingAndGlyphs">Kajang</text>
<text x="746" y="484.5" font-size="9.5" fill="#1a1a1a" stroke="#1a1a1a" stroke-width=".45" textLength="26" lengthAdjust="spacingAndGlyphs">Kajang</text>
<text x="739" y="463.8" font-size="8" fill="#444" textLength="44" lengthAdjust="spacingAndGlyphs">Saujana Impian</text>
<text x="799" y="529" font-size="8.5" fill="#444" textLength="30.5" lengthAdjust="spacingAndGlyphs">Semenyih</text>
<text x="602.5" y="553" font-size="8.5" fill="#444" textLength="31.5" lengthAdjust="spacingAndGlyphs">Cyberjaya</text>
<text x="623" y="572.5" font-size="11" fill="#1a1a1a" textLength="44.5" lengthAdjust="spacingAndGlyphs">Putrajaya</text>
<text x="623" y="572.5" font-size="11" fill="#1a1a1a" stroke="#1a1a1a" stroke-width=".45" textLength="44.5" lengthAdjust="spacingAndGlyphs">Putrajaya</text>
<text x="453" y="601" font-size="8.5" fill="#444" textLength="29" lengthAdjust="spacingAndGlyphs">Jenjarom</text>
<text x="740" y="513" font-size="8.5" fill="#444" textLength="23" lengthAdjust="spacingAndGlyphs">Bandar</text>
<text x="734" y="521.5" font-size="8.5" fill="#444" textLength="37" lengthAdjust="spacingAndGlyphs">Baru Bangi</text>
<text x="770" y="358" font-size="7.5" fill="#444" textLength="33" lengthAdjust="spacingAndGlyphs">Batu 14 Hulu</text>
<text x="778" y="366" font-size="7.5" fill="#444" textLength="18" lengthAdjust="spacingAndGlyphs">Langat</text>
</g>
<g font-family="'Liberation Sans',sans-serif" text-anchor="middle" letter-spacing="1.1" stroke="#fff" stroke-opacity=".6" stroke-width="1" style="paint-order:stroke">
<text x="444" y="186" font-size="5.6" fill="#9a9bc0">BANDAR TASIK</text>
<text x="444" y="192.5" font-size="5.6" fill="#9a9bc0">PUTERI</text>
<text x="342" y="336" font-size="5.6" fill="#9a9bc0">KAPAR</text>
<text x="409" y="336" font-size="5.6" fill="#9a9bc0">MERU</text>
<text x="555.5" y="301" font-size="5.6" fill="#9a9bc0">KOTA</text>
<text x="555" y="308" font-size="5.6" fill="#9a9bc0">DAMANSARA</text>
<text x="500" y="324.5" font-size="5.6" fill="#9a9bc0">SUBANG</text>
<text x="507.5" y="369" font-size="5.6" fill="#9a9bc0">BUKIT</text>
<text x="507.5" y="375.5" font-size="5.6" fill="#9a9bc0">JELUTONG</text>
<text x="461" y="422.5" font-size="5.6" fill="#9a9bc0">PADANG</text>
<text x="461" y="429" font-size="5.6" fill="#9a9bc0">JAWA</text>
<text x="352" y="435.5" font-size="5.6" fill="#9a9bc0">BANDAR</text>
<text x="352" y="442" font-size="5.6" fill="#9a9bc0">SULTAN</text>
<text x="351" y="448.5" font-size="5.6" fill="#9a9bc0">SULEIMAN</text>
<text x="536" y="477" font-size="5.6" fill="#9a9bc0">PUTRA</text>
<text x="536" y="484" font-size="5.6" fill="#9a9bc0">HEIGHTS</text>
<text x="615" y="431" font-size="5.6" fill="#9a9bc0">PUCHONG</text>
<text x="770" y="429.5" font-size="5.6" fill="#9a9bc0">BANDAR</text>
<text x="770" y="436.5" font-size="5.6" fill="#9a9bc0">SUNGAI LONG</text>
<text x="642.5" y="510" font-size="5.6" fill="#9a9bc0">PRESINCT</text>
<text x="642.5" y="516.5" font-size="5.6" fill="#9a9bc0">11</text>
<text x="737" y="546" font-size="5.6" fill="#9a9bc0">SEKSYEN 15</text>
<text x="820" y="542" font-size="5.6" fill="#9a9bc0">BANDAR</text>
<text x="820" y="549" font-size="5.6" fill="#9a9bc0">RINCHING</text>
<text x="639.5" y="344" font-size="5.6" fill="#9a86a8">BANGSAR</text>
<text x="687" y="374" font-size="5.6" fill="#9a86a8">CHERAS</text>
<text x="656" y="414.5" font-size="5.6" fill="#9a86a8">BUKIT</text>
<text x="656" y="421" font-size="5.6" fill="#9a86a8">JALIL</text>
<text x="680" y="287" font-size="5.6" fill="#9a86a8">SETAPAK</text>
<text x="628" y="251" font-size="5.6" fill="#9a86a8">KEPONG</text>
<text x="522" y="349.5" font-size="5.6" fill="#6a6fc0">S28</text>
<text x="457" y="555" font-size="5.6" fill="#9a9bc0">TELUK</text>
<text x="457" y="561.5" font-size="5.6" fill="#9a9bc0">PANGLIMA</text>
<text x="457" y="568" font-size="5.6" fill="#9a9bc0">GARANG</text>
</g>
<g font-family="'Liberation Sans',sans-serif" text-anchor="middle" font-size="4.6" font-weight="700" fill="#333">
<rect x="354.8" y="177.2" width="11.8" height="6.4" rx="1.2" fill="#fff" stroke="#555" stroke-width=".6"/><text x="360.7" y="182.1">E25</text>
<rect x="545.1" y="179.4" width="11.8" height="6.4" rx="1.2" fill="#fff" stroke="#555" stroke-width=".6"/><text x="551" y="184.3">E25</text>
<rect x="278.7" y="239.8" width="6.6" height="6.4" rx="1.2" fill="#fff" stroke="#555" stroke-width=".6"/><text x="282" y="244.7">5</text>
<rect x="472.1" y="244.8" width="11.8" height="6.4" rx="1.2" fill="#fff" stroke="#555" stroke-width=".6"/><text x="478" y="249.7">E35</text>
<rect x="535.4" y="239.8" width="9.2" height="6.4" rx="1.2" fill="#fff" stroke="#555" stroke-width=".6"/><text x="540" y="244.7">E1</text>
<rect x="297.7" y="316.3" width="6.6" height="6.4" rx="1.2" fill="#fff" stroke="#555" stroke-width=".6"/><text x="301" y="321.2">5</text>
<rect x="316.7" y="324.3" width="6.6" height="6.4" rx="1.2" fill="#fff" stroke="#555" stroke-width=".6"/><text x="320" y="329.2">5</text>
<rect x="472.4" y="376.3" width="9.2" height="6.4" rx="1.2" fill="#fff" stroke="#555" stroke-width=".6"/><text x="477" y="381.2">E1</text>
<rect x="420.1" y="403.3" width="11.8" height="6.4" rx="1.2" fill="#fff" stroke="#555" stroke-width=".6"/><text x="426" y="408.2">E30</text>
<rect x="486.4" y="473.8" width="9.2" height="6.4" rx="1.2" fill="#fff" stroke="#555" stroke-width=".6"/><text x="491" y="478.7">E5</text>
<rect x="432.2" y="511.8" width="6.6" height="6.4" rx="1.2" fill="#fff" stroke="#555" stroke-width=".6"/><text x="435.5" y="516.7">5</text>
<rect x="328.1" y="497.8" width="11.8" height="6.4" rx="1.2" fill="#fff" stroke="#555" stroke-width=".6"/><text x="334" y="502.7">181</text>
<rect x="263.6" y="533.8" width="14.4" height="6.4" rx="1.2" fill="#fff" stroke="#555" stroke-width=".6"/><text x="270.8" y="538.7">B148</text>
<rect x="775.4" y="113.8" width="9.2" height="6.4" rx="1.2" fill="#fff" stroke="#555" stroke-width=".6"/><text x="780" y="118.7">E8</text>
<rect x="737.4" y="128.3" width="9.2" height="6.4" rx="1.2" fill="#fff" stroke="#555" stroke-width=".6"/><text x="742" y="133.2">E8</text>
<rect x="697.4" y="167.8" width="9.2" height="6.4" rx="1.2" fill="#fff" stroke="#555" stroke-width=".6"/><text x="702" y="172.7">E8</text>
<rect x="780.1" y="445.8" width="11.8" height="6.4" rx="1.2" fill="#fff" stroke="#555" stroke-width=".6"/><text x="786" y="450.7">E18</text>
<rect x="777.1" y="496.3" width="11.8" height="6.4" rx="1.2" fill="#fff" stroke="#555" stroke-width=".6"/><text x="783" y="501.2">E18</text>
<rect x="648.1" y="473.3" width="11.8" height="6.4" rx="1.2" fill="#fff" stroke="#555" stroke-width=".6"/><text x="654" y="478.2">E20</text>
<rect x="841.1" y="529.8" width="11.8" height="6.4" rx="1.2" fill="#fff" stroke="#555" stroke-width=".6"/><text x="847" y="534.7">B34</text>
<rect x="751.4" y="385.5" width="14.4" height="6.4" rx="1.2" fill="#fff" stroke="#555" stroke-width=".6"/><text x="758.6" y="390.4">3210</text>
<rect x="694.4" y="386.8" width="9.2" height="6.4" rx="1.2" fill="#fff" stroke="#555" stroke-width=".6"/><text x="699" y="391.7">28</text>
<rect x="673.9" y="417.3" width="9.2" height="6.4" rx="1.2" fill="#fff" stroke="#555" stroke-width=".6"/><text x="678.5" y="422.2">E9</text>
<rect x="599.4" y="290.8" width="9.2" height="6.4" rx="1.2" fill="#fff" stroke="#555" stroke-width=".6"/><text x="604" y="295.7">E1</text>
<rect x="791.8" y="584.8" width="11.8" height="6.4" rx="1.2" fill="#fff" stroke="#555" stroke-width=".6"/><text x="797.7" y="589.7">E21</text>
<rect x="643.1" y="593.8" width="11.8" height="6.4" rx="1.2" fill="#fff" stroke="#555" stroke-width=".6"/><text x="649" y="598.7">E20</text>
</g>
<text x="522" y="344.5" font-size="7" fill="#5a62c8" text-anchor="middle" font-family="'DejaVu Sans',sans-serif">✈</text>
<text x="685.5" y="492.5" font-size="6.6" fill="#8a6f4c" text-anchor="middle" font-family="'Liberation Sans',sans-serif" stroke="#fff" stroke-opacity=".7" stroke-width="1" style="paint-order:stroke">University of</text>
<text x="685.5" y="500" font-size="6.6" fill="#8a6f4c" text-anchor="middle" font-family="'Liberation Sans',sans-serif" stroke="#fff" stroke-opacity=".7" stroke-width="1" style="paint-order:stroke">Putra Malaysia</text>
<text x="248.5" y="470" font-size="6.2" fill="#7a6a5a" font-family="'Liberation Sans',sans-serif" stroke="#fff" stroke-opacity=".7" stroke-width="1" style="paint-order:stroke" textLength="32.500" lengthAdjust="spacingAndGlyphs">Klang Island</text><circle cx="271.500" cy="461.500" r=".8" fill="#6a4a3a"/>
<defs>
<linearGradient id="mb" x1="0" y1="0" x2="1" y2="1"><stop offset="0" stop-color="#46a6e8"/><stop offset="1" stop-color="#2a88d8"/></linearGradient>
<linearGradient id="tk" x1="0" y1="0" x2="0" y2="1"><stop offset="0" stop-color="#4ab6ea"/><stop offset=".5" stop-color="#2aa0dc"/><stop offset="1" stop-color="#1c8cca"/></linearGradient>
<filter id="ms" x="-30%" y="-30%" width="160%" height="170%"><feGaussianBlur in="SourceAlpha" stdDeviation="1.2"/><feOffset dy="1"/><feComponentTransfer><feFuncA type="linear" slope=".35"/></feComponentTransfer><feMerge><feMergeNode/><feMergeNode in="SourceGraphic"/></feMerge></filter>
<g id="ic-users" fill="none" stroke="#fff" stroke-width="1.9" stroke-linecap="round" stroke-linejoin="round"><path d="M17 21v-2a4 4 0 0 0-4-4H5a4 4 0 0 0-4 4v2"/><circle cx="9" cy="7" r="4"/><path d="M23 21v-2a4 4 0 0 0-3-3.870"/><path d="M16 3.130a4 4 0 0 1 0 7.750"/></g>
<g id="ic-mon"><rect x="-5" y="-4.200" width="10" height="7" rx=".8" fill="#8fc8f0" stroke="#fff" stroke-width="1.100"/><path d="M-2.800 4.100h5.600" stroke="#fff" stroke-width="1.200" stroke-linecap="round"/></g>
<g id="ic-list"><rect x="-5" y="-4.200" width="10" height="7" rx=".8" fill="none" stroke="#fff" stroke-width="1.100"/><path d="M-3-2h.6M-1.500-2h4.500M-3-.1h.6M-1.500-.1h4.500M-2.800 4.100h5.600" stroke="#fff" stroke-width="1" stroke-linecap="round"/></g>
</defs>
<circle cx="598.1" cy="328.8" r="14.2" fill="none" stroke="#5ea9e2" stroke-opacity="0.5" stroke-width="3.6" stroke-dasharray="27.26 2.48" transform="rotate(275 598.1 328.8)"/><circle cx="598.1" cy="328.8" r="19.4" fill="none" stroke="#5ea9e2" stroke-opacity="0.38" stroke-width="3.6" stroke-dasharray="37.25 3.39" transform="rotate(275 598.1 328.8)"/><circle cx="598.1" cy="328.8" r="24.8" fill="none" stroke="#5ea9e2" stroke-opacity="0.28" stroke-width="3.6" stroke-dasharray="47.61 4.33" transform="rotate(275 598.1 328.8)"/><circle cx="598.1" cy="328.8" r="10.3" fill="#4fa3df"/><text x="598.1" y="331.5" font-family="'Liberation Sans',sans-serif" font-size="7.600" font-weight="700" fill="#fff" text-anchor="middle">10</text>
<circle cx="706" cy="408.5" r="14.2" fill="none" stroke="#5ea9e2" stroke-opacity="0.5" stroke-width="3.6" stroke-dasharray="27.26 2.48" transform="rotate(275 706 408.5)"/><circle cx="706" cy="408.5" r="19.4" fill="none" stroke="#5ea9e2" stroke-opacity="0.38" stroke-width="3.6" stroke-dasharray="37.25 3.39" transform="rotate(275 706 408.5)"/><circle cx="706" cy="408.5" r="24.8" fill="none" stroke="#5ea9e2" stroke-opacity="0.28" stroke-width="3.6" stroke-dasharray="47.61 4.33" transform="rotate(275 706 408.5)"/><circle cx="706" cy="408.5" r="10.1" fill="#4fa3df"/><text x="706" y="411.2" font-family="'Liberation Sans',sans-serif" font-size="7.600" font-weight="700" fill="#fff" text-anchor="middle">5</text>
<g transform="translate(625 256.5) rotate(-21)"><rect x="-3.400" y="-3.600" width="6" height="7.200" rx="1.800" fill="#2a2a2a"/><rect x="-1.800" y="-3.700" width="5" height="7.400" rx="1.400" fill="#9a9a9a"/><rect x="2.600" y="-4.300" width="21.500" height="8.600" rx="2.200" fill="url(#tk)" stroke="#1b6fa8" stroke-width=".35"/><path d="M6 -4v8M9 -4v8M12 -4v8M15 -4v8M18 -4v8M21 -4v8" stroke="#7cc8f0" stroke-width=".5" stroke-opacity=".7"/></g>
<g transform="translate(716 281) rotate(-25)"><rect x="-3.400" y="-3.600" width="6" height="7.200" rx="1.800" fill="#2a2a2a"/><rect x="-1.800" y="-3.700" width="5" height="7.400" rx="1.400" fill="#9a9a9a"/><rect x="2.600" y="-4.300" width="21.500" height="8.600" rx="2.200" fill="url(#tk)" stroke="#1b6fa8" stroke-width=".35"/><path d="M6 -4v8M9 -4v8M12 -4v8M15 -4v8M18 -4v8M21 -4v8" stroke="#7cc8f0" stroke-width=".5" stroke-opacity=".7"/></g>
<g transform="translate(600.5 308.5) rotate(23)"><rect x="-3.400" y="-3.600" width="6" height="7.200" rx="1.800" fill="#2a2a2a"/><rect x="-1.800" y="-3.700" width="5" height="7.400" rx="1.400" fill="#9a9a9a"/><rect x="2.600" y="-4.300" width="21.500" height="8.600" rx="2.200" fill="url(#tk)" stroke="#1b6fa8" stroke-width=".35"/><path d="M6 -4v8M9 -4v8M12 -4v8M15 -4v8M18 -4v8M21 -4v8" stroke="#7cc8f0" stroke-width=".5" stroke-opacity=".7"/></g>
<g transform="translate(618.5 427.5) rotate(-24)"><rect x="-3.400" y="-3.600" width="6" height="7.200" rx="1.800" fill="#2a2a2a"/><rect x="-1.800" y="-3.700" width="5" height="7.400" rx="1.400" fill="#9a9a9a"/><rect x="2.600" y="-4.300" width="21.500" height="8.600" rx="2.200" fill="url(#tk)" stroke="#1b6fa8" stroke-width=".35"/><path d="M6 -4v8M9 -4v8M12 -4v8M15 -4v8M18 -4v8M21 -4v8" stroke="#7cc8f0" stroke-width=".5" stroke-opacity=".7"/></g>
<g filter="url(#ms)"><circle cx="616.3" cy="293.1" r="10" fill="#fff"/></g><circle cx="616.3" cy="293.1" r="8.4" fill="#52d99a"/><g transform="translate(616.3 293.1)"><path d="M-1.500-4.500h3v.8h-.6v2.700l2.600 4.300c.3.600 0 1.200-.7 1.200h-5.600c-.7 0-1-.6-.7-1.200l2.600-4.300v-2.700h-.6z" fill="#fff"/></g>
<g filter="url(#ms)"><circle cx="661.9" cy="281.9" r="10" fill="#fff"/></g><circle cx="661.9" cy="281.9" r="8.4" fill="#e8c21c"/><g transform="translate(661.9 281.9)"><path d="M0-4.800l4 1.500v3c0 2.600-1.700 4.300-4 5.200-2.300-.9-4-2.600-4-5.200v-3z" fill="#fff"/><path d="M0-2.300l2.200 2v2.300h-4.400v-2.300z" fill="#e8c21c"/></g>
<g filter="url(#ms)"><circle cx="715.9" cy="256.9" r="10.3" fill="#fff"/></g><circle cx="715.9" cy="256.9" r="8.7" fill="#3f6fe0"/><g transform="translate(715.9 256.9)"><path d="M-3.600-4h4.600v8h-4.600z" fill="#fff"/><rect x="-2.700" y="-3.100" width="2.800" height="2.600" fill="#7ea2f0"/><path d="M1.600-2.600l1.600 1.400v4a.8.8 0 0 1-1.600 0v-1.800" fill="none" stroke="#fff" stroke-width=".8"/></g>
<g filter="url(#ms)"><circle cx="687.8" cy="330.2" r="10.3" fill="#fff"/></g><circle cx="687.8" cy="330.2" r="8.7" fill="#6bbf3b"/><g transform="translate(687.8 330.2)"><path d="M-.7-5h1.400v2.200c.9.600 1.300 1.400 1.300 2.500v4.600c0 .5-.3.700-.7.700h-2.600c-.4 0-.7-.2-.7-.7v-4.600c0-1.100.4-1.900 1.300-2.500z" fill="#fff"/></g>
<g filter="url(#ms)"><circle cx="710.9" cy="354.6" r="9.9" fill="#fff"/></g><circle cx="710.9" cy="354.6" r="8.3" fill="#e2572c"/><g transform="translate(710.9 354.6)"><path d="M-2-4.500h4v2.500h2.600v6.500h-9.200v-6.500h2.600z" fill="#fff"/><path d="M-3.500-.8h1.600v1.400h-1.600zM-.8-.8h1.600v1.400h-1.600zM1.900-.8h1.600v1.400h-1.600zM-3.500 1.800h1.600v1.400h-1.600zM1.900 1.800h1.600v1.400h-1.600zM-.8 2h1.600v2.500h-1.600zM-.4-3.700h.8v.6h.6v.8h-.6v.6h-.8v-.6h-.6v-.8h.6z" fill="#e2572c"/></g>
<g filter="url(#ms)"><circle cx="630" cy="356.9" r="9.8" fill="#fff"/></g><circle cx="630" cy="356.9" r="8.2" fill="#c050b8"/><g transform="translate(630 356.9)"><path d="M-4.600.2h5.400v2.600h-5.400z" fill="#fff"/><ellipse cx="-1.800" cy="-1.300" rx="2.900" ry="1.900" fill="#fff"/><path d="M1.300-1.400h2.200l1.400 1.700v2.500h-3.600z" fill="#fff"/><circle cx="-2.700" cy="3" r="1.200" fill="#fff" stroke="#c050b8" stroke-width=".5"/><circle cx="2.900" cy="3" r="1.200" fill="#fff" stroke="#c050b8" stroke-width=".5"/></g>
<g filter="url(#ms)"><path d="M679.1 253.1L693.5 253.1L686.3 265.6Z" fill="#0c2a6e"/><circle cx="686.3" cy="240.6" r="15.5" fill="#fff"/></g><circle cx="686.3" cy="240.6" r="13.5" fill="url(#mb)"/><use href="#ic-mon" transform="translate(686.3 240.6)"/>
<g filter="url(#ms)"><path d="M678.8 275.6L693.2 275.6L686 288.1Z" fill="#000"/><circle cx="686" cy="263.1" r="15.5" fill="#fff"/></g><circle cx="686" cy="263.1" r="13.5" fill="#000"/><use href="#ic-users" transform="translate(680 256.9) scale(.5)"/>
<g filter="url(#ms)"><path d="M604.1 281.9L618.5 281.9L611.3 294.4Z" fill="#0c2a6e"/><circle cx="611.3" cy="269.4" r="15.5" fill="#fff"/></g><circle cx="611.3" cy="269.4" r="13.5" fill="url(#mb)"/><use href="#ic-mon" transform="translate(611.3 269.4)"/>
<g filter="url(#ms)"><path d="M630 301L644.4 301L637.2 313.5Z" fill="#000"/><circle cx="637.2" cy="288.5" r="15.5" fill="#fff"/></g><circle cx="637.2" cy="288.5" r="13.5" fill="#000"/><use href="#ic-users" transform="translate(631.2 282.3) scale(.5)"/>
<g filter="url(#ms)"><path d="M707.6 316.9L722 316.9L714.8 329.4Z" fill="#000"/><circle cx="714.8" cy="304.4" r="15.5" fill="#fff"/></g><circle cx="714.8" cy="304.4" r="13.5" fill="#000"/><use href="#ic-users" transform="translate(708.8 298.2) scale(.5)"/>
<g filter="url(#ms)"><path d="M658.4 332.5L672.8 332.5L665.6 345Z" fill="#0c2a6e"/><circle cx="665.6" cy="320" r="15.5" fill="#fff"/></g><circle cx="665.6" cy="320" r="13.5" fill="url(#mb)"/><use href="#ic-mon" transform="translate(665.6 320)"/>
<g filter="url(#ms)"><path d="M644.3 380L658.7 380L651.5 392.5Z" fill="#0c2a6e"/><circle cx="651.5" cy="367.5" r="15.5" fill="#fff"/></g><circle cx="651.5" cy="367.5" r="13.5" fill="url(#mb)"/><use href="#ic-list" transform="translate(651.5 367.5)"/>
<g filter="url(#ms)"><path d="M610.1 403.8L624.5 403.8L617.3 416.3Z" fill="#000"/><circle cx="617.3" cy="391.3" r="15.5" fill="#fff"/></g><circle cx="617.3" cy="391.3" r="13.5" fill="#000"/><use href="#ic-users" transform="translate(611.3 385.1) scale(.5)"/>
<g filter="url(#ms)"><path d="M669.7 400.6L684.1 400.6L676.9 413.1Z" fill="#000"/><circle cx="676.9" cy="388.1" r="15.5" fill="#fff"/></g><circle cx="676.9" cy="388.1" r="13.5" fill="#000"/><use href="#ic-users" transform="translate(670.9 381.9) scale(.5)"/>
</svg>
<div class="abs" style="left:10.0px;top:11.0px;width:140.0px;height:25.0px;border-radius:4px;background:#fff;box-shadow:0 2px 5px rgba(0,0,0,.25)"><div class="t" style="left:7.6px;top:9.2px;font-size:7.6px;color:#4ba3e3;">ERP 1 - 2021</div><svg class="abs" style="left:122.0px;top:10.3px" width="8" height="5" viewBox="0 0 8 5"><path d="M.8.800L4 4l3.200-3.200" fill="none" stroke="#111" stroke-width="1.300" stroke-linecap="round" stroke-linejoin="round"/></svg></div>
<div class="abs" style="left:160.0px;top:11.0px;width:140.0px;height:25.0px;border-radius:4px;background:#fff;box-shadow:0 2px 5px rgba(0,0,0,.25)"><div class="t" style="left:7.6px;top:9.0px;font-size:8px;color:#111;letter-spacing:.32px">Kuala Lumpur</div><svg class="abs" style="left:121.5px;top:10.3px" width="8" height="5" viewBox="0 0 8 5"><path d="M.8.800L4 4l3.200-3.200" fill="none" stroke="#111" stroke-width="1.300" stroke-linecap="round" stroke-linejoin="round"/></svg></div>
<div class="abs" style="left:580.8px;top:13.2px;width:37.2px;height:19.6px;border-radius:4px;background:#fff;box-shadow:0 2px 5px rgba(0,0,0,.25)"><div class="t" style="left:0.0px;top:5.6px;font-size:8.6px;color:#111;width:100%;text-align:center">Filter</div></div>
<div class="abs" style="left:10.0px;top:445.0px;width:90.0px;height:28.0px;border-radius:4px;background:#fff;box-shadow:0 3px 8px rgba(0,0,0,.22)"><svg class="abs" style="left:9px;top:8.500px" width="11" height="11" viewBox="0 0 11 11"><rect x=".6" y="1" width="9.800" height="7" rx="1.200" fill="none" stroke="#333" stroke-width="1"/><path d="M2.600 3.400h5.800M2.600 5.500h5.800M3.500 9.800h4" stroke="#333" stroke-width=".9"/></svg><div class="t" style="left:26.0px;top:5.6px;font-size:7px;color:#111;">Incident</div><div class="t" style="left:26.0px;top:15.2px;font-size:7px;color:#111;">Status</div></div>
<div class="abs" style="left:108.0px;top:445.0px;width:90.0px;height:28.0px;border-radius:4px;background:#fff;box-shadow:0 3px 8px rgba(0,0,0,.22)"><svg class="abs" style="left:9.500px;top:8.500px" width="10" height="11" viewBox="0 0 10 11"><path d="M.8.800h8.400v2.400h-8.400z" fill="#333"/><path d="M.4 3.600h9.200v6.800h-9.200z" fill="#333"/><path d="M3.400 5.600h3.200" stroke="#fff" stroke-width="1"/></svg><div class="t" style="left:26.0px;top:5.6px;font-size:7px;color:#111;">Recovery</div><div class="t" style="left:26.0px;top:15.2px;font-size:7px;color:#111;">Management</div></div>
<div class="abs" style="left:206.0px;top:445.0px;width:90.0px;height:28.0px;border-radius:4px;background:#fff;box-shadow:0 3px 8px rgba(0,0,0,.22)"><svg class="abs" style="left:10px;top:8px" width="9" height="12" viewBox="0 0 9 12"><path d="M4.500.6a3.300 3.300 0 0 1 3.300 3.300c0 2.300-3.300 5.600-3.300 5.600s-3.300-3.300-3.300-5.600a3.300 3.300 0 0 1 3.300-3.300z" fill="#222"/><circle cx="4.500" cy="3.900" r="1.200" fill="#fff"/><path d="M1.500 11h6" stroke="#222" stroke-width="1"/></svg><div class="t" style="left:26.0px;top:5.6px;font-size:7px;color:#111;">Affected</div><div class="t" style="left:26.0px;top:15.2px;font-size:7px;color:#111;">Areas</div></div>
<div class="abs" style="left:304.0px;top:445.0px;width:90.0px;height:28.0px;border-radius:4px;background:#fff;box-shadow:0 3px 8px rgba(0,0,0,.22)"><svg class="abs" style="left:8px;top:8px" width="13" height="12" viewBox="0 0 24 24"><g fill="none" stroke="#222" stroke-width="2" stroke-linecap="round" stroke-linejoin="round"><path d="M17 21v-2a4 4 0 0 0-4-4H5a4 4 0 0 0-4 4v2"/><circle cx="9" cy="7" r="4"/><path d="M23 21v-2a4 4 0 0 0-3-3.870"/><path d="M16 3.130a4 4 0 0 1 0 7.750"/></g></svg><div class="t" style="left:26.0px;top:10.8px;font-size:7px;color:#111;">Attendance</div></div>
<div class="abs" style="left:460.0px;top:455.2px;width:72.0px;height:17.8px;border-radius:4px;background:#fff;box-shadow:0 2px 5px rgba(0,0,0,.25)"><svg class="abs" style="left:8.500px;top:5.600px" width="7" height="7" viewBox="0 0 7 7"><rect x=".5" y=".5" width="6" height="6" rx=".8" fill="none" stroke="#222" stroke-width="1"/><path d="M2 2.200h1.400v1.600h-1.400zM4.200 2.400h1M2 5h3.200" stroke="#222" stroke-width=".8" fill="none"/></svg><div class="t" style="left:18.5px;top:5.6px;font-size:7px;color:#111;">Press Release</div></div>
<div class="abs" style="left:540.0px;top:455.2px;width:52.0px;height:17.8px;border-radius:4px;background:#55a8df;box-shadow:0 2px 5px rgba(0,0,0,.25)"><svg class="abs" style="left:9px;top:5px" width="8" height="8" viewBox="0 0 24 24"><path d="M12 2.500l3 6.100 6.700 1-4.850 4.700 1.150 6.700-6-3.200-6 3.200 1.150-6.700-4.850-4.700 6.700-1z" fill="none" stroke="#fff" stroke-width="2.600" stroke-linejoin="round"/></svg><div class="t" style="left:18.6px;top:5.6px;font-size:7px;color:#fff;">Ratings</div></div>
<svg class="abs" style="left:611.5px;top:442.4px;overflow:visible" width="15" height="15" viewBox="-7.500 -7.500 15 15"><circle r="7" fill="#fff" style="filter:drop-shadow(0 1px 1.500px rgba(0,0,0,.3))"/><text x="0" y="3.1" text-anchor="middle" font-family="'Liberation Sans',sans-serif" font-size="10" fill="#444" stroke="#444" stroke-width=".3">+</text></svg>
<svg class="abs" style="left:611.5px;top:458.1px;overflow:visible" width="15" height="15" viewBox="-7.500 -7.500 15 15"><circle r="7" fill="#fff" style="filter:drop-shadow(0 1px 1.500px rgba(0,0,0,.3))"/><text x="0" y="3.1" text-anchor="middle" font-family="'Liberation Sans',sans-serif" font-size="10" fill="#444" stroke="#444" stroke-width=".3">−</text></svg>

 </div>
 <div id="panel">
<svg class="abs" style="left:12.500px;top:13px" width="11" height="11" viewBox="0 0 24 24"><path d="M12 2.500l3 6.100 6.700 1-4.850 4.700 1.150 6.700-6-3.200-6 3.200 1.150-6.700-4.850-4.700 6.700-1z" fill="none" stroke="#3aa6d6" stroke-width="2.200" stroke-linejoin="round"/></svg>
<div class="t" style="left:28px;top:15.200px;font-size:7px">Ratings</div>
<div class="abs" style="left:12px;top:30.200px;width:176px;height:45.500px;border-radius:3px;background:#eff4f9"></div>
<div class="t" style="left:24.300px;top:40px;font-size:7px">Total Ratings</div>
<div class="t" style="left:24px;top:53.300px;font-size:12px;letter-spacing:-.1px">100</div>
<div class="abs" style="left:12px;top:82.3px;width:176px;height:86.700px;border-radius:3px;background:#5cc0d6"><div class="t" style="left:12px;top:12.300px;font-size:6.700px;color:#fff">Question 1</div><div class="abs" style="left:127.400px;top:8.200px;width:36.600px;height:13.400px;border:1px solid #fff;border-radius:7px"></div><svg class="abs" style="left:131.500px;top:10.500px" width="9" height="9" viewBox="0 0 24 24"><path d="M12 2.800l2.900 5.900 6.500.9-4.700 4.600 1.100 6.500-5.800-3.100-5.800 3.100 1.100-6.500-4.700-4.600 6.500-.9z" fill="none" stroke="#fff" stroke-width="2.300" stroke-linejoin="round"/></svg><div class="t" style="left:142.500px;top:11.600px;font-size:7px;color:#fff">4.5/5</div><svg width="8.800" height="8.800" viewBox="0 0 8 8" style="position:absolute;left:11.4px;top:26.6px"><circle cx="4" cy="4" r="3.5" fill="none" stroke="#fff" stroke-width=".7"/><path d="M2.300 2.400l1 .7M5.700 2.400l-1 .7M2.600 5.800q1.400-1.500 2.800 0" stroke="#fff" stroke-width=".6" fill="none"/></svg><div class="t" style="left:22px;top:27.9px;font-size:6.300px;color:#fff">Very Unsatisfied</div><div class="t" style="right:12.300px;top:27.9px;font-size:6.300px;color:#fff">0 – 0.00%</div><svg width="8.800" height="8.800" viewBox="0 0 8 8" style="position:absolute;left:11.4px;top:37.6px"><circle cx="4" cy="4" r="3.5" fill="none" stroke="#fff" stroke-width=".7"/><path d="M2.400 2.600l1.100 .9M5.600 2.600l-1.100 .9M2.600 5.700q1.400-1.200 2.800 0" stroke="#fff" stroke-width=".6" fill="none"/></svg><div class="t" style="left:22px;top:38.9px;font-size:6.300px;color:#fff">Unsatisfied</div><div class="t" style="right:12.300px;top:38.9px;font-size:6.300px;color:#fff">0 – 0.00%</div><svg width="8.800" height="8.800" viewBox="0 0 8 8" style="position:absolute;left:11.4px;top:48.6px"><circle cx="4" cy="4" r="3.5" fill="none" stroke="#fff" stroke-width=".7"/><path d="M2.500 3.100h1M4.500 3.100h1M2.700 5.300h2.600" stroke="#fff" stroke-width=".6" fill="none"/></svg><div class="t" style="left:22px;top:49.9px;font-size:6.300px;color:#fff">Neutral</div><div class="t" style="right:12.300px;top:49.9px;font-size:6.300px;color:#fff">3 – 3.00%</div><svg width="8.800" height="8.800" viewBox="0 0 8 8" style="position:absolute;left:11.4px;top:59.6px"><circle cx="4" cy="4" r="3.5" fill="none" stroke="#fff" stroke-width=".7"/><path d="M2.500 3h1M4.500 3h1M2.600 4.900q1.400 1.400 2.800 0" stroke="#fff" stroke-width=".6" fill="none"/></svg><div class="t" style="left:22px;top:60.9px;font-size:6.300px;color:#fff">Satisfied</div><div class="t" style="right:12.300px;top:60.9px;font-size:6.300px;color:#fff">0 – 0.00%</div><svg width="8.800" height="8.800" viewBox="0 0 8 8" style="position:absolute;left:11.4px;top:70.6px"><circle cx="4" cy="4" r="3.5" fill="none" stroke="#fff" stroke-width=".7"/><path d="M2.400 3h1.100M4.500 3h1.100M2.400 4.500h3.200q-.2 1.700-1.600 1.700t-1.600-1.700z" stroke="#fff" stroke-width=".6" fill="none"/></svg><div class="t" style="left:22px;top:71.9px;font-size:6.300px;color:#fff">Very Satisfied</div><div class="t" style="right:12.300px;top:71.9px;font-size:6.300px;color:#fff">97 – 97.00%</div></div>
<div class="abs" style="left:12px;top:175.0px;width:176px;height:86.700px;border-radius:3px;background:#4285dc"><div class="t" style="left:12px;top:12.300px;font-size:6.700px;color:#fff">Question 2</div><div class="abs" style="left:127.400px;top:8.200px;width:36.600px;height:13.400px;border:1px solid #fff;border-radius:7px"></div><svg class="abs" style="left:131.500px;top:10.500px" width="9" height="9" viewBox="0 0 24 24"><path d="M12 2.800l2.900 5.900 6.500.9-4.700 4.600 1.100 6.500-5.800-3.100-5.800 3.100 1.100-6.500-4.700-4.600 6.500-.9z" fill="none" stroke="#fff" stroke-width="2.300" stroke-linejoin="round"/></svg><div class="t" style="left:142.500px;top:11.600px;font-size:7px;color:#fff">4.5/5</div><svg width="8.800" height="8.800" viewBox="0 0 8 8" style="position:absolute;left:11.4px;top:26.6px"><circle cx="4" cy="4" r="3.5" fill="none" stroke="#fff" stroke-width=".7"/><path d="M2.300 2.400l1 .7M5.700 2.400l-1 .7M2.600 5.800q1.400-1.500 2.800 0" stroke="#fff" stroke-width=".6" fill="none"/></svg><div class="t" style="left:22px;top:27.9px;font-size:6.300px;color:#fff">Very Unsatisfied</div><div class="t" style="right:12.300px;top:27.9px;font-size:6.300px;color:#fff">0 – 0.00%</div><svg width="8.800" height="8.800" viewBox="0 0 8 8" style="position:absolute;left:11.4px;top:37.6px"><circle cx="4" cy="4" r="3.5" fill="none" stroke="#fff" stroke-width=".7"/><path d="M2.400 2.600l1.100 .9M5.600 2.600l-1.100 .9M2.600 5.700q1.400-1.200 2.800 0" stroke="#fff" stroke-width=".6" fill="none"/></svg><div class="t" style="left:22px;top:38.9px;font-size:6.300px;color:#fff">Unsatisfied</div><div class="t" style="right:12.300px;top:38.9px;font-size:6.300px;color:#fff">0 – 0.00%</div><svg width="8.800" height="8.800" viewBox="0 0 8 8" style="position:absolute;left:11.4px;top:48.6px"><circle cx="4" cy="4" r="3.5" fill="none" stroke="#fff" stroke-width=".7"/><path d="M2.500 3.100h1M4.500 3.100h1M2.700 5.300h2.600" stroke="#fff" stroke-width=".6" fill="none"/></svg><div class="t" style="left:22px;top:49.9px;font-size:6.300px;color:#fff">Neutral</div><div class="t" style="right:12.300px;top:49.9px;font-size:6.300px;color:#fff">3 – 3.00%</div><svg width="8.800" height="8.800" viewBox="0 0 8 8" style="position:absolute;left:11.4px;top:59.6px"><circle cx="4" cy="4" r="3.5" fill="none" stroke="#fff" stroke-width=".7"/><path d="M2.500 3h1M4.500 3h1M2.600 4.900q1.400 1.400 2.800 0" stroke="#fff" stroke-width=".6" fill="none"/></svg><div class="t" style="left:22px;top:60.9px;font-size:6.300px;color:#fff">Satisfied</div><div class="t" style="right:12.300px;top:60.9px;font-size:6.300px;color:#fff">0 – 0.00%</div><svg width="8.800" height="8.800" viewBox="0 0 8 8" style="position:absolute;left:11.4px;top:70.6px"><circle cx="4" cy="4" r="3.5" fill="none" stroke="#fff" stroke-width=".7"/><path d="M2.400 3h1.100M4.500 3h1.100M2.400 4.500h3.200q-.2 1.700-1.600 1.700t-1.600-1.700z" stroke="#fff" stroke-width=".6" fill="none"/></svg><div class="t" style="left:22px;top:71.9px;font-size:6.300px;color:#fff">Very Satisfied</div><div class="t" style="right:12.300px;top:71.9px;font-size:6.300px;color:#fff">97 – 97.00%</div></div>
<div class="abs" style="left:12px;top:274px;width:83.500px;height:20px;border-radius:3px;background:#0b0b0b;box-shadow:0 2px 4px rgba(0,0,0,.3)"></div>
<div class="t" style="left:20px;top:279.600px;font-size:7.250px;color:#fff">View All Rating List</div>

 </div>
</div>
</body>
</html>
